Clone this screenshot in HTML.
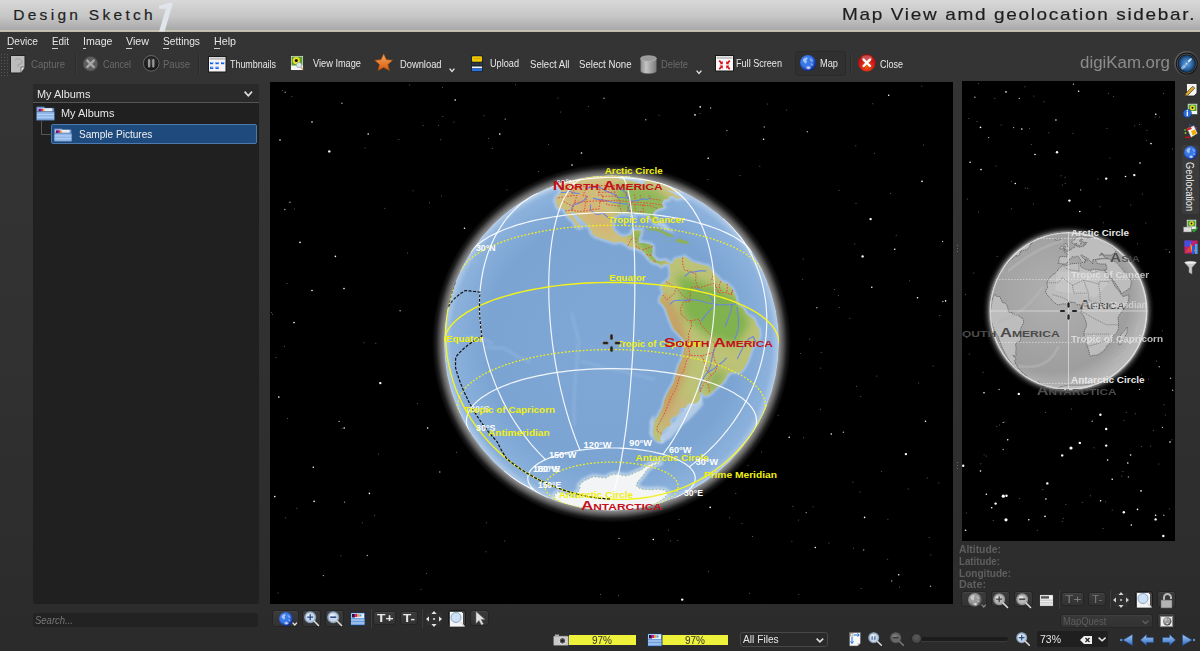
<!DOCTYPE html>
<html><head><meta charset="utf-8"><style>
html,body{margin:0;padding:0;}
body{width:1200px;height:651px;position:relative;overflow:hidden;background:#2e2e2e;font-family:"Liberation Sans", sans-serif;}
.t{position:absolute;white-space:nowrap;line-height:1;transform-origin:0 0;font-family:"Liberation Sans", sans-serif;}
</style></head><body>
<div style='position:absolute;left:0px;top:0px;width:1200px;height:30px;background:linear-gradient(#d8d8d8,#c6c6c6 55%,#a9a9a9)'></div>
<div style='position:absolute;left:0px;top:30px;width:1200px;height:2px;background:linear-gradient(#c9c7bb,#bdb9a6)'></div>
<svg width="25" height="32" viewBox="150 0 25 32" style="position:absolute;left:150px;top:0"><path d="M159 31.5L164.6 31.5L172.8 3.6L170.6 2.2L159.3 5.8L158.6 8.7L166 8.8Z" fill="#dfe5ea"/></svg>
<div style='position:absolute;left:0px;top:32px;width:1200px;height:619px;background:linear-gradient(#343434,#323232 40%,#2c2b2c)'></div>
<div style='position:absolute;left:7px;top:47.5px;width:6px;height:1px;background:#cfcfcf'></div>
<div style='position:absolute;left:52px;top:47.5px;width:6px;height:1px;background:#cfcfcf'></div>
<div style='position:absolute;left:83px;top:47.5px;width:3px;height:1px;background:#cfcfcf'></div>
<div style='position:absolute;left:126px;top:47.5px;width:6px;height:1px;background:#cfcfcf'></div>
<div style='position:absolute;left:162.5px;top:47.5px;width:6px;height:1px;background:#cfcfcf'></div>
<div style='position:absolute;left:213.5px;top:47.5px;width:6px;height:1px;background:#cfcfcf'></div>
<div style='position:absolute;left:33px;top:84px;width:225.6px;height:520px;background:#202020;border-radius:3px'></div>
<div style='position:absolute;left:33px;top:84px;width:225.6px;height:17.5px;background:#2a2a2a;border-radius:3px 3px 0 0'></div>
<div style='position:absolute;left:33px;top:101.5px;width:225.6px;height:1px;background:#555'></div>
<div style='position:absolute;left:51.4px;top:124.4px;width:206px;height:19.6px;background:#1f4a7d;border:1px solid #4a7ab0;box-sizing:border-box;border-radius:2px'></div>
<div style='position:absolute;left:33px;top:612.7px;width:225.3px;height:14px;background:#222;border-radius:3px'></div>
<div style='position:absolute;left:270px;top:82px;width:683px;height:522px;background:#000'></div>
<svg width="683" height="522" viewBox="270 82 683 522" style="position:absolute;left:270px;top:82px"><circle cx="329.3" cy="151.4" r="1.2" fill="#fff"/><circle cx="455.2" cy="100" r="0.8" fill="#fff"/><circle cx="499.8" cy="134.1" r="0.8" fill="#fff"/><circle cx="581.5" cy="153" r="0.8" fill="#fff"/><circle cx="572" cy="165" r="0.8" fill="#fff"/><circle cx="368.2" cy="134" r="0.8" fill="#fff"/><circle cx="312" cy="122" r="0.8" fill="#fff"/><circle cx="280" cy="140" r="0.8" fill="#fff"/><circle cx="335.4" cy="256.4" r="0.8" fill="#fff"/><circle cx="464.5" cy="228.3" r="0.8" fill="#fff"/><circle cx="300" cy="242.4" r="0.8" fill="#fff"/><circle cx="312" cy="290.5" r="0.8" fill="#fff"/><circle cx="344" cy="288.5" r="0.8" fill="#fff"/><circle cx="294" cy="322.6" r="0.8" fill="#fff"/><circle cx="700.2" cy="106.9" r="0.8" fill="#fff"/><circle cx="695" cy="114.9" r="0.8" fill="#fff"/><circle cx="708.2" cy="158.2" r="0.8" fill="#fff"/><circle cx="870.6" cy="219.1" r="1.2" fill="#fff"/><circle cx="862.6" cy="256.4" r="1.2" fill="#fff"/><circle cx="894.7" cy="249.2" r="0.8" fill="#fff"/><circle cx="922" cy="181.4" r="0.8" fill="#fff"/><circle cx="871.8" cy="287.3" r="0.8" fill="#fff"/><circle cx="917.5" cy="297.7" r="0.8" fill="#fff"/><circle cx="945.6" cy="300.9" r="0.8" fill="#fff"/><circle cx="763.6" cy="139.3" r="0.8" fill="#fff"/><circle cx="888.7" cy="95.2" r="0.8" fill="#fff"/><circle cx="380.3" cy="383.1" r="1.2" fill="#fff"/><circle cx="427.6" cy="428" r="0.8" fill="#fff"/><circle cx="274.8" cy="496.6" r="0.8" fill="#fff"/><circle cx="314.1" cy="501.4" r="0.8" fill="#fff"/><circle cx="369.4" cy="493.4" r="0.8" fill="#fff"/><circle cx="344.2" cy="428" r="0.8" fill="#fff"/><circle cx="278.8" cy="397.1" r="0.8" fill="#fff"/><circle cx="313.3" cy="467.3" r="0.8" fill="#fff"/><circle cx="905.9" cy="454.1" r="1.2" fill="#fff"/><circle cx="925.5" cy="421.2" r="0.8" fill="#fff"/><circle cx="831.3" cy="434" r="0.8" fill="#fff"/><circle cx="653.3" cy="539.5" r="0.8" fill="#fff"/><circle cx="682.2" cy="599.6" r="1.2" fill="#fff"/><circle cx="815.3" cy="547.5" r="0.8" fill="#fff"/><circle cx="898.7" cy="574.8" r="0.8" fill="#fff"/><circle cx="710.2" cy="507.4" r="0.8" fill="#fff"/><circle cx="864.6" cy="517.4" r="0.8" fill="#fff"/><circle cx="789.2" cy="437.2" r="0.8" fill="#fff"/><circle cx="362.4" cy="522.8" r="0.5" fill="#fff" fill-opacity="0.45"/><circle cx="807.3" cy="131.7" r="0.7" fill="#fff" fill-opacity="0.7"/><circle cx="839.3" cy="307.6" r="0.5" fill="#fff" fill-opacity="0.45"/><circle cx="272.4" cy="314.2" r="0.5" fill="#fff" fill-opacity="0.45"/><circle cx="426.6" cy="573.6" r="0.5" fill="#fff" fill-opacity="0.45"/><circle cx="291.8" cy="96.2" r="0.5" fill="#fff" fill-opacity="0.45"/><circle cx="909.6" cy="280.8" r="0.5" fill="#fff" fill-opacity="0.45"/><circle cx="558.0" cy="98.1" r="0.5" fill="#fff" fill-opacity="0.45"/><circle cx="429.5" cy="202.8" r="0.5" fill="#fff" fill-opacity="0.45"/><circle cx="285.6" cy="517.7" r="0.5" fill="#fff" fill-opacity="0.45"/><circle cx="707.8" cy="179.5" r="0.5" fill="#fff" fill-opacity="0.45"/><circle cx="855.8" cy="145.7" r="0.5" fill="#fff" fill-opacity="0.45"/><circle cx="761.6" cy="452.1" r="0.5" fill="#fff" fill-opacity="0.45"/><circle cx="670.6" cy="541.0" r="0.5" fill="#fff" fill-opacity="0.45"/><circle cx="294.5" cy="209.0" r="0.5" fill="#fff" fill-opacity="0.45"/><circle cx="800.3" cy="353.4" r="0.5" fill="#fff" fill-opacity="0.45"/><circle cx="604.0" cy="98.3" r="0.7" fill="#fff" fill-opacity="0.7"/><circle cx="749.3" cy="593.3" r="0.5" fill="#fff" fill-opacity="0.45"/><circle cx="538.6" cy="171.4" r="0.5" fill="#fff" fill-opacity="0.45"/><circle cx="938.8" cy="482.9" r="0.5" fill="#fff" fill-opacity="0.45"/><circle cx="856.0" cy="203.5" r="0.5" fill="#fff" fill-opacity="0.45"/><circle cx="918.7" cy="382.9" r="0.5" fill="#fff" fill-opacity="0.45"/><circle cx="921.8" cy="86.0" r="0.5" fill="#fff" fill-opacity="0.45"/><circle cx="828.9" cy="542.9" r="0.5" fill="#fff" fill-opacity="0.45"/><circle cx="821.2" cy="352.2" r="0.5" fill="#fff" fill-opacity="0.45"/><circle cx="560.7" cy="112.1" r="0.5" fill="#fff" fill-opacity="0.45"/><circle cx="290.0" cy="202.2" r="0.7" fill="#fff" fill-opacity="0.7"/><circle cx="668.4" cy="529.9" r="0.5" fill="#fff" fill-opacity="0.45"/><circle cx="813.0" cy="506.7" r="0.5" fill="#fff" fill-opacity="0.45"/><circle cx="843.4" cy="432.3" r="0.7" fill="#fff" fill-opacity="0.7"/><circle cx="282.3" cy="90.6" r="0.5" fill="#fff" fill-opacity="0.45"/><circle cx="440.7" cy="139.8" r="0.5" fill="#fff" fill-opacity="0.45"/><circle cx="505.2" cy="119.1" r="0.7" fill="#fff" fill-opacity="0.7"/><circle cx="456.6" cy="452.3" r="0.5" fill="#fff" fill-opacity="0.45"/><circle cx="287.1" cy="283.6" r="0.5" fill="#fff" fill-opacity="0.45"/><circle cx="398.9" cy="139.4" r="0.5" fill="#fff" fill-opacity="0.45"/><circle cx="285.2" cy="92.3" r="0.7" fill="#fff" fill-opacity="0.7"/><circle cx="759.8" cy="166.2" r="0.5" fill="#fff" fill-opacity="0.45"/><circle cx="421.0" cy="589.3" r="0.5" fill="#fff" fill-opacity="0.45"/><circle cx="700.0" cy="113.5" r="0.5" fill="#fff" fill-opacity="0.45"/><circle cx="929.2" cy="537.4" r="0.5" fill="#fff" fill-opacity="0.45"/><circle cx="854.8" cy="244.1" r="0.5" fill="#fff" fill-opacity="0.45"/><circle cx="442.6" cy="87.4" r="0.5" fill="#fff" fill-opacity="0.45"/><circle cx="296.8" cy="508.3" r="0.5" fill="#fff" fill-opacity="0.45"/><circle cx="861.1" cy="588.4" r="0.5" fill="#fff" fill-opacity="0.45"/><circle cx="506.9" cy="189.8" r="0.5" fill="#fff" fill-opacity="0.45"/><circle cx="342.0" cy="428.6" r="0.5" fill="#fff" fill-opacity="0.45"/><circle cx="863.7" cy="549.9" r="0.7" fill="#fff" fill-opacity="0.7"/><circle cx="407.6" cy="253.1" r="0.5" fill="#fff" fill-opacity="0.45"/><circle cx="803.2" cy="259.0" r="0.5" fill="#fff" fill-opacity="0.45"/><circle cx="729.6" cy="517.8" r="0.5" fill="#fff" fill-opacity="0.45"/><circle cx="504.8" cy="541.0" r="0.5" fill="#fff" fill-opacity="0.45"/><circle cx="600.5" cy="594.5" r="0.5" fill="#fff" fill-opacity="0.45"/><circle cx="764.3" cy="126.9" r="0.7" fill="#fff" fill-opacity="0.7"/><circle cx="890.5" cy="193.5" r="0.5" fill="#fff" fill-opacity="0.45"/><circle cx="679.1" cy="519.5" r="0.5" fill="#fff" fill-opacity="0.45"/><circle cx="860.8" cy="396.5" r="0.5" fill="#fff" fill-opacity="0.45"/><circle cx="874.3" cy="153.2" r="0.5" fill="#fff" fill-opacity="0.45"/><circle cx="341.9" cy="103.3" r="0.7" fill="#fff" fill-opacity="0.7"/><circle cx="860.0" cy="492.0" r="0.5" fill="#fff" fill-opacity="0.45"/><circle cx="802.7" cy="279.2" r="0.5" fill="#fff" fill-opacity="0.45"/><circle cx="423.1" cy="125.4" r="0.5" fill="#fff" fill-opacity="0.45"/><circle cx="876.7" cy="375.9" r="0.5" fill="#fff" fill-opacity="0.45"/><circle cx="806.2" cy="512.6" r="0.7" fill="#fff" fill-opacity="0.7"/><circle cx="726.9" cy="130.6" r="0.7" fill="#fff" fill-opacity="0.7"/><circle cx="872.8" cy="103.8" r="0.5" fill="#fff" fill-opacity="0.45"/><circle cx="942.9" cy="301.5" r="0.7" fill="#fff" fill-opacity="0.7"/><circle cx="384.8" cy="208.3" r="0.5" fill="#fff" fill-opacity="0.45"/><circle cx="340.9" cy="555.7" r="0.5" fill="#fff" fill-opacity="0.45"/><circle cx="930.8" cy="554.9" r="0.5" fill="#fff" fill-opacity="0.45"/><circle cx="339.1" cy="421.4" r="0.7" fill="#fff" fill-opacity="0.7"/><circle cx="278.1" cy="593.0" r="0.5" fill="#fff" fill-opacity="0.45"/><circle cx="484.0" cy="115.7" r="0.5" fill="#fff" fill-opacity="0.45"/><circle cx="930.5" cy="586.3" r="0.7" fill="#fff" fill-opacity="0.7"/><circle cx="417.3" cy="403.6" r="0.5" fill="#fff" fill-opacity="0.45"/><circle cx="438.5" cy="125.2" r="0.5" fill="#fff" fill-opacity="0.45"/><circle cx="939.7" cy="315.5" r="0.5" fill="#fff" fill-opacity="0.45"/><circle cx="708.6" cy="571.2" r="0.5" fill="#fff" fill-opacity="0.45"/><circle cx="486.4" cy="522.7" r="0.5" fill="#fff" fill-opacity="0.45"/><circle cx="284.9" cy="209.5" r="0.7" fill="#fff" fill-opacity="0.7"/><circle cx="645.8" cy="119.8" r="0.7" fill="#fff" fill-opacity="0.7"/><circle cx="809.7" cy="339.0" r="0.5" fill="#fff" fill-opacity="0.45"/><circle cx="375.8" cy="343.2" r="0.5" fill="#fff" fill-opacity="0.45"/><circle cx="323.4" cy="575.6" r="0.7" fill="#fff" fill-opacity="0.7"/><circle cx="798.8" cy="594.2" r="0.5" fill="#fff" fill-opacity="0.45"/><circle cx="488.5" cy="138.5" r="0.5" fill="#fff" fill-opacity="0.45"/><circle cx="896.2" cy="235.3" r="0.5" fill="#fff" fill-opacity="0.45"/><circle cx="367.3" cy="555.5" r="0.7" fill="#fff" fill-opacity="0.7"/><circle cx="485.9" cy="551.7" r="0.5" fill="#fff" fill-opacity="0.45"/><circle cx="887.9" cy="519.3" r="0.5" fill="#fff" fill-opacity="0.45"/><circle cx="739.9" cy="175.5" r="0.5" fill="#fff" fill-opacity="0.45"/><circle cx="378.4" cy="454.0" r="0.5" fill="#fff" fill-opacity="0.45"/><circle cx="442.8" cy="116.4" r="0.5" fill="#fff" fill-opacity="0.45"/><circle cx="820.6" cy="368.1" r="0.5" fill="#fff" fill-opacity="0.45"/><circle cx="849.9" cy="318.3" r="0.5" fill="#fff" fill-opacity="0.45"/><circle cx="287.6" cy="418.5" r="0.5" fill="#fff" fill-opacity="0.45"/><circle cx="659.0" cy="115.3" r="0.5" fill="#fff" fill-opacity="0.45"/><circle cx="365.0" cy="147.9" r="0.5" fill="#fff" fill-opacity="0.45"/><circle cx="834.7" cy="289.5" r="0.5" fill="#fff" fill-opacity="0.45"/><circle cx="276.1" cy="357.4" r="0.5" fill="#fff" fill-opacity="0.45"/><circle cx="887.7" cy="559.3" r="0.5" fill="#fff" fill-opacity="0.45"/><circle cx="710.6" cy="108.0" r="0.7" fill="#fff" fill-opacity="0.7"/><circle cx="619.0" cy="538.4" r="0.7" fill="#fff" fill-opacity="0.7"/><circle cx="791.9" cy="541.3" r="0.5" fill="#fff" fill-opacity="0.45"/><circle cx="741.9" cy="523.6" r="0.5" fill="#fff" fill-opacity="0.45"/><circle cx="747.9" cy="465.2" r="0.5" fill="#fff" fill-opacity="0.45"/><circle cx="853.3" cy="548.3" r="0.5" fill="#fff" fill-opacity="0.45"/><circle cx="441.4" cy="195.9" r="0.5" fill="#fff" fill-opacity="0.45"/><circle cx="786.3" cy="110.1" r="0.5" fill="#fff" fill-opacity="0.45"/><circle cx="767.3" cy="104.1" r="0.5" fill="#fff" fill-opacity="0.45"/><circle cx="820.4" cy="409.2" r="0.5" fill="#fff" fill-opacity="0.45"/><circle cx="891.7" cy="580.9" r="0.7" fill="#fff" fill-opacity="0.7"/><circle cx="798.5" cy="520.0" r="0.5" fill="#fff" fill-opacity="0.45"/><circle cx="899.5" cy="587.1" r="0.5" fill="#fff" fill-opacity="0.45"/><circle cx="816.8" cy="307.7" r="0.7" fill="#fff" fill-opacity="0.7"/><circle cx="492.3" cy="148.6" r="0.5" fill="#fff" fill-opacity="0.45"/><circle cx="923.4" cy="144.9" r="0.5" fill="#fff" fill-opacity="0.45"/><circle cx="548.6" cy="144.3" r="0.5" fill="#fff" fill-opacity="0.45"/><circle cx="439.8" cy="472.0" r="0.7" fill="#fff" fill-opacity="0.7"/><circle cx="400.1" cy="310.7" r="0.7" fill="#fff" fill-opacity="0.7"/><circle cx="839.0" cy="190.2" r="0.5" fill="#fff" fill-opacity="0.45"/><circle cx="735.8" cy="493.6" r="0.5" fill="#fff" fill-opacity="0.45"/><circle cx="933.1" cy="366.1" r="0.5" fill="#fff" fill-opacity="0.45"/><circle cx="852.9" cy="482.1" r="0.5" fill="#fff" fill-opacity="0.45"/><circle cx="344.5" cy="502.1" r="0.7" fill="#fff" fill-opacity="0.7"/><circle cx="927.2" cy="478.0" r="0.5" fill="#fff" fill-opacity="0.45"/><circle cx="363.9" cy="342.7" r="0.5" fill="#fff" fill-opacity="0.45"/><circle cx="271.6" cy="312.6" r="0.5" fill="#fff" fill-opacity="0.45"/><circle cx="803.5" cy="437.7" r="0.5" fill="#fff" fill-opacity="0.45"/><circle cx="409.7" cy="85.0" r="0.5" fill="#fff" fill-opacity="0.45"/><circle cx="677.8" cy="540.6" r="0.5" fill="#fff" fill-opacity="0.45"/><circle cx="618.5" cy="595.3" r="0.5" fill="#fff" fill-opacity="0.45"/><circle cx="838.5" cy="295.3" r="0.5" fill="#fff" fill-opacity="0.45"/><circle cx="942.6" cy="241.5" r="0.7" fill="#fff" fill-opacity="0.7"/><circle cx="515.4" cy="84.8" r="0.5" fill="#fff" fill-opacity="0.45"/><circle cx="856.6" cy="386.3" r="0.5" fill="#fff" fill-opacity="0.45"/><circle cx="881.6" cy="471.6" r="0.5" fill="#fff" fill-opacity="0.45"/><circle cx="778.1" cy="415.3" r="0.5" fill="#fff" fill-opacity="0.45"/><circle cx="908.2" cy="489.1" r="0.5" fill="#fff" fill-opacity="0.45"/><circle cx="792.9" cy="506.2" r="0.5" fill="#fff" fill-opacity="0.45"/><circle cx="752.5" cy="536.6" r="0.5" fill="#fff" fill-opacity="0.45"/><circle cx="374.4" cy="515.3" r="0.5" fill="#fff" fill-opacity="0.45"/><circle cx="588.6" cy="106.6" r="0.5" fill="#fff" fill-opacity="0.45"/><circle cx="284.4" cy="346.2" r="0.5" fill="#fff" fill-opacity="0.45"/><circle cx="413.0" cy="190.8" r="0.5" fill="#fff" fill-opacity="0.45"/><circle cx="454.0" cy="121.9" r="0.5" fill="#fff" fill-opacity="0.45"/></svg>
<svg width="683" height="522" viewBox="270 82 683 522" style="position:absolute;left:270px;top:82px">
<defs>
<radialGradient id="halo" cx="611.5" cy="343" r="179.5" gradientUnits="userSpaceOnUse"><stop offset="0.9331" stop-color="#929292"/><stop offset="0.9554" stop-color="#5c5c5c"/><stop offset="0.9777" stop-color="#1c1c1c"/><stop offset="1" stop-color="#000"/></radialGradient>
<radialGradient id="ocean" cx="611.5" cy="343" r="167.5" gradientUnits="userSpaceOnUse"><stop offset="0" stop-color="#7fa8d6"/><stop offset="0.75" stop-color="#7ba4d3"/><stop offset="0.96" stop-color="#8cb2dc"/><stop offset="1" stop-color="#a4c2e4"/></radialGradient>
<radialGradient id="rim" cx="611.5" cy="343" r="167.5" gradientUnits="userSpaceOnUse"><stop offset="0.95" stop-color="#fff" stop-opacity="0"/><stop offset="0.99" stop-color="#fff" stop-opacity="0.12"/><stop offset="1" stop-color="#fff" stop-opacity="0.3"/></radialGradient>
<clipPath id="gclip"><circle cx="611.5" cy="343" r="167.5"/></clipPath>
<clipPath id="naclip"><path d="M670.4 265.2L666.8 264L664.1 263.9L661.5 265.9L658 263.4L652.7 262.1L648.6 258.3L646.5 255.1L641.3 250.1L638.4 249.2L635.6 248.3L630.2 247.1L625.6 243.8L620.8 241.4L615.7 242.4L612.9 241.7L610.1 241L606.6 239.9L603.1 238.8L599.7 237.7L596.3 236.7L591.5 233.1L591.2 229.9L588.7 226.4L586.7 224.5L584.7 222.6L581.9 220.2L579.2 217.7L576.7 215.3L574.6 213.6L572.4 212.5L570.4 211.4L571.4 213.3L572.5 215.3L573.8 217L575.1 218.8L576.3 220.6L577.5 222.5L579.2 225L580.8 226.9L578.7 227.5L575.1 224.7L574.3 221.8L572.2 220L570.2 218.3L567.7 215.6L565.7 212.5L565.1 210L562.9 208.6L560.7 208.5L558.5 208.3L557.7 206.8L557 205.4L556.6 203.7L556 202.4L555.5 201.1L555.9 198.9L557 196.8L558.2 195.4L559.3 194.1L560.5 192.8L561 191.5L561.5 190.3L561.8 188.8L560.7 188.6L559.6 188.5L559.7 187.3L559.8 186.7L560 186L559.5 185.6L559.1 185.2L558.8 185L558.5 184.9L558.2 184.7L557.5 184.8L556.9 185L556.3 185.1L555.3 185.3L554.4 185.6L553.4 185.9L552.5 186.2L551.6 186.6L551 186.8L550.3 187.1L549.7 187.3L548.8 187.7L547.9 188L547 188.4L543.1 190.1L540.7 191.2L538.3 192.3L536.4 193.3L534.5 194.2L532.6 195.2L530.8 196.2L529 197.2L527.2 198.3L526.1 198.9L524.9 199.6L523.8 200.3L525.9 199L528 197.8L530.1 196.6L533 195L536 193.5L535.3 193.8L534.7 194.2L534.1 194.5L533.5 194.8L534 194.5L534.6 194.2L535.2 193.9L537.2 192.9L539.2 191.9L541.4 190.9L543.1 190.1L544.8 189.3L546.6 188.6L546.2 188.7L546 188.9L545.7 189L545.4 189.1L545.2 189.2L545.2 189.2L546.6 188.6L548 188L549.5 187.4L550.9 186.8L552.4 186.3L554 185.7L555.4 185.2L556.7 184.7L558.1 184.2L559.4 183.8L560.5 183.4L561.6 183.1L562.7 182.8L563.8 182.4L564.9 182.1L565.1 182L565.4 182L565.7 181.9L566 181.8L566.3 181.7L566.8 181.6L567.2 181.5L567.7 181.3L568.2 181.2L568.7 181L569.3 180.9L569.9 180.8L570.4 180.6L571 180.5L571.7 180.3L572.2 180.2L572.7 180.1L573.3 179.9L573.8 179.8L574.4 179.7L575.6 179.4L576.7 179.2L577.8 178.9L578.9 178.7L580 178.5L581.1 178.3L581.8 178.2L582.5 178L583.3 177.9L584.1 177.8L584.8 177.6L585.6 177.5L586.4 177.4L587.2 177.3L588 177.2L588.8 177L589.6 176.9L590.5 176.8L591.5 176.7L592.4 176.6L593.4 176.5L594.4 176.4L595.4 176.3L596.4 176.2L597.4 176.1L598.5 176L599.5 175.9L600.6 175.9L601.7 175.8L602.8 175.7L603.9 175.7L604.9 175.6L606 175.6L607.1 175.6L608.2 175.5L609.3 175.5L610.4 175.5L611.5 175.5L612.6 175.5L613.7 175.5L614.7 175.5L615.7 175.6L616.8 175.6L617.9 175.6L619.1 175.7L620.2 175.7L621.4 175.8L622.5 175.9L623.7 176L624.8 176L626 176.1L627.2 176.3L628.4 176.4L629.5 176.5L628.8 176.5L628 176.4L627.1 176.4L626.2 176.4L625.3 176.5L624.3 176.5L623 176.5L621.8 176.6L620.4 176.7L619 176.8L618.3 177.2L617.6 177.6L616.8 178L618.5 178.6L620.2 179.2L622.1 179.4L624 179.7L625.9 179.9L627.8 180.2L629.5 180.5L631.2 180.8L633 181.1L635.9 182.1L638.9 183.2L641.7 184.1L644.6 185L644.4 184.2L644.3 183.4L644.7 182.6L645.1 181.9L643.6 181L642.1 180.2L640.7 179.5L639.3 178.8L638.6 178.3L639.9 178.5L641.2 178.7L642.6 178.9L643.9 179.2L645.8 179.6L647.7 180L649.6 180.5L652.1 181.3L654.6 182.3L655.5 182.3L656.3 182.3L657.1 182.4L660.4 183.6L663.8 184.9L667.2 186.3L669.5 187.1L671.7 188L674 188.9L676.9 190.3L679.7 191.7L679.2 192L678.5 192.2L677.5 192.5L675.9 192.1L674.3 191.7L672.6 191.3L670.9 190.9L669.3 190.7L667.5 190.5L666.2 191.1L668.1 191.5L670 191.9L671.9 192.4L674.6 194.3L676 195.2L678.1 196.1L680.3 197L682.4 198L681.1 198.1L679.7 198.2L678.3 198.3L676.8 198.4L672.7 196.1L671.3 196.2L669.8 196.3L668.4 196.4L668.8 198.5L670.1 199L667.6 199.2L665.5 199.3L663.2 199.4L663.7 200.9L662.5 201.7L661.6 204.2L663.7 206.8L662 207.9L660 208.3L658 208.7L655.2 210.5L653 212.9L653.4 215.6L656 218.7L657.8 221.8L657.3 224.3L655.3 224L653.6 221.3L650.5 218.1L649.7 215.2L646.6 214L643 214.1L640.4 213.4L637.9 212.8L635.4 212.7L632.9 212.7L633.7 214.9L629.3 214.1L626.1 213.6L622.9 213.2L619.2 214L614.6 216.2L613.1 219.1L612.8 221.1L612.6 223.1L612.4 225.2L612.3 227.3L613.7 230.5L617 233.8L621.2 236.8L624.7 236.4L628.1 236.1L631.3 234.7L632.5 231L637.2 230.2L641.2 230.4L640.8 232.6L640.3 234.7L639.1 236.9L639 239.9L638.9 243L642 243.1L645 243.2L647.8 243.9L650.5 244.6L652.6 246.5L652.5 249.2L652.4 251.9L652.1 255.6L656.5 260.5L661.2 261.3L665.3 260.7L669.5 263.3L670.4 265.2Z"/></clipPath>
<clipPath id="saclip"><path d="M669.5 263.3L672.2 264.2L673.4 261.8L674.5 259.5L677.8 258.3L682.6 257.6L685 256.6L688.6 259.5L692.5 262.2L695.7 263L698.7 263.8L701.2 264.5L703.6 265.2L705.9 265.6L708.3 266.1L710.9 269.5L713.5 272.7L715.9 275.3L718.4 277.9L720.8 281.2L723.5 282.2L726.2 283.2L728.9 285.6L731.6 288L733.8 292.2L735.9 297.6L736.5 300.9L736.9 304.2L739.8 306.8L741.7 307.6L743.5 308.4L746 313.8L748.1 315.3L750.2 316.8L752.2 318.2L754.1 319.6L755.5 322.8L756.8 326.1L758.1 327.8L759.4 329.6L759.5 332.9L759.6 336.2L758.6 340.1L757 342L755.3 344L753.7 346.1L752.1 348.2L751 351.4L749.9 354.7L748.8 357.7L747.8 360.8L746.4 363.5L745 366.2L743.4 368.6L741.7 370.9L739.4 372.6L737.3 372.1L735.2 371.7L733.2 371.9L731.3 372.1L727.3 375.1L725.6 378.3L723.8 381.5L720.2 384.8L716.2 387.9L713.9 390.2L711.7 392.4L708.6 395L705.2 396L703.6 394.6L701.9 393.1L700.2 391.7L700.4 396.3L699.3 400.5L696 403.4L693.7 403.4L691.3 403.4L688.9 403.4L686.9 404.4L685.9 407.9L683.6 407.6L681.3 407.3L679.1 410.3L679.9 412.2L676 416.1L672.6 417.3L670 420.4L671.2 424.8L668.7 426.2L666.2 427.7L664 430L661.7 433L662 434.9L659.8 438.3L660.8 439.8L661.7 441.3L659.7 441.3L657.7 441.2L656.3 439.9L654.9 438.7L654 435.9L653 433.2L653.3 430L653.6 426.8L654.2 423.6L654.8 420.3L657.9 416.7L659.2 414.2L660.5 411.7L661.8 409.1L663.1 406.5L663.6 403.8L664.1 401.1L665.5 397.7L666.8 394.4L668.7 391.1L670.6 387.8L672.2 385.2L673.7 382.5L674.6 379.7L675.4 376.9L676.2 374.1L677 371.3L677.8 368.5L678.6 365.7L680.1 363L681.6 360.3L682.3 357.5L683 354.6L683.7 351.8L684.3 348.4L684.8 345.1L685.3 341.7L682.8 338.3L680.5 335.9L678.2 333.6L675.9 331.2L673.5 328.8L671.7 324.7L670.4 321.6L669 318.5L668 315.5L667 312.5L666 309.5L663.4 304.9L659.6 301.7L660.3 297.5L662.6 295L663.2 291.4L661 287.9L663.3 283.2L666.6 281.7L668.3 279.3L670.1 276.8L670.3 274.2L670.4 271.6L669.7 267.7L670.4 265.2L669.5 263.3Z"/></clipPath>
<filter id="blur3" x="-20%" y="-20%" width="140%" height="140%"><feGaussianBlur stdDeviation="4"/></filter>
<filter id="blur1"><feGaussianBlur stdDeviation="1.2"/></filter>
</defs>
<circle cx="611.5" cy="343" r="179.5" fill="url(#halo)"/>
<g clip-path="url(#gclip)">
<circle cx="611.5" cy="343" r="167.5" fill="url(#ocean)"/>
<g filter="url(#blur1)" opacity="0.55"><path d="M670.4 265.2L666.8 264L664.1 263.9L661.5 265.9L658 263.4L652.7 262.1L648.6 258.3L646.5 255.1L641.3 250.1L638.4 249.2L635.6 248.3L630.2 247.1L625.6 243.8L620.8 241.4L615.7 242.4L612.9 241.7L610.1 241L606.6 239.9L603.1 238.8L599.7 237.7L596.3 236.7L591.5 233.1L591.2 229.9L588.7 226.4L586.7 224.5L584.7 222.6L581.9 220.2L579.2 217.7L576.7 215.3L574.6 213.6L572.4 212.5L570.4 211.4L571.4 213.3L572.5 215.3L573.8 217L575.1 218.8L576.3 220.6L577.5 222.5L579.2 225L580.8 226.9L578.7 227.5L575.1 224.7L574.3 221.8L572.2 220L570.2 218.3L567.7 215.6L565.7 212.5L565.1 210L562.9 208.6L560.7 208.5L558.5 208.3L557.7 206.8L557 205.4L556.6 203.7L556 202.4L555.5 201.1L555.9 198.9L557 196.8L558.2 195.4L559.3 194.1L560.5 192.8L561 191.5L561.5 190.3L561.8 188.8L560.7 188.6L559.6 188.5L559.7 187.3L559.8 186.7L560 186L559.5 185.6L559.1 185.2L558.8 185L558.5 184.9L558.2 184.7L557.5 184.8L556.9 185L556.3 185.1L555.3 185.3L554.4 185.6L553.4 185.9L552.5 186.2L551.6 186.6L551 186.8L550.3 187.1L549.7 187.3L548.8 187.7L547.9 188L547 188.4L543.1 190.1L540.7 191.2L538.3 192.3L536.4 193.3L534.5 194.2L532.6 195.2L530.8 196.2L529 197.2L527.2 198.3L526.1 198.9L524.9 199.6L523.8 200.3L525.9 199L528 197.8L530.1 196.6L533 195L536 193.5L535.3 193.8L534.7 194.2L534.1 194.5L533.5 194.8L534 194.5L534.6 194.2L535.2 193.9L537.2 192.9L539.2 191.9L541.4 190.9L543.1 190.1L544.8 189.3L546.6 188.6L546.2 188.7L546 188.9L545.7 189L545.4 189.1L545.2 189.2L545.2 189.2L546.6 188.6L548 188L549.5 187.4L550.9 186.8L552.4 186.3L554 185.7L555.4 185.2L556.7 184.7L558.1 184.2L559.4 183.8L560.5 183.4L561.6 183.1L562.7 182.8L563.8 182.4L564.9 182.1L565.1 182L565.4 182L565.7 181.9L566 181.8L566.3 181.7L566.8 181.6L567.2 181.5L567.7 181.3L568.2 181.2L568.7 181L569.3 180.9L569.9 180.8L570.4 180.6L571 180.5L571.7 180.3L572.2 180.2L572.7 180.1L573.3 179.9L573.8 179.8L574.4 179.7L575.6 179.4L576.7 179.2L577.8 178.9L578.9 178.7L580 178.5L581.1 178.3L581.8 178.2L582.5 178L583.3 177.9L584.1 177.8L584.8 177.6L585.6 177.5L586.4 177.4L587.2 177.3L588 177.2L588.8 177L589.6 176.9L590.5 176.8L591.5 176.7L592.4 176.6L593.4 176.5L594.4 176.4L595.4 176.3L596.4 176.2L597.4 176.1L598.5 176L599.5 175.9L600.6 175.9L601.7 175.8L602.8 175.7L603.9 175.7L604.9 175.6L606 175.6L607.1 175.6L608.2 175.5L609.3 175.5L610.4 175.5L611.5 175.5L612.6 175.5L613.7 175.5L614.7 175.5L615.7 175.6L616.8 175.6L617.9 175.6L619.1 175.7L620.2 175.7L621.4 175.8L622.5 175.9L623.7 176L624.8 176L626 176.1L627.2 176.3L628.4 176.4L629.5 176.5L628.8 176.5L628 176.4L627.1 176.4L626.2 176.4L625.3 176.5L624.3 176.5L623 176.5L621.8 176.6L620.4 176.7L619 176.8L618.3 177.2L617.6 177.6L616.8 178L618.5 178.6L620.2 179.2L622.1 179.4L624 179.7L625.9 179.9L627.8 180.2L629.5 180.5L631.2 180.8L633 181.1L635.9 182.1L638.9 183.2L641.7 184.1L644.6 185L644.4 184.2L644.3 183.4L644.7 182.6L645.1 181.9L643.6 181L642.1 180.2L640.7 179.5L639.3 178.8L638.6 178.3L639.9 178.5L641.2 178.7L642.6 178.9L643.9 179.2L645.8 179.6L647.7 180L649.6 180.5L652.1 181.3L654.6 182.3L655.5 182.3L656.3 182.3L657.1 182.4L660.4 183.6L663.8 184.9L667.2 186.3L669.5 187.1L671.7 188L674 188.9L676.9 190.3L679.7 191.7L679.2 192L678.5 192.2L677.5 192.5L675.9 192.1L674.3 191.7L672.6 191.3L670.9 190.9L669.3 190.7L667.5 190.5L666.2 191.1L668.1 191.5L670 191.9L671.9 192.4L674.6 194.3L676 195.2L678.1 196.1L680.3 197L682.4 198L681.1 198.1L679.7 198.2L678.3 198.3L676.8 198.4L672.7 196.1L671.3 196.2L669.8 196.3L668.4 196.4L668.8 198.5L670.1 199L667.6 199.2L665.5 199.3L663.2 199.4L663.7 200.9L662.5 201.7L661.6 204.2L663.7 206.8L662 207.9L660 208.3L658 208.7L655.2 210.5L653 212.9L653.4 215.6L656 218.7L657.8 221.8L657.3 224.3L655.3 224L653.6 221.3L650.5 218.1L649.7 215.2L646.6 214L643 214.1L640.4 213.4L637.9 212.8L635.4 212.7L632.9 212.7L633.7 214.9L629.3 214.1L626.1 213.6L622.9 213.2L619.2 214L614.6 216.2L613.1 219.1L612.8 221.1L612.6 223.1L612.4 225.2L612.3 227.3L613.7 230.5L617 233.8L621.2 236.8L624.7 236.4L628.1 236.1L631.3 234.7L632.5 231L637.2 230.2L641.2 230.4L640.8 232.6L640.3 234.7L639.1 236.9L639 239.9L638.9 243L642 243.1L645 243.2L647.8 243.9L650.5 244.6L652.6 246.5L652.5 249.2L652.4 251.9L652.1 255.6L656.5 260.5L661.2 261.3L665.3 260.7L669.5 263.3L670.4 265.2Z" fill="none" stroke="#c8dcef" stroke-width="5"/><path d="M669.5 263.3L672.2 264.2L673.4 261.8L674.5 259.5L677.8 258.3L682.6 257.6L685 256.6L688.6 259.5L692.5 262.2L695.7 263L698.7 263.8L701.2 264.5L703.6 265.2L705.9 265.6L708.3 266.1L710.9 269.5L713.5 272.7L715.9 275.3L718.4 277.9L720.8 281.2L723.5 282.2L726.2 283.2L728.9 285.6L731.6 288L733.8 292.2L735.9 297.6L736.5 300.9L736.9 304.2L739.8 306.8L741.7 307.6L743.5 308.4L746 313.8L748.1 315.3L750.2 316.8L752.2 318.2L754.1 319.6L755.5 322.8L756.8 326.1L758.1 327.8L759.4 329.6L759.5 332.9L759.6 336.2L758.6 340.1L757 342L755.3 344L753.7 346.1L752.1 348.2L751 351.4L749.9 354.7L748.8 357.7L747.8 360.8L746.4 363.5L745 366.2L743.4 368.6L741.7 370.9L739.4 372.6L737.3 372.1L735.2 371.7L733.2 371.9L731.3 372.1L727.3 375.1L725.6 378.3L723.8 381.5L720.2 384.8L716.2 387.9L713.9 390.2L711.7 392.4L708.6 395L705.2 396L703.6 394.6L701.9 393.1L700.2 391.7L700.4 396.3L699.3 400.5L696 403.4L693.7 403.4L691.3 403.4L688.9 403.4L686.9 404.4L685.9 407.9L683.6 407.6L681.3 407.3L679.1 410.3L679.9 412.2L676 416.1L672.6 417.3L670 420.4L671.2 424.8L668.7 426.2L666.2 427.7L664 430L661.7 433L662 434.9L659.8 438.3L660.8 439.8L661.7 441.3L659.7 441.3L657.7 441.2L656.3 439.9L654.9 438.7L654 435.9L653 433.2L653.3 430L653.6 426.8L654.2 423.6L654.8 420.3L657.9 416.7L659.2 414.2L660.5 411.7L661.8 409.1L663.1 406.5L663.6 403.8L664.1 401.1L665.5 397.7L666.8 394.4L668.7 391.1L670.6 387.8L672.2 385.2L673.7 382.5L674.6 379.7L675.4 376.9L676.2 374.1L677 371.3L677.8 368.5L678.6 365.7L680.1 363L681.6 360.3L682.3 357.5L683 354.6L683.7 351.8L684.3 348.4L684.8 345.1L685.3 341.7L682.8 338.3L680.5 335.9L678.2 333.6L675.9 331.2L673.5 328.8L671.7 324.7L670.4 321.6L669 318.5L668 315.5L667 312.5L666 309.5L663.4 304.9L659.6 301.7L660.3 297.5L662.6 295L663.2 291.4L661 287.9L663.3 283.2L666.6 281.7L668.3 279.3L670.1 276.8L670.3 274.2L670.4 271.6L669.7 267.7L670.4 265.2L669.5 263.3Z" fill="none" stroke="#c8dcef" stroke-width="4"/></g>
<g filter="url(#blur1)" fill="#c4d8ee" opacity="0.75"><path d="M701.5 395.1L702.2 398.4L702.7 401.6L703.2 404.8L701.1 407.1L699 409.4L696.9 411.7L694.8 414L692.7 416.3L690.5 418.6L688 420.7L685.5 422.9L683 425L680.5 427.1L678.5 429.4L676.6 431.6L674.6 433.8L672.7 436L670.8 438.2L668.3 439.6L665.9 441L663.5 442.4L661.1 443.7L660.2 442.7L659.1 441.6L658.1 440.5L659.8 438.3L661.6 436.1L663.4 433.8L665.2 431.6L667 429.3L668.9 427L670.9 424.7L672.9 422.4L674.9 420L676.9 417.7L678.9 415.4L680.9 413L682.9 410.6L684.6 408.2L686.3 405.7L688 403.2L690.7 401.6L693.4 399.9L696.1 398.3L698.8 396.7L701.5 395.1Z"/><path d="M657.4 219.8L660.1 221.1L662.8 222.4L665.5 223.7L667.8 226L670.1 228.4L672.4 230.8L674.7 233.2L677.3 234.4L679.9 235.7L682.6 236.9L685.2 238.2L682.6 237L680 235.8L677.4 234.7L674.8 233.6L672.1 232.6L669.5 231.6L666.9 230.6L664.2 229.6L661.3 227.2L658.4 224.8L657.9 222.3L657.4 219.8Z"/><path d="M653.9 413.4L653.7 416.1L653.5 418.8L653.2 421.4L652.9 424.1L652.6 426.6L652.2 429.2L651.8 431.7L652.3 434.8L652.8 437.9L653.1 440.9L652.2 439.1L651.3 437.4L650.3 435.7L649.3 433.9L649.5 431.4L649.6 428.8L649.7 426.2L649.8 423.6L649.8 421L651.2 418.5L652.6 416L653.9 413.4Z"/></g>
<g filter="url(#blur1)" fill="none" stroke="#a0bfe4" stroke-width="4" opacity="0.3"><path d="M484 347.4L485.9 347.4L487.9 347.5L489.9 347.6L492 347.6L494 347.7L496.2 347.9L498.3 348L500.5 348.1L502.7 348.3L504.9 348.4L507.5 350.1L510.1 351.7L512.7 353.3L515.4 355L518 356.6L520.6 357.8L523.2 358.9L525.8 360.1L528.4 361.2L531.1 362.4"/><path d="M465 336.6L466.6 336.8L468.1 337L469.8 337.2L471.4 337.4L473.2 337.6L474.9 337.9L476.7 338.1L478.6 338.4L480.5 338.7L482.4 339L484.5 339.9L486.6 340.8L488.7 341.7L490.9 342.6L493.2 343.5"/><path d="M472.5 262.9L473.7 262.5L474.8 262.1L476.1 261.7L477.4 261.3L478.7 261"/><path d="M571.6 312.2L572.3 315.1L573 317.9L573.7 320.7L574.4 323.6L575.1 326.4L575.8 329.3L576.6 332.1L577.3 335L578 337.9L578.8 340.7L578.5 343.7L578.2 346.6L577.9 349.6L577.6 352.6L577.4 355.5L577.1 358.5L576.9 361.4L576.7 364.3L576.6 367.3L576.4 370.2L576 373.1L575.7 376L575.4 379L575.1 381.9L574.8 384.8L574.6 387.6L574.4 390.5L574.2 393.4L574.1 396.2L574 399L573.9 401.8L573.9 404.6L573.8 407.3L573.9 410.1L573.9 412.8L574 415.5L574.1 418.2L574.3 420.8L574.5 423.4L574.7 426"/><path d="M629 282.8L631.9 284.2L634.8 285.8"/><path d="M654.9 379.7L652.6 379L650.4 378.4L648 377.7L645.7 377.1L643.4 376.4L641 375.8L638.6 375.2L636.2 374.6L633.8 374L631.4 373.5L628.9 372.9L626.5 372.4L624 371.9L621.5 371.3L619 370.9L616.5 370.4L614 369.9L611.5 369.5L609 369.1L606.4 368.7L603.9 367.8L601.3 367L598.7 366.2L596.2 365.4L593.6 364.7L591 363.9L588.3 363.2L585.7 362.5L583.1 361.8L580.5 361.1"/></g>
<path d="M575.6 493.6L575.8 493.4L576.1 493.3L576.3 493.1L576.6 492.9L576.9 492.7L577.2 492.5L577.4 492.4L577.7 492.2L578.1 492L578.4 491.9L578.4 491.6L578.5 491.4L578.6 491.1L578.7 490.8L578.8 490.6L578.9 490.3L579 490.1L579.2 489.8L579.3 489.6L579.5 489.3L579.5 489L579.6 488.7L579.7 488.4L579.8 488.1L579.9 487.7L579.8 487.3L579.7 486.9L579.6 486.4L579.6 486L579.6 485.5L579.8 485.2L580 484.8L580.3 484.5L580.5 484.2L580.8 483.8L581.1 483.5L581.4 483.2L581.8 482.9L582.1 482.5L582.5 482.2L582.9 481.9L583.3 481.5L583.7 481.2L584.1 480.9L584.6 480.6L585.1 480.3L585.7 480.1L586.3 479.9L586.9 479.7L587.5 479.4L588 479.1L588.6 478.8L589.1 478.5L589.7 478.2L590.3 477.9L590.9 477.7L591.6 477.4L592.3 477.2L593 477L593.7 476.8L594.6 476.8L595.4 476.9L596.3 477L597.1 477.1L598 477.1L598.9 477.2L599.7 477.3L600.5 477.4L601.4 477.5L602.2 477.7L603 477.7L603.8 477.8L604.6 477.8L605.4 477.9L606.1 477.9L606.8 477.5L607.5 477L608.3 476.5L609 476L609.8 475.5L610.7 475.3L611.5 475L612.4 474.8L613.2 474.5L614.1 474.3L615 474.3L615.8 474.3L616.7 474.4L617.5 474.4L618.4 474.4L619.2 474.6L620 474.8L620.8 475L621.6 475.2L622.4 475.4L623.2 475.5L624 475.6L624.8 475.7L625.7 475.8L626.5 475.8L627.5 475.5L628.5 475.2L629.6 474.9L630.6 474.6L631.7 474.3L633.1 473.5L634.5 472.8L636 472L637.4 471.5L638.7 471L640.1 470.5L641.5 470L644.5 467.4L646.5 466.2L648.6 465L650.3 464.3L652.1 463.6L653.9 462.9L655.4 462.5L656.9 462.2L658.4 461.9L659.9 461.7L660 462.9L658.4 463.4L656.7 463.9L655.1 464.4L652.9 465.5L650.8 466.7L648.7 468.4L646.7 470.1L645.2 472.4L643.6 474.7L641.9 476.9L640.1 479L638.7 480.6L637.3 482.2L637.2 483L637 483.7L636.8 484.5L636.5 485.2L636.2 485.9L636.6 486.1L636.9 486.3L637.3 486.6L637.6 486.8L637.9 487L638.2 487.2L638.5 487.5L638.8 487.7L639.1 487.9L639.3 488.2L639.8 488.3L640.3 488.4L640.7 488.5L641.2 488.7L641.6 488.8L642.1 488.9L642.5 489.1L643 489.2L643.4 489.4L643.8 489.5L644.6 489.5L645.4 489.5L646.2 489.5L647 489.5L647.8 489.6L648.5 489.6L649.3 489.6L650.1 489.7L650.8 489.7L651.6 489.8L652.9 489.6L654.2 489.5L655.5 489.4L656.8 489.3L658 489.2L658.7 489.3L659.5 489.4L660.1 489.5L660.8 489.6L661.5 489.7L662.3 489.8L663 489.9L663.7 490L664.5 490.1L665.2 490.2L665.4 490.5L665.5 490.8L665.7 491.1L665.8 491.4L666 491.7L666.5 491.9L666.9 492.1L667.4 492.2L667.8 492.4L668.2 492.6L668.1 493L667.9 493.3L667.7 493.7L667.5 494.1L667.3 494.4L667.1 494.8L666.8 495.1L666.6 495.5L666.3 495.8L666 496.1L665.7 496.5L665.3 496.8L665 497.2L664.6 497.5L664.2 497.8L663.8 498.2L663.4 498.5L663 498.8L662.5 499.2L662.1 499.5L661.7 499.8L661.4 500.1L661 500.4L660.5 500.6L660.1 500.9L659.7 501.2L659.2 501.5L658.7 501.8L658.2 502.1L657.7 502.3L657.3 502.6L656.9 502.8L656.4 503.1L655.9 503.3L655.4 503.6L654.8 503.9L654.1 504.1L653.4 504.4L652.7 504.6L652 504.9L651.7 505.1L651.3 505.2L651 505.4L650.5 505.6L650.1 505.8L649.3 506L648.6 506.2L647.8 506.4L647 506.6L646.2 506.8L645.3 507L644.3 507.2L643.4 507.4L642.4 507.6L641.5 507.8L640.3 508L639.2 508.2L638 508.4L636.9 508.6L635.7 508.7L634.6 508.9L633.5 509L632.4 509.2L631.3 509.3L630.2 509.5L628.9 509.6L627.6 509.7L626.4 509.8L625.2 509.9L624 510L623.1 510L622.3 510.1L621.4 510.1L620.5 510.2L619.6 510.3L618.6 510.3L617.7 510.4L616.8 510.4L615.8 510.4L614.8 510.5L613.7 510.5L612.6 510.5L611.5 510.5L610.4 510.5L609.2 510.5L608 510.5L606.9 510.4L605.7 510.4L604.6 510.4L603.4 510.3L602.2 510.2L601.1 510.2L599.9 510.1L598.8 510L597.6 509.9L596.5 509.8L595.3 509.7L594.2 509.6L593 509.5L591.8 509.3L590.7 509.2L589.5 509.1L588.4 508.9L587.2 508.7L586 508.6L584.9 508.4L583.8 508.2L582.8 508L581.8 507.8L580.8 507.7L579.8 507.5L578.9 507.3L578.1 507.1L577.3 506.9L576.5 506.8L575.7 506.6L574.7 506.3L573.7 506.1L572.7 505.8L571.7 505.6L570.7 505.3L569.8 505L568.8 504.8L567.9 504.5L567 504.2L566.1 503.9L565.2 503.6L564.2 503.3L563.3 503L562.4 502.6L561.5 502.3L560.6 502L559.8 501.6L559.1 501.3L558.3 500.9L557.5 500.6L557.1 500.3L556.7 500L556.3 499.8L555.9 499.5L555.5 499.2L555.3 498.9L555 498.6L554.8 498.4L554.6 498.1L554.4 497.8L554.4 497.6L554.4 497.3L554.4 497.1L554.5 496.8L554.6 496.6L554.5 496.3L554.5 496.1L554.5 495.8L554.6 495.5L554.6 495.3L554.7 495L554.9 494.8L555.1 494.5L555.3 494.3L555.5 494.1L555.7 493.8L555.9 493.6L556.2 493.4L556.5 493.1L556.8 492.9L557.1 492.7L557.4 492.4L557.7 492.2L558 492L558.4 491.8L561.9 492.8L565.4 493.7L566.5 494.3L567.7 494.8L568.9 495.3L570.1 495.8L571.3 496.3L574.1 496.8L576.9 497.3L576.9 497.1L576.8 496.8L576.8 496.6L576.7 496.4L576.7 496.2L576.5 495.9L576.4 495.7L576.3 495.4L576.1 495.2L576 494.9L575.9 494.7L575.8 494.4L575.7 494.2L575.7 493.9L575.6 493.6Z" fill="none" stroke="#c8dcef" stroke-width="6" opacity="0.7" filter="url(#blur1)"/>
<path d="M575.6 493.6L575.8 493.4L576.1 493.3L576.3 493.1L576.6 492.9L576.9 492.7L577.2 492.5L577.4 492.4L577.7 492.2L578.1 492L578.4 491.9L578.4 491.6L578.5 491.4L578.6 491.1L578.7 490.8L578.8 490.6L578.9 490.3L579 490.1L579.2 489.8L579.3 489.6L579.5 489.3L579.5 489L579.6 488.7L579.7 488.4L579.8 488.1L579.9 487.7L579.8 487.3L579.7 486.9L579.6 486.4L579.6 486L579.6 485.5L579.8 485.2L580 484.8L580.3 484.5L580.5 484.2L580.8 483.8L581.1 483.5L581.4 483.2L581.8 482.9L582.1 482.5L582.5 482.2L582.9 481.9L583.3 481.5L583.7 481.2L584.1 480.9L584.6 480.6L585.1 480.3L585.7 480.1L586.3 479.9L586.9 479.7L587.5 479.4L588 479.1L588.6 478.8L589.1 478.5L589.7 478.2L590.3 477.9L590.9 477.7L591.6 477.4L592.3 477.2L593 477L593.7 476.8L594.6 476.8L595.4 476.9L596.3 477L597.1 477.1L598 477.1L598.9 477.2L599.7 477.3L600.5 477.4L601.4 477.5L602.2 477.7L603 477.7L603.8 477.8L604.6 477.8L605.4 477.9L606.1 477.9L606.8 477.5L607.5 477L608.3 476.5L609 476L609.8 475.5L610.7 475.3L611.5 475L612.4 474.8L613.2 474.5L614.1 474.3L615 474.3L615.8 474.3L616.7 474.4L617.5 474.4L618.4 474.4L619.2 474.6L620 474.8L620.8 475L621.6 475.2L622.4 475.4L623.2 475.5L624 475.6L624.8 475.7L625.7 475.8L626.5 475.8L627.5 475.5L628.5 475.2L629.6 474.9L630.6 474.6L631.7 474.3L633.1 473.5L634.5 472.8L636 472L637.4 471.5L638.7 471L640.1 470.5L641.5 470L644.5 467.4L646.5 466.2L648.6 465L650.3 464.3L652.1 463.6L653.9 462.9L655.4 462.5L656.9 462.2L658.4 461.9L659.9 461.7L660 462.9L658.4 463.4L656.7 463.9L655.1 464.4L652.9 465.5L650.8 466.7L648.7 468.4L646.7 470.1L645.2 472.4L643.6 474.7L641.9 476.9L640.1 479L638.7 480.6L637.3 482.2L637.2 483L637 483.7L636.8 484.5L636.5 485.2L636.2 485.9L636.6 486.1L636.9 486.3L637.3 486.6L637.6 486.8L637.9 487L638.2 487.2L638.5 487.5L638.8 487.7L639.1 487.9L639.3 488.2L639.8 488.3L640.3 488.4L640.7 488.5L641.2 488.7L641.6 488.8L642.1 488.9L642.5 489.1L643 489.2L643.4 489.4L643.8 489.5L644.6 489.5L645.4 489.5L646.2 489.5L647 489.5L647.8 489.6L648.5 489.6L649.3 489.6L650.1 489.7L650.8 489.7L651.6 489.8L652.9 489.6L654.2 489.5L655.5 489.4L656.8 489.3L658 489.2L658.7 489.3L659.5 489.4L660.1 489.5L660.8 489.6L661.5 489.7L662.3 489.8L663 489.9L663.7 490L664.5 490.1L665.2 490.2L665.4 490.5L665.5 490.8L665.7 491.1L665.8 491.4L666 491.7L666.5 491.9L666.9 492.1L667.4 492.2L667.8 492.4L668.2 492.6L668.1 493L667.9 493.3L667.7 493.7L667.5 494.1L667.3 494.4L667.1 494.8L666.8 495.1L666.6 495.5L666.3 495.8L666 496.1L665.7 496.5L665.3 496.8L665 497.2L664.6 497.5L664.2 497.8L663.8 498.2L663.4 498.5L663 498.8L662.5 499.2L662.1 499.5L661.7 499.8L661.4 500.1L661 500.4L660.5 500.6L660.1 500.9L659.7 501.2L659.2 501.5L658.7 501.8L658.2 502.1L657.7 502.3L657.3 502.6L656.9 502.8L656.4 503.1L655.9 503.3L655.4 503.6L654.8 503.9L654.1 504.1L653.4 504.4L652.7 504.6L652 504.9L651.7 505.1L651.3 505.2L651 505.4L650.5 505.6L650.1 505.8L649.3 506L648.6 506.2L647.8 506.4L647 506.6L646.2 506.8L645.3 507L644.3 507.2L643.4 507.4L642.4 507.6L641.5 507.8L640.3 508L639.2 508.2L638 508.4L636.9 508.6L635.7 508.7L634.6 508.9L633.5 509L632.4 509.2L631.3 509.3L630.2 509.5L628.9 509.6L627.6 509.7L626.4 509.8L625.2 509.9L624 510L623.1 510L622.3 510.1L621.4 510.1L620.5 510.2L619.6 510.3L618.6 510.3L617.7 510.4L616.8 510.4L615.8 510.4L614.8 510.5L613.7 510.5L612.6 510.5L611.5 510.5L610.4 510.5L609.2 510.5L608 510.5L606.9 510.4L605.7 510.4L604.6 510.4L603.4 510.3L602.2 510.2L601.1 510.2L599.9 510.1L598.8 510L597.6 509.9L596.5 509.8L595.3 509.7L594.2 509.6L593 509.5L591.8 509.3L590.7 509.2L589.5 509.1L588.4 508.9L587.2 508.7L586 508.6L584.9 508.4L583.8 508.2L582.8 508L581.8 507.8L580.8 507.7L579.8 507.5L578.9 507.3L578.1 507.1L577.3 506.9L576.5 506.8L575.7 506.6L574.7 506.3L573.7 506.1L572.7 505.8L571.7 505.6L570.7 505.3L569.8 505L568.8 504.8L567.9 504.5L567 504.2L566.1 503.9L565.2 503.6L564.2 503.3L563.3 503L562.4 502.6L561.5 502.3L560.6 502L559.8 501.6L559.1 501.3L558.3 500.9L557.5 500.6L557.1 500.3L556.7 500L556.3 499.8L555.9 499.5L555.5 499.2L555.3 498.9L555 498.6L554.8 498.4L554.6 498.1L554.4 497.8L554.4 497.6L554.4 497.3L554.4 497.1L554.5 496.8L554.6 496.6L554.5 496.3L554.5 496.1L554.5 495.8L554.6 495.5L554.6 495.3L554.7 495L554.9 494.8L555.1 494.5L555.3 494.3L555.5 494.1L555.7 493.8L555.9 493.6L556.2 493.4L556.5 493.1L556.8 492.9L557.1 492.7L557.4 492.4L557.7 492.2L558 492L558.4 491.8L561.9 492.8L565.4 493.7L566.5 494.3L567.7 494.8L568.9 495.3L570.1 495.8L571.3 496.3L574.1 496.8L576.9 497.3L576.9 497.1L576.8 496.8L576.8 496.6L576.7 496.4L576.7 496.2L576.5 495.9L576.4 495.7L576.3 495.4L576.1 495.2L576 494.9L575.9 494.7L575.8 494.4L575.7 494.2L575.7 493.9L575.6 493.6Z" fill="#f2f4f6"/>
<path d="M575.6 493.6L575.8 493.4L576.1 493.3L576.3 493.1L576.6 492.9L576.9 492.7L577.2 492.5L577.4 492.4L577.7 492.2L578.1 492L578.4 491.9L578.4 491.6L578.5 491.4L578.6 491.1L578.7 490.8L578.8 490.6L578.9 490.3L579 490.1L579.2 489.8L579.3 489.6L579.5 489.3L579.5 489L579.6 488.7L579.7 488.4L579.8 488.1L579.9 487.7L579.8 487.3L579.7 486.9L579.6 486.4L579.6 486L579.6 485.5L579.8 485.2L580 484.8L580.3 484.5L580.5 484.2L580.8 483.8L581.1 483.5L581.4 483.2L581.8 482.9L582.1 482.5L582.5 482.2L582.9 481.9L583.3 481.5L583.7 481.2L584.1 480.9L584.6 480.6L585.1 480.3L585.7 480.1L586.3 479.9L586.9 479.7L587.5 479.4L588 479.1L588.6 478.8L589.1 478.5L589.7 478.2L590.3 477.9L590.9 477.7L591.6 477.4L592.3 477.2L593 477L593.7 476.8L594.6 476.8L595.4 476.9L596.3 477L597.1 477.1L598 477.1L598.9 477.2L599.7 477.3L600.5 477.4L601.4 477.5L602.2 477.7L603 477.7L603.8 477.8L604.6 477.8L605.4 477.9L606.1 477.9L606.8 477.5L607.5 477L608.3 476.5L609 476L609.8 475.5L610.7 475.3L611.5 475L612.4 474.8L613.2 474.5L614.1 474.3L615 474.3L615.8 474.3L616.7 474.4L617.5 474.4L618.4 474.4L619.2 474.6L620 474.8L620.8 475L621.6 475.2L622.4 475.4L623.2 475.5L624 475.6L624.8 475.7L625.7 475.8L626.5 475.8L627.5 475.5L628.5 475.2L629.6 474.9L630.6 474.6L631.7 474.3L633.1 473.5L634.5 472.8L636 472L637.4 471.5L638.7 471L640.1 470.5L641.5 470L644.5 467.4L646.5 466.2L648.6 465L650.3 464.3L652.1 463.6L653.9 462.9L655.4 462.5L656.9 462.2L658.4 461.9L659.9 461.7L660 462.9L658.4 463.4L656.7 463.9L655.1 464.4L652.9 465.5L650.8 466.7L648.7 468.4L646.7 470.1L645.2 472.4L643.6 474.7L641.9 476.9L640.1 479L638.7 480.6L637.3 482.2L637.2 483L637 483.7L636.8 484.5L636.5 485.2L636.2 485.9L636.6 486.1L636.9 486.3L637.3 486.6L637.6 486.8L637.9 487L638.2 487.2L638.5 487.5L638.8 487.7L639.1 487.9L639.3 488.2L639.8 488.3L640.3 488.4L640.7 488.5L641.2 488.7L641.6 488.8L642.1 488.9L642.5 489.1L643 489.2L643.4 489.4L643.8 489.5L644.6 489.5L645.4 489.5L646.2 489.5L647 489.5L647.8 489.6L648.5 489.6L649.3 489.6L650.1 489.7L650.8 489.7L651.6 489.8L652.9 489.6L654.2 489.5L655.5 489.4L656.8 489.3L658 489.2L658.7 489.3L659.5 489.4L660.1 489.5L660.8 489.6L661.5 489.7L662.3 489.8L663 489.9L663.7 490L664.5 490.1L665.2 490.2L665.4 490.5L665.5 490.8L665.7 491.1L665.8 491.4L666 491.7L666.5 491.9L666.9 492.1L667.4 492.2L667.8 492.4L668.2 492.6L668.1 493L667.9 493.3L667.7 493.7L667.5 494.1L667.3 494.4L667.1 494.8L666.8 495.1L666.6 495.5L666.3 495.8L666 496.1L665.7 496.5L665.3 496.8L665 497.2L664.6 497.5L664.2 497.8L663.8 498.2L663.4 498.5L663 498.8L662.5 499.2L662.1 499.5L661.7 499.8L661.4 500.1L661 500.4L660.5 500.6L660.1 500.9L659.7 501.2L659.2 501.5L658.7 501.8L658.2 502.1L657.7 502.3L657.3 502.6L656.9 502.8L656.4 503.1L655.9 503.3L655.4 503.6L654.8 503.9L654.1 504.1L653.4 504.4L652.7 504.6L652 504.9L651.7 505.1L651.3 505.2L651 505.4L650.5 505.6L650.1 505.8L649.3 506L648.6 506.2L647.8 506.4L647 506.6L646.2 506.8L645.3 507L644.3 507.2L643.4 507.4L642.4 507.6L641.5 507.8L640.3 508L639.2 508.2L638 508.4L636.9 508.6L635.7 508.7L634.6 508.9L633.5 509L632.4 509.2L631.3 509.3L630.2 509.5L628.9 509.6L627.6 509.7L626.4 509.8L625.2 509.9L624 510L623.1 510L622.3 510.1L621.4 510.1L620.5 510.2L619.6 510.3L618.6 510.3L617.7 510.4L616.8 510.4L615.8 510.4L614.8 510.5L613.7 510.5L612.6 510.5L611.5 510.5L610.4 510.5L609.2 510.5L608 510.5L606.9 510.4L605.7 510.4L604.6 510.4L603.4 510.3L602.2 510.2L601.1 510.2L599.9 510.1L598.8 510L597.6 509.9L596.5 509.8L595.3 509.7L594.2 509.6L593 509.5L591.8 509.3L590.7 509.2L589.5 509.1L588.4 508.9L587.2 508.7L586 508.6L584.9 508.4L583.8 508.2L582.8 508L581.8 507.8L580.8 507.7L579.8 507.5L578.9 507.3L578.1 507.1L577.3 506.9L576.5 506.8L575.7 506.6L574.7 506.3L573.7 506.1L572.7 505.8L571.7 505.6L570.7 505.3L569.8 505L568.8 504.8L567.9 504.5L567 504.2L566.1 503.9L565.2 503.6L564.2 503.3L563.3 503L562.4 502.6L561.5 502.3L560.6 502L559.8 501.6L559.1 501.3L558.3 500.9L557.5 500.6L557.1 500.3L556.7 500L556.3 499.8L555.9 499.5L555.5 499.2L555.3 498.9L555 498.6L554.8 498.4L554.6 498.1L554.4 497.8L554.4 497.6L554.4 497.3L554.4 497.1L554.5 496.8L554.6 496.6L554.5 496.3L554.5 496.1L554.5 495.8L554.6 495.5L554.6 495.3L554.7 495L554.9 494.8L555.1 494.5L555.3 494.3L555.5 494.1L555.7 493.8L555.9 493.6L556.2 493.4L556.5 493.1L556.8 492.9L557.1 492.7L557.4 492.4L557.7 492.2L558 492L558.4 491.8L561.9 492.8L565.4 493.7L566.5 494.3L567.7 494.8L568.9 495.3L570.1 495.8L571.3 496.3L574.1 496.8L576.9 497.3L576.9 497.1L576.8 496.8L576.8 496.6L576.7 496.4L576.7 496.2L576.5 495.9L576.4 495.7L576.3 495.4L576.1 495.2L576 494.9L575.9 494.7L575.8 494.4L575.7 494.2L575.7 493.9L575.6 493.6Z" fill="none" stroke="#7aa060" stroke-width="1" stroke-dasharray="1.5 2" opacity="0.7"/>
<path d="M670.4 265.2L666.8 264L664.1 263.9L661.5 265.9L658 263.4L652.7 262.1L648.6 258.3L646.5 255.1L641.3 250.1L638.4 249.2L635.6 248.3L630.2 247.1L625.6 243.8L620.8 241.4L615.7 242.4L612.9 241.7L610.1 241L606.6 239.9L603.1 238.8L599.7 237.7L596.3 236.7L591.5 233.1L591.2 229.9L588.7 226.4L586.7 224.5L584.7 222.6L581.9 220.2L579.2 217.7L576.7 215.3L574.6 213.6L572.4 212.5L570.4 211.4L571.4 213.3L572.5 215.3L573.8 217L575.1 218.8L576.3 220.6L577.5 222.5L579.2 225L580.8 226.9L578.7 227.5L575.1 224.7L574.3 221.8L572.2 220L570.2 218.3L567.7 215.6L565.7 212.5L565.1 210L562.9 208.6L560.7 208.5L558.5 208.3L557.7 206.8L557 205.4L556.6 203.7L556 202.4L555.5 201.1L555.9 198.9L557 196.8L558.2 195.4L559.3 194.1L560.5 192.8L561 191.5L561.5 190.3L561.8 188.8L560.7 188.6L559.6 188.5L559.7 187.3L559.8 186.7L560 186L559.5 185.6L559.1 185.2L558.8 185L558.5 184.9L558.2 184.7L557.5 184.8L556.9 185L556.3 185.1L555.3 185.3L554.4 185.6L553.4 185.9L552.5 186.2L551.6 186.6L551 186.8L550.3 187.1L549.7 187.3L548.8 187.7L547.9 188L547 188.4L543.1 190.1L540.7 191.2L538.3 192.3L536.4 193.3L534.5 194.2L532.6 195.2L530.8 196.2L529 197.2L527.2 198.3L526.1 198.9L524.9 199.6L523.8 200.3L525.9 199L528 197.8L530.1 196.6L533 195L536 193.5L535.3 193.8L534.7 194.2L534.1 194.5L533.5 194.8L534 194.5L534.6 194.2L535.2 193.9L537.2 192.9L539.2 191.9L541.4 190.9L543.1 190.1L544.8 189.3L546.6 188.6L546.2 188.7L546 188.9L545.7 189L545.4 189.1L545.2 189.2L545.2 189.2L546.6 188.6L548 188L549.5 187.4L550.9 186.8L552.4 186.3L554 185.7L555.4 185.2L556.7 184.7L558.1 184.2L559.4 183.8L560.5 183.4L561.6 183.1L562.7 182.8L563.8 182.4L564.9 182.1L565.1 182L565.4 182L565.7 181.9L566 181.8L566.3 181.7L566.8 181.6L567.2 181.5L567.7 181.3L568.2 181.2L568.7 181L569.3 180.9L569.9 180.8L570.4 180.6L571 180.5L571.7 180.3L572.2 180.2L572.7 180.1L573.3 179.9L573.8 179.8L574.4 179.7L575.6 179.4L576.7 179.2L577.8 178.9L578.9 178.7L580 178.5L581.1 178.3L581.8 178.2L582.5 178L583.3 177.9L584.1 177.8L584.8 177.6L585.6 177.5L586.4 177.4L587.2 177.3L588 177.2L588.8 177L589.6 176.9L590.5 176.8L591.5 176.7L592.4 176.6L593.4 176.5L594.4 176.4L595.4 176.3L596.4 176.2L597.4 176.1L598.5 176L599.5 175.9L600.6 175.9L601.7 175.8L602.8 175.7L603.9 175.7L604.9 175.6L606 175.6L607.1 175.6L608.2 175.5L609.3 175.5L610.4 175.5L611.5 175.5L612.6 175.5L613.7 175.5L614.7 175.5L615.7 175.6L616.8 175.6L617.9 175.6L619.1 175.7L620.2 175.7L621.4 175.8L622.5 175.9L623.7 176L624.8 176L626 176.1L627.2 176.3L628.4 176.4L629.5 176.5L628.8 176.5L628 176.4L627.1 176.4L626.2 176.4L625.3 176.5L624.3 176.5L623 176.5L621.8 176.6L620.4 176.7L619 176.8L618.3 177.2L617.6 177.6L616.8 178L618.5 178.6L620.2 179.2L622.1 179.4L624 179.7L625.9 179.9L627.8 180.2L629.5 180.5L631.2 180.8L633 181.1L635.9 182.1L638.9 183.2L641.7 184.1L644.6 185L644.4 184.2L644.3 183.4L644.7 182.6L645.1 181.9L643.6 181L642.1 180.2L640.7 179.5L639.3 178.8L638.6 178.3L639.9 178.5L641.2 178.7L642.6 178.9L643.9 179.2L645.8 179.6L647.7 180L649.6 180.5L652.1 181.3L654.6 182.3L655.5 182.3L656.3 182.3L657.1 182.4L660.4 183.6L663.8 184.9L667.2 186.3L669.5 187.1L671.7 188L674 188.9L676.9 190.3L679.7 191.7L679.2 192L678.5 192.2L677.5 192.5L675.9 192.1L674.3 191.7L672.6 191.3L670.9 190.9L669.3 190.7L667.5 190.5L666.2 191.1L668.1 191.5L670 191.9L671.9 192.4L674.6 194.3L676 195.2L678.1 196.1L680.3 197L682.4 198L681.1 198.1L679.7 198.2L678.3 198.3L676.8 198.4L672.7 196.1L671.3 196.2L669.8 196.3L668.4 196.4L668.8 198.5L670.1 199L667.6 199.2L665.5 199.3L663.2 199.4L663.7 200.9L662.5 201.7L661.6 204.2L663.7 206.8L662 207.9L660 208.3L658 208.7L655.2 210.5L653 212.9L653.4 215.6L656 218.7L657.8 221.8L657.3 224.3L655.3 224L653.6 221.3L650.5 218.1L649.7 215.2L646.6 214L643 214.1L640.4 213.4L637.9 212.8L635.4 212.7L632.9 212.7L633.7 214.9L629.3 214.1L626.1 213.6L622.9 213.2L619.2 214L614.6 216.2L613.1 219.1L612.8 221.1L612.6 223.1L612.4 225.2L612.3 227.3L613.7 230.5L617 233.8L621.2 236.8L624.7 236.4L628.1 236.1L631.3 234.7L632.5 231L637.2 230.2L641.2 230.4L640.8 232.6L640.3 234.7L639.1 236.9L639 239.9L638.9 243L642 243.1L645 243.2L647.8 243.9L650.5 244.6L652.6 246.5L652.5 249.2L652.4 251.9L652.1 255.6L656.5 260.5L661.2 261.3L665.3 260.7L669.5 263.3L670.4 265.2Z" fill="#cdbf7c"/>
<g clip-path="url(#naclip)"><g filter="url(#blur3)">
<path d="M619.1 212.5L621.7 213.2L624.2 213.9L626.8 214.6L629.4 215.3L632 216.1L634.6 216.9L637.3 217.7L639.9 218.5L642.5 219.3L645.2 220.2L647.8 221.1L650.5 222L653.1 222.9L655.8 223.8L658.4 224.8L659.7 223L660.9 221.2L662.1 219.4L663.2 217.7L664.3 216.1L665.3 214.4L666.2 212.8L667.1 211.3L668 209.8L668.8 208.3L669.5 206.9L670.1 205.5L670.7 204.2L671.3 202.9L671.7 201.6L669.9 200L668 198.4L666.2 196.9L664.3 195.4L662.5 193.9L660.7 192.5L658.9 191.2L657.1 189.9L655.3 188.7L653.6 187.5L651.8 187.3L650.1 187L648.3 186.8L646.6 186.6L644.8 186.3L643 186.1L641.2 185.9L639.4 185.8L637.5 185.6L635.7 185.4L633.9 185.3L632 185.2L630.2 185L628.3 184.9L626.5 184.8L624.6 184.7L622.8 184.6L620.9 184.6L619 184.5L617.1 184.5L616.9 185.5L616.7 186.5L616.5 187.5L616.2 188.6L616 189.8L615.7 191L615.4 192.2L615.1 193.5L614.8 194.8L614.5 196.2L614.2 197.7L613.8 199.1L614.4 200.7L615 202.2L615.7 203.8L616.3 205.5L617 207.2L617.7 208.9L618.4 210.7L619.1 212.5Z" fill="#8fb85a"/>
<path d="M628 233L630.1 235.3L632.3 237.6L634.5 240L636.7 242.4L638.9 244.9L641.1 247.4L643.3 250L645.6 252.6L647.8 255.2L650 257.9L652.2 260.6L654.4 263.3L657.2 263.1L659.9 262.9L662.7 262.7L665.4 262.5L668.1 262.4L665.6 259.5L663.1 256.7L660.6 254L658 251.3L655.5 248.6L653 246L650.5 243.5L648.4 241L646.4 238.5L644.4 236.1L642.4 233.8L640.4 231.5L638.5 229.2L635.9 230.1L633.3 231L630.6 232L628 233Z" fill="#78b04a"/>
<path d="M565.9 189.9L566.1 190.9L566.4 191.9L566.7 192.9L567.1 194L567.6 195.1L568.1 196.3L568.7 197.5L569.3 198.8L570 200.1L570.7 201.5L571.9 202.8L573.2 204.2L574.6 205.6L576 207.1L577.5 208.7L579.1 210.2L580.7 211.9L582.3 213.5L584 215.3L585.8 217L587.6 218.8L589.5 220.7L591.4 222.6L593.4 224.5L595.4 226.5L597.4 228.6L599.5 230.7L601.6 232.8L603.8 235L605.9 237.2L608 234.9L610.1 232.7L612.2 230.5L614.2 228.3L612.6 226.2L611.1 224.1L609.5 222.1L608 220.1L606.5 218.2L605 216.3L603.6 214.4L602.2 212.6L600.9 210.8L599.5 209.1L598.2 207.4L597 205.7L595.6 204.1L594.2 202.6L592.9 201.1L591.6 199.7L590.4 198.3L589.2 196.9L588.1 195.6L587 194.4L586 193.2L585.1 192L584.2 190.9L583.4 189.8L581.5 189.8L579.7 189.8L577.9 189.7L576.1 189.7L574.3 189.7L572.6 189.7L570.9 189.8L569.2 189.8L567.5 189.9L565.9 189.9Z" fill="#d6b474"/>
</g></g>
<path d="M669.5 263.3L672.2 264.2L673.4 261.8L674.5 259.5L677.8 258.3L682.6 257.6L685 256.6L688.6 259.5L692.5 262.2L695.7 263L698.7 263.8L701.2 264.5L703.6 265.2L705.9 265.6L708.3 266.1L710.9 269.5L713.5 272.7L715.9 275.3L718.4 277.9L720.8 281.2L723.5 282.2L726.2 283.2L728.9 285.6L731.6 288L733.8 292.2L735.9 297.6L736.5 300.9L736.9 304.2L739.8 306.8L741.7 307.6L743.5 308.4L746 313.8L748.1 315.3L750.2 316.8L752.2 318.2L754.1 319.6L755.5 322.8L756.8 326.1L758.1 327.8L759.4 329.6L759.5 332.9L759.6 336.2L758.6 340.1L757 342L755.3 344L753.7 346.1L752.1 348.2L751 351.4L749.9 354.7L748.8 357.7L747.8 360.8L746.4 363.5L745 366.2L743.4 368.6L741.7 370.9L739.4 372.6L737.3 372.1L735.2 371.7L733.2 371.9L731.3 372.1L727.3 375.1L725.6 378.3L723.8 381.5L720.2 384.8L716.2 387.9L713.9 390.2L711.7 392.4L708.6 395L705.2 396L703.6 394.6L701.9 393.1L700.2 391.7L700.4 396.3L699.3 400.5L696 403.4L693.7 403.4L691.3 403.4L688.9 403.4L686.9 404.4L685.9 407.9L683.6 407.6L681.3 407.3L679.1 410.3L679.9 412.2L676 416.1L672.6 417.3L670 420.4L671.2 424.8L668.7 426.2L666.2 427.7L664 430L661.7 433L662 434.9L659.8 438.3L660.8 439.8L661.7 441.3L659.7 441.3L657.7 441.2L656.3 439.9L654.9 438.7L654 435.9L653 433.2L653.3 430L653.6 426.8L654.2 423.6L654.8 420.3L657.9 416.7L659.2 414.2L660.5 411.7L661.8 409.1L663.1 406.5L663.6 403.8L664.1 401.1L665.5 397.7L666.8 394.4L668.7 391.1L670.6 387.8L672.2 385.2L673.7 382.5L674.6 379.7L675.4 376.9L676.2 374.1L677 371.3L677.8 368.5L678.6 365.7L680.1 363L681.6 360.3L682.3 357.5L683 354.6L683.7 351.8L684.3 348.4L684.8 345.1L685.3 341.7L682.8 338.3L680.5 335.9L678.2 333.6L675.9 331.2L673.5 328.8L671.7 324.7L670.4 321.6L669 318.5L668 315.5L667 312.5L666 309.5L663.4 304.9L659.6 301.7L660.3 297.5L662.6 295L663.2 291.4L661 287.9L663.3 283.2L666.6 281.7L668.3 279.3L670.1 276.8L670.3 274.2L670.4 271.6L669.7 267.7L670.4 265.2L669.5 263.3Z" fill="#bcc276"/>
<g clip-path="url(#saclip)"><g filter="url(#blur3)">
<path d="M676.7 273.8L679.4 274.6L682 275.3L684.7 276.1L687.3 276.9L689.9 277.7L692.5 278.5L695 279.4L697.6 280.2L700.1 281.1L702.5 282L705 282.9L707.4 283.8L709.8 284.7L712.1 285.7L714.5 286.6L716.8 287.6L719 288.6L721.3 289.6L723.5 290.6L725.6 291.7L727.7 292.7L729.8 293.8L731.9 294.9L733.9 295.9L735.9 297L737.9 300.2L739.8 303.4L741.7 306.6L743.4 309.8L745.2 313L746.8 316.3L748.4 319.6L749.8 322.9L748.6 325.1L747.4 327.4L746 329.6L744.7 331.9L743.2 334.2L741.8 336.5L740.3 338.8L738.7 341.1L737.1 343.5L735.4 345.8L733.6 345L731.7 344.3L729.8 343.5L727.9 342.8L725.9 342L723.9 341.3L721.8 340.6L719.8 339.9L717.6 339.3L715.5 338.6L713.3 337.9L711.1 337.3L708.9 336.7L706.6 336.1L704.5 334.1L702.4 332.1L700.2 330.1L698 328.1L695.7 326.1L693.4 324.2L691.1 322.2L688.7 320.3L686.3 318.4L683.8 316.5L683.5 313.6L683.2 310.6L682.8 307.7L682.4 304.8L682 301.9L681.6 299L681.1 296.2L680.7 293.3L680.2 290.5L679.6 287.7L679.1 284.9L678.5 282.1L677.9 279.3L677.3 276.6L676.7 273.8Z" fill="#80b24e"/>
<path d="M663.2 290.9L665.3 293.9L667.3 296.9L669.3 300L671.2 303.1L673.1 306.2L675 309.3L676.8 312.5L678.6 315.6L679.7 318.7L680.7 321.8L681.8 324.9L682.7 328L683.7 331.1L684.6 334.2L685.5 337.3L686.3 340.4L687.1 343.5L687.8 346.6L687.6 349.6L687.3 352.5L687 355.4L686.6 358.3L686.3 361.2L685.9 364.1L685.4 367L685 369.9L684.5 372.8L684 375.7L683 378.4L682 381.1L680.9 383.9L679.8 386.6L678.7 389.3L677.6 392L676.5 394.7L675.4 397.4L674.2 400L673.1 402.7L671.9 405.3L670.7 407.9L669.5 410.5L668.3 413.1L667.1 415.6L664.3 417.8L661.6 420.1L658.9 422.3L659.3 419.7L659.8 417L660.1 414.4L660.5 411.7L660.8 409L661.1 406.2L661.4 403.5L661.6 400.7L662.8 398L663.9 395.3L665.1 392.7L666.2 390L667.3 387.2L668.4 384.5L669.5 381.8L670.6 379L671.7 376.3L672.8 373.5L673.9 370.8L674.9 368L676 365.2L677 362.4L678 359.7L677.6 356.6L677.1 353.6L676.6 350.5L676.1 347.5L675.5 344.4L674.9 341.4L674.3 338.3L673.6 335.3L672.9 332.2L672.1 329.2L671.1 326.1L670 323L668.9 320L667.7 316.9L666.6 313.9L665.4 310.9L664.1 307.9L662.9 304.9L661.6 301.9L660.3 298.9L661.3 296.2L662.3 293.5L663.2 290.9Z" fill="#c89a62"/>
<path d="M691.2 395.1L688.7 396L686.3 396.9L683.9 397.8L681.4 398.7L679 399.6L676.6 400.5L674.2 401.5L671.7 402.4L670.5 405L669.3 407.6L668.1 410.2L666.8 412.8L665.6 415.3L664.3 417.8L663.1 420.3L661.8 422.8L660.5 425.3L659.3 427.7L658 430.1L656.7 432.5L658.3 432.8L659.9 433.1L661.5 433.4L663.1 433.8L664.6 434.1L666.1 434.4L668 432.2L669.8 429.9L671.7 427.6L673.5 425.3L675.4 423L677.2 420.6L679.1 418.3L681 415.9L682.8 413.5L684.7 411.1L685.8 408.5L686.9 405.8L688 403.2L689.1 400.5L690.1 397.8L691.2 395.1Z" fill="#c9b57a"/>
<path d="M715 368.8L717 369.5L718.8 370.2L720.7 370.9L722.5 371.6L724.3 372.3L726.1 373L727.8 373.7L726 376.1L724.1 378.5L722.3 380.9L720.4 383.3L718.4 385.6L716.5 388L714.5 390.4L712.6 392.8L711.1 391.6L709.5 390.4L708 389.3L706.3 388.1L704.7 387L706.2 384.4L707.8 381.8L709.3 379.3L710.7 376.7L712.2 374.1L713.6 371.5L715 368.8Z" fill="#8fb05a"/>
</g></g>
<path d="M646.7 230L651.4 228.1L654.6 228.3L657.8 228.6L660.5 229.8L663.3 231.1L666 232.3L668.6 233.4L671.3 234.6L674.9 236.8L672.2 236.7L669.4 236.6L666.7 236.5L663.7 233.7L661 232.7L658.3 231.7L655.6 230.7L652.6 230.6L649.7 230.5L646.7 230Z" fill="#8fb05a"/>
<path d="M674.9 241L678.6 238.3L681.1 239.2L683.7 240.1L686.2 241L689.9 243.3L687 243.7L683.9 244.1L681 243.1L678.1 242.2L675.2 241.3L674.9 241Z" fill="#8fb05a"/>
<path d="M665.1 239.8L667.9 240.4L670.6 241L668.9 241.5L665.1 239.8Z" fill="#8fb05a"/>
<path d="M633.6 214.5L631.3 212.8L629 211L628.6 209.2L628.1 207.5L629.1 205.9L630.1 204.3L630.7 202.7L631.3 201.2L629.9 199.7L628.5 198.3L627.6 197.1L626.6 195.8L626.6 194.5L626.6 193.2L624.7 191.8L623 190.5L621.2 189.3L619.5 188.1L617.4 187" fill="none" stroke="#6a86e0" stroke-width="1.1" stroke-linejoin="round"/>
<path d="M629.2 198.4L627.1 198.1L624.9 197.8L622.8 197.5L620.6 197.5L618.3 197.4L616.5 196.1L614.8 194.8L612.6 193.8L610.4 192.8L608.7 192L606.9 191.2L605.2 190.4L603.3 189.3L601.5 188.2L599.7 187.2L598.1 187.2L596.6 187.2L595 187.2L593.5 187.2L592 187.2L590.2 187.4L588.5 187.6L586.8 187.9L585.1 188.1" fill="none" stroke="#6a86e0" stroke-width="1.1" stroke-linejoin="round"/>
<path d="M632 201.2L633.7 200.9L635.5 200.7L637.2 200.4L638.9 200.2L641.9 198.9L643.7 199.1L645.6 199.3L647.4 199.5L649.2 198.6L650.9 197.8" fill="none" stroke="#6a86e0" stroke-width="1.1" stroke-linejoin="round"/>
<path d="M628.2 204.2L625.8 203.9L623.4 203.7L621 203.4L618.9 203.1L616.8 202.8L614.8 202.5L612.7 202.2L610.7 201.7L608.8 201.2L606.8 200.7L604.8 200.3L602.7 200L600.6 199.7L598.6 199.4L596.6 199.1L594.8 198.6L592.9 198.1" fill="none" stroke="#6a86e0" stroke-width="1.1" stroke-linejoin="round"/>
<path d="M613.6 220.3L610.6 218.7L607.6 217.2L605.1 215L602.6 212.9L598.7 214.5L595 213.7L592.7 211.7L590.5 209.8L590.5 207.9L590.5 206.1L590.5 204.4" fill="none" stroke="#6a86e0" stroke-width="1.1" stroke-linejoin="round"/>
<path d="M571.2 209.8L571.7 208.2L572.2 206.6L572.8 205L574.8 204.5L576.8 203.9L578.8 203.3L581.4 201.7L584.1 200.2L585.1 198.9L586.2 197.6L587.2 196.4" fill="none" stroke="#6a86e0" stroke-width="1.1" stroke-linejoin="round"/>
<path d="M560.7 192.6L562.3 192.5L564 192.5L565.7 192.4L567.8 191.8L570 191.1L571.2 191.9L572.6 192.7L574 192.9L575.4 193.1L576.8 193.3L578.3 193.5L579.8 193.7" fill="none" stroke="#6a86e0" stroke-width="1.1" stroke-linejoin="round"/>
<path d="M736 303.8L734.3 304.1L732.6 304.4L730.9 304.6L729.2 304.7L727.4 304.7L725.7 304.7L723.5 304.7L721.3 304.8L719 304.8L716.8 304.4L714.5 304.1L712.1 303.7L709.8 303.3L707.4 303L705 302.2L702.6 301.5L700.1 300.7L697.6 300.3L695.1 300L692.6 299.7L690.4 299.9L688.2 300.1L686 300.4L683.4 300.3L680.7 300.3L678.5 300.4L676.3 300.5L674 300.7L669.8 304.3" fill="none" stroke="#6a86e0" stroke-width="1.1" stroke-linejoin="round"/>
<path d="M716.7 304.7L714.8 306.3L712.7 307.9L710.7 309.5L709 311.4L707.2 313.4L705.4 315.3L704.1 317.4L702.6 319.4L701.2 321.5" fill="none" stroke="#6a86e0" stroke-width="1.1" stroke-linejoin="round"/>
<path d="M714.5 304.1L713 301.1L711.5 298.2L710 295.4L708.1 294.3L706.1 293.3L704.2 292.3L702.2 291.3L700.3 290.3L697.8 289L695.2 287.8" fill="none" stroke="#6a86e0" stroke-width="1.1" stroke-linejoin="round"/>
<path d="M731.9 305L731.6 307.2L731.1 309.4L730.7 311.5L729.8 314.1L728.9 316.6L728 319.2L727.1 321.7L726.1 324.3L725 326.8" fill="none" stroke="#6a86e0" stroke-width="1.1" stroke-linejoin="round"/>
<path d="M736.9 307L737.3 309.6L737.7 312.2L738.1 314.8L738.4 317.4L738.4 319.7L738.4 322L738.4 324.3L738.3 326.7L738.2 329L737.6 331.1L736.9 333.1L736.2 335.2L735.4 337.3L734.7 339.4" fill="none" stroke="#6a86e0" stroke-width="1.1" stroke-linejoin="round"/>
<path d="M700.2 391.7L700.1 388.6L699.9 385.6L701.2 382.9L702.5 380.2L703.7 377.5L705.6 375L707.4 372.6L710.1 371.1L712.7 369.6L716.8 366.4L719.1 364.6L721.4 362.8L723.6 361.1L726.6 357.6" fill="none" stroke="#6a86e0" stroke-width="1.1" stroke-linejoin="round"/>
<path d="M707.4 372.6L708.6 369.9L709.8 367.2L710.9 364.4L711.4 361.6L711.9 358.7L712.4 355.8L713.3 353L714.1 350.2L715 347.5" fill="none" stroke="#6a86e0" stroke-width="1.1" stroke-linejoin="round"/>
<path d="M756.2 343L755.3 340.9L754.3 338.8L753.3 336.6L751.9 337.3L750.4 337.9L748.8 338.6L747.3 340.8L745.7 343L744.1 345.3L743.1 347.3L742 349.4L740.9 351.4L739.7 353.9L738.4 356.5L737.1 359" fill="none" stroke="#6a86e0" stroke-width="1.1" stroke-linejoin="round"/>
<path d="M706.5 270.8L704.2 270.9L701.8 270.9L699.4 270.9L697.1 271.4L694.6 271.9L692.1 272L689.6 272.2L687.2 274.3L684.7 276.5" fill="none" stroke="#6a86e0" stroke-width="1.1" stroke-linejoin="round"/>
<path d="M565.3 210.8L568 210.5L570.7 210.2L572.8 210.5L574.9 210.8L577.1 211.1L579.3 211.4L581.6 211.3L583.9 211.1L586.2 210.9L588.3 210.4L590.5 209.8" fill="none" stroke="#e24a3a" stroke-width="1" stroke-dasharray="1.6 1.4"/>
<path d="M565.1 189.1L566.5 188.9L567.9 188.7L569.3 188.4L570.8 188.2L572.2 188L573.7 187.8L575.2 187.6L576.6 187.5L578.1 187.3L579.6 187.1L581.1 187L582.6 186.8L584.1 186.7L585.6 186.5L587.1 186.4L588.7 186.3L590.2 186.2L591.7 186L593.3 186L594.9 185.9L596.4 185.8L598 185.7L599.5 185.6L601.1 185.6L602.7 185.5L604.3 185.5L605.8 185.5L607.4 185.4L609 185.4L610.6 185.4L612.1 185.4L613.7 185.4L615.3 185.4L616.9 185.4" fill="none" stroke="#e24a3a" stroke-width="1" stroke-dasharray="1.6 1.4"/>
<path d="M572.6 210L573 208.4L573.4 206.9L573.8 205.4L574.2 203.9L574.6 202.5L575 201.2L575.5 200L575.9 198.7L576.3 197.5L576.7 196.4L577.2 195.2L575.1 195.5L573 195.7L571 195.9L568.9 196.2L566.9 196.5L564.9 196.8L563.2 197L561.5 197.3L559.8 197.6L558.2 197.8L556.5 198.1" fill="none" stroke="#e24a3a" stroke-width="1" stroke-dasharray="1.6 1.4"/>
<path d="M564.9 196.8L564.1 198.2L563.4 199.6L562.7 201.1L564.2 201.8L565.7 202.6L567.3 203.4L568.9 204.2L570.6 205L572.3 205.9" fill="none" stroke="#e24a3a" stroke-width="1" stroke-dasharray="1.6 1.4"/>
<path d="M575.7 187.6L575.1 188.5L574.5 189.4L573.9 190.4L573.3 191.5L572.7 192.5L572.1 193.6L571.5 194.8L571 195.9" fill="none" stroke="#e24a3a" stroke-width="1" stroke-dasharray="1.6 1.4"/>
<path d="M586.8 186.4L586.4 187.2L586 188.1L585.6 189L585.2 189.9L584.9 190.8L584.5 191.8L584.1 192.8L583.8 193.9L583.4 194.9L583.1 196L585.2 195.8L587.4 195.7L587.1 196.8L586.8 197.9L586.5 199.1L586.2 200.3L586 201.5L585.7 202.8L585.4 204.1L585.2 205.5L584.9 206.8L584.7 208.2L584.4 209.6L584.2 211.1" fill="none" stroke="#e24a3a" stroke-width="1" stroke-dasharray="1.6 1.4"/>
<path d="M574.6 202.5L576.5 202.3L578.4 202.1L580.3 202L582.2 201.8L584.1 201.7L586 201.5L587.9 201.4L589.9 201.3L591.9 201.2L593.9 201.1L595.9 201L597.8 200.9L599.8 200.8L601.8 200.8L603.8 200.7L605.7 200.7L607.7 200.7L609.6 200.6L611.6 200.6L613.6 200.6L615.5 200.7L617.5 200.7L619.4 200.7L621.4 200.9L623.4 201.1L625.4 201.3L627.4 201.5L629.4 201.7L631.4 202L633.4 202.1L635.4 202.2L637.4 202.3L639.4 202.4L641.4 202.5L643.4 202.7L645.3 202.9L647.3 203L649.2 203.2L651.1 203.4L653 203.7L654.9 203.9L656.8 204.2L658.7 204.5L660.5 204.7L662.4 205" fill="none" stroke="#e24a3a" stroke-width="1" stroke-dasharray="1.6 1.4"/>
<path d="M600 185.6L599.8 186.4L599.6 187.3L599.5 188.1L599.3 189L599.1 190L598.9 190.9L598.8 191.9L598.6 193L598.4 194L598.3 195.1L600.5 195L602.7 194.9L602.6 196.1L602.5 197.2L602.4 198.3L602.3 199.5L602.2 200.8L599.8 200.8L599.7 202.1L599.6 203.5L599.5 204.8L599.3 206.2L599.2 207.6L599.1 209.1L596.9 209.1L594.7 209.2L592.5 209.3L590.3 209.5" fill="none" stroke="#e24a3a" stroke-width="1" stroke-dasharray="1.6 1.4"/>
<path d="M599.1 190L600.9 189.8L602.6 189.6L604.3 189.5L606 189.3L607.7 189.2L609.5 189.1L611.2 188.9L612.9 188.8L614.6 188.7" fill="none" stroke="#e24a3a" stroke-width="1" stroke-dasharray="1.6 1.4"/>
<path d="M598.7 192.4L600.5 192.4L602.2 192.3L604 192.3L605.8 192.2L607.6 192.2L609.4 192.2L611.1 192.2L612.9 192.2L614.7 192.2" fill="none" stroke="#e24a3a" stroke-width="1" stroke-dasharray="1.6 1.4"/>
<path d="M602.5 196.3L604.4 196.3L606.3 196.3L608.2 196.2L610 196.2L611.9 196.2L613.8 196.2L615.7 196.2L617.5 196.3" fill="none" stroke="#e24a3a" stroke-width="1" stroke-dasharray="1.6 1.4"/>
<path d="M614.4 185.4L614.4 186.3L614.5 187.3L614.5 188.3L614.6 189.4L614.6 190.5L614.7 191.6L615.2 192.8L615.8 194.1L616.4 195.4L617.1 196.7L617.9 198L618.6 199.3L619.4 200.7L619.6 202.1L619.7 203.4L619.9 204.8L620 206.2L620.4 207.9L620.8 209.6L621.2 211.4L621.6 213.1" fill="none" stroke="#e24a3a" stroke-width="1" stroke-dasharray="1.6 1.4"/>
<path d="M599.8 201.6L602.1 201.5L604.5 201.5L606.8 201.4L606.7 203L606.7 204.7L608.9 204.9L611.1 205.1L613.3 205.4L615.5 205.6L617.8 205.9L620 206.2" fill="none" stroke="#e24a3a" stroke-width="1" stroke-dasharray="1.6 1.4"/>
<path d="M625.9 191.9L625.9 193.1L625.9 194.4L625.9 195.7L627 196.9L628 198.1L629.2 199.3L630.3 200.6L631.4 202L629.9 204.3L629 205.9L628.1 207.5L627.8 209.2L627.5 211L629.9 211.1L632.2 211.2" fill="none" stroke="#e24a3a" stroke-width="1" stroke-dasharray="1.6 1.4"/>
<path d="M635.1 204.5L635.1 205.9L635.2 207.2L635.2 208.6L635.2 209.9L635.2 211.4" fill="none" stroke="#e24a3a" stroke-width="1" stroke-dasharray="1.6 1.4"/>
<path d="M642.4 205.1L642.7 206.4L643 207.8L643.2 209.1L643.5 210.5L643.8 212L641.8 211.8L639.7 211.7L637.7 211.5" fill="none" stroke="#e24a3a" stroke-width="1" stroke-dasharray="1.6 1.4"/>
<path d="M634.3 194.5L634.6 195.8L634.9 197.1L635.2 198.5L635.6 199.9" fill="none" stroke="#e24a3a" stroke-width="1" stroke-dasharray="1.6 1.4"/>
<path d="M640.1 195.1L640.4 196.3L640.8 197.5L641.2 198.7" fill="none" stroke="#e24a3a" stroke-width="1" stroke-dasharray="1.6 1.4"/>
<path d="M648.9 195.6L649.6 197.2L650.3 198.8L652.3 199L654.3 199.3L656.3 199.5L658.2 199.8L660.2 200.1" fill="none" stroke="#e24a3a" stroke-width="1" stroke-dasharray="1.6 1.4"/>
<path d="M644 205.2L645.9 205.4L647.8 205.6L649.7 205.8L651.6 206L653.7 206.9L655.8 207.8L658 208.7" fill="none" stroke="#e24a3a" stroke-width="1" stroke-dasharray="1.6 1.4"/>
<path d="M630.6 204.3L632.5 204.4L634.4 204.5L636.4 204.6L638.3 204.8L640.2 204.9L642.1 205.1L644 205.2" fill="none" stroke="#e24a3a" stroke-width="1" stroke-dasharray="1.6 1.4"/>
<path d="M627.9 245.6L629.7 242.1L631 240.1L632.3 238.1L635.9 238.3L636 240.4L636.1 242.6" fill="none" stroke="#e24a3a" stroke-width="1" stroke-dasharray="1.6 1.4"/>
<path d="M635.8 246.2L638.2 247.6L640.6 249.1" fill="none" stroke="#e24a3a" stroke-width="1" stroke-dasharray="1.6 1.4"/>
<path d="M642.6 249.9L645.4 248.9L648.1 248L650.3 247.2L652.6 246.5" fill="none" stroke="#e24a3a" stroke-width="1" stroke-dasharray="1.6 1.4"/>
<path d="M646.5 254.6L649.3 255.1L652.1 255.6" fill="none" stroke="#e24a3a" stroke-width="1" stroke-dasharray="1.6 1.4"/>
<path d="M654.4 262.1L655.4 259.4" fill="none" stroke="#e24a3a" stroke-width="1" stroke-dasharray="1.6 1.4"/>
<path d="M682.6 257.6L682.6 260.5L682.6 263.3L683.2 265.5L683.8 267.7L684.4 269.9L687 270.7L689.6 271.4L691.7 272.3L693.9 273.3L696 274.2L695.9 276.6L695.8 278.9L695.6 281.2L696.7 284.1L697.7 287L698.3 287.9" fill="none" stroke="#e24a3a" stroke-width="1" stroke-dasharray="1.6 1.4"/>
<path d="M713.5 272.7L713 275.1L712.4 277.5L711.8 279.9L714.2 281.3L714.6 283.5L715 285.7L715.4 287.9L715.7 290.2L719.1 292.5" fill="none" stroke="#e24a3a" stroke-width="1" stroke-dasharray="1.6 1.4"/>
<path d="M720.8 281.2L719.9 283.5L718.9 285.8L720.1 288.8L721.3 291.9" fill="none" stroke="#e24a3a" stroke-width="1" stroke-dasharray="1.6 1.4"/>
<path d="M727.3 284.1L727.3 287L727.2 289.8L726.7 292.8" fill="none" stroke="#e24a3a" stroke-width="1" stroke-dasharray="1.6 1.4"/>
<path d="M732.5 289.9L731.7 292.1L730.9 294.3" fill="none" stroke="#e24a3a" stroke-width="1" stroke-dasharray="1.6 1.4"/>
<path d="M698.3 287.9L700.6 287.3L702.8 286.6L705.1 286L707 285.4L708.8 284.8L710.7 284.3L712.5 283.7L714.3 283.2L716 286.3L717.6 289.4L719.1 292.5L721.3 292.6L723.5 292.7L725.7 292.7L727.8 293.4L729.8 294L731.9 294.7L732.2 292.3L732.5 289.9" fill="none" stroke="#e24a3a" stroke-width="1" stroke-dasharray="1.6 1.4"/>
<path d="M666 281.7L668.8 283.4L671.5 285.1L674 286.3L676.4 287.4L679.3 291.2L682.2 295L684.8 297L687.4 299L689.9 301.1L690.1 298.9L690.2 296.7L690.3 294.5L690.4 292.3L690.9 289.7L691.4 287.1L693.5 287L695.6 287L697.7 287" fill="none" stroke="#e24a3a" stroke-width="1" stroke-dasharray="1.6 1.4"/>
<path d="M662.6 295L664.9 297.3L667.2 299.7L669.5 297.7L671.9 295.7L674.2 293.7L675.3 290.6L676.4 287.4" fill="none" stroke="#e24a3a" stroke-width="1" stroke-dasharray="1.6 1.4"/>
<path d="M689.9 301.1L687.7 301.4L685.5 301.8L683.3 302.1L682.4 304.3L681.4 306.5L680.4 308.7L680.9 311.7L681.3 314.6L683.4 316.4L685.4 318.2L687.4 320.1L691.2 320.8L691.3 323.7L691.4 326.7L690.4 328.9L689.5 331.2L688.5 333.4L688.7 336.4L688.9 339.4L685.3 341.7" fill="none" stroke="#e24a3a" stroke-width="1" stroke-dasharray="1.6 1.4"/>
<path d="M691.2 320.8L693.8 320.2L696.4 319.6L699 319L699.9 321.7L700.9 324.4L703.1 326.8L705.2 329.3L707.2 331.8L710.4 334.2L710.6 337.2L710.6 340.2L712.7 341.5L714.7 342.9L715 347.5L713.6 350.1L712.3 352.7L710.2 353.3L708.1 353.9L706 354.5L703.8 355.1L701.7 355.8L699.8 355.7L697.8 355.6L695.8 355.5L693.9 355.5L691.9 355.4L689.9 355.4L689.5 352.5L689.1 349.6L688.7 346.7L688.3 343.8L688.9 339.4" fill="none" stroke="#e24a3a" stroke-width="1" stroke-dasharray="1.6 1.4"/>
<path d="M689.9 355.4L688.1 358.3L686.3 361.2L685.6 364.1L685 366.9L684.3 369.8L682.7 372.4L681 375L679.3 377.7L678.7 379.9L678 382.1L677.3 384.3L676.6 386.6L675.9 388.8L674.4 391.4L672.9 394L671.4 396.6L670.6 398.8L669.7 400.9L668.8 403L667.9 405.1L667 407.2L666 409.8L664.9 412.4L663.8 415L662.4 417.5L661.1 420L659.8 422.5L658.4 424.9L657 427.3L657.2 431.3L658.7 432L660.1 432.7L661.5 433.4" fill="none" stroke="#e24a3a" stroke-width="1" stroke-dasharray="1.6 1.4"/>
<path d="M701.7 355.8L703.9 360.9L705 364.2L706 367.5L706.8 370.9L708.4 372.3L709.9 373.8L711.3 375.3L715.1 372L715.6 370.6L717.2 366.5L716.2 363.8L715 361.2L714.3 358.4L713.5 355.6L712.7 352.8" fill="none" stroke="#e24a3a" stroke-width="1" stroke-dasharray="1.6 1.4"/>
<path d="M711.3 375.3L709.4 377.5L707.5 379.6L705.5 381.7L707 383.4L708.5 385.2L708.9 387.8L709.2 390.5L709.4 393.2" fill="none" stroke="#e24a3a" stroke-width="1" stroke-dasharray="1.6 1.4"/>
<path d="M700.2 391.7L701.2 389.4L702.3 387L703.3 384.6L704.3 382.3L705.5 381.7" fill="none" stroke="#e24a3a" stroke-width="1" stroke-dasharray="1.6 1.4"/>
<path d="M545.5 459.6L541.6 455.7L537.7 451.6L533.9 447.4L530.2 443.1L526.7 438.7L523.2 434.1L519.8 429.4L516.6 424.7L513.4 419.8L510.4 414.8L507.5 409.8L504.7 404.6L502.1 399.4L499.6 394.1L497.2 388.8L495 383.4L492.9 377.9L490.9 372.4L489.1 366.9L487.5 361.4L486 355.8L484.6 350.2L483.4 344.6L482.4 339L481.5 333.4L480.8 327.8L480.2 322.2L479.8 316.7L479.6 311.2L479.5 305.7L479.6 300.3L479.8 294.9L480.2 289.6L480.8 284.3L481.5 279.2L482.4 274.1L483.4 269L484.6 264.1L486 259.3L487.5 254.5L489.1 249.9L490.9 245.4L492.9 241L495 236.8L497.2 232.6L499.6 228.6L502.1 224.8L504.7 221L507.5 217.5L510.4 214.1L513.4 210.8L516.6 207.7L519.8 204.8L523.2 202L526.7 199.4L530.2 197L533.9 194.7L537.7 192.7" fill="none" stroke="#fff" stroke-width="1.2" stroke-opacity="0.9"/>
<path d="M580.1 450.2L578.2 445.7L576.4 441.1L574.6 436.3L572.9 431.5L571.2 426.5L569.5 421.5L567.9 416.3L566.4 411.1L564.9 405.8L563.4 400.4L562.1 394.9L560.7 389.4L559.5 383.8L558.3 378.1L557.2 372.4L556.1 366.7L555.1 361L554.2 355.2L553.3 349.4L552.5 343.6L551.8 337.8L551.2 332.1L550.6 326.3L550.1 320.5L549.7 314.8L549.4 309.1L549.1 303.5L548.9 297.9L548.8 292.3L548.8 286.8L548.8 281.4L548.9 276.1L549.1 270.8L549.4 265.7L549.7 260.6L550.1 255.6L550.6 250.7L551.2 246L551.8 241.3L552.5 236.8L553.3 232.4L554.2 228.2L555.1 224.1L556.1 220.1L557.2 216.3L558.3 212.6L559.5 209.1L560.7 205.8L562.1 202.6L563.4 199.6L564.9 196.8L566.4 194.1L567.9 191.7L569.5 189.4L571.2 187.3L572.9 185.4L574.6 183.6L576.4 182.1L578.2 180.8L580.1 179.7" fill="none" stroke="#fff" stroke-width="1.2" stroke-opacity="0.9"/>
<path d="M663.1 454.4L666.1 450.1L669.2 445.8L672.1 441.3L675 436.7L677.8 431.9L680.5 427.1L683.1 422.2L685.7 417.1L688.1 412L690.5 406.8L692.8 401.5L694.9 396.2L697 390.8L699 385.3L700.8 379.7L702.6 374.2L704.2 368.6L705.7 362.9L707.1 357.2L708.4 351.6L709.6 345.9L710.6 340.2L711.6 334.5L712.4 328.8L713.1 323.1L713.6 317.5L714.1 311.9L714.4 306.3L714.6 300.7L714.6 295.3L714.6 289.8L714.4 284.5L714.1 279.2L713.6 274L713.1 268.9L712.4 263.8L711.6 258.9L710.6 254.1L709.6 249.3L708.4 244.7L707.1 240.2L705.7 235.9L704.2 231.6L702.6 227.5L700.8 223.6L699 219.8L697 216.1L694.9 212.6L692.8 209.2L690.5 206.1L688.1 203L685.7 200.2L683.1 197.5L680.5 195L677.8 192.7L675 190.6L672.1 188.6L669.2 186.8L666.1 185.3L663.1 183.9" fill="none" stroke="#fff" stroke-width="1.2" stroke-opacity="0.9"/>
<path d="M689.2 466.9L693.8 463.4L698.3 459.8L702.8 456L707.1 452.1L711.3 448L715.4 443.9L719.4 439.6L723.2 435.2L726.9 430.6L730.5 426L733.9 421.3L737.1 416.4L740.3 411.5L743.2 406.5L746 401.4L748.6 396.3L751.1 391.1L753.4 385.8L755.5 380.5L757.4 375.1L759.2 369.7L760.8 364.2L762.2 358.8L763.4 353.3L764.4 347.8L765.3 342.3L766 336.8L766.4 331.3L766.7 325.8L766.8 320.3L766.7 314.9L766.4 309.5L766 304.1L765.3 298.8L764.4 293.5L763.4 288.3L762.2 283.2L760.8 278.1L759.2 273.2L757.4 268.3L755.5 263.5L753.4 258.8L751.1 254.1L748.6 249.7L746 245.3L743.2 241L740.3 236.9L737.1 232.9L733.9 229L730.5 225.2L726.9 221.6L723.2 218.2" fill="none" stroke="#fff" stroke-width="1.2" stroke-opacity="0.9"/>
<path d="M677.5 496.9L681.4 495.2" fill="none" stroke="#fff" stroke-width="1.2" stroke-opacity="0.9"/>
<path d="M533.8 489.6L529.2 487.5L524.7 485.2L520.2 482.7L515.9 480L511.7 477.2L507.6 474.2L503.6 471.1" fill="none" stroke="#fff" stroke-width="1.2" stroke-opacity="0.9"/>
<path d="M611.5 499.2L612.3 497L613.1 494.6L613.9 492L614.7 489.3L615.5 486.4L616.3 483.3L617.1 480L617.9 476.6L618.7 473L619.5 469.2L620.2 465.3L621 461.3L621.7 457.1L622.4 452.7L623.2 448.3L623.9 443.6L624.5 438.9L625.2 434.1L625.9 429.1L626.5 424.1L627.1 418.9L627.7 413.7L628.3 408.3L628.8 402.9L629.4 397.4L629.9 391.9L630.4 386.3L630.8 380.6L631.3 374.9L631.7 369.1L632.1 363.4L632.5 357.5L632.8 351.7L633.1 345.9L633.4 340L633.7 334.2L633.9 328.4L634.1 322.6L634.3 316.8L634.5 311L634.6 305.3L634.7 299.7L634.8 294.1L634.8 288.5L634.8 283L634.8 277.6L634.8 272.3L634.7 267L634.6 261.9L634.5 256.8L634.3 251.9L634.1 247L633.9 242.3L633.7 237.7L633.4 233.2L633.1 228.9L632.8 224.7L632.5 220.6L632.1 216.7L631.7 213L631.3 209.4L630.8 205.9L630.4 202.7L629.9 199.6L629.4 196.7L628.8 193.9L628.3 191.4L627.7 189L627.1 186.8L626.5 184.8L625.9 183L625.2 181.4L624.5 180L623.9 178.8L623.2 177.8L622.4 177L621.7 176.3L621 175.9L620.2 175.7" fill="none" stroke="#fff" stroke-width="1.2" stroke-opacity="0.9"/>
<path d="M611.5 499.2L610.7 501.2L609.9 503L609.1 504.6L608.3 506L607.5 507.2L606.7 508.2L605.9 509L605.1 509.6L604.3 510.1L603.5 510.3" fill="none" stroke="#fff" stroke-width="1.2" stroke-opacity="0.9"/>
<path d="M528.6 474L529 473L529.6 471.9L530.2 470.9L531 469.9L531.8 468.9L532.8 467.9L533.8 466.9L535 465.9L536.2 465L537.6 464L539 463.1L540.5 462.2L542.1 461.3L543.7 460.4L545.5 459.6L547.3 458.8L549.3 458L551.3 457.2L553.3 456.5L555.5 455.7L557.7 455L559.9 454.4L562.3 453.7L564.7 453.1L567.1 452.6L569.6 452L572.2 451.5L574.8 451L577.4 450.6L580.1 450.2L582.9 449.8L585.6 449.4L588.4 449.1L591.2 448.9L594.1 448.6L597 448.4L599.8 448.3L602.7 448.1L605.7 448L608.6 448L611.5 448L614.4 448L617.3 448L620.3 448.1L623.2 448.3L626 448.4L628.9 448.6L631.8 448.9L634.6 449.1L637.4 449.4L640.1 449.8L642.9 450.2L645.6 450.6L648.2 451L650.8 451.5L653.4 452L655.9 452.6L658.3 453.1L660.7 453.7L663.1 454.4L665.3 455L667.5 455.7L669.7 456.5L671.7 457.2L673.7 458L675.7 458.8L677.5 459.6L679.3 460.4L680.9 461.3L682.5 462.2L684 463.1L685.4 464L686.8 465L688 465.9L689.2 466.9L690.2 467.9L691.2 468.9L692 469.9L692.8 470.9L693.4 471.9L694 473L694.4 474L694.8 475.1L695 476.1L695.2 477.2L695.2 478.2L695.2 479.3L695 480.4L694.8 481.4L694.4 482.5L694 483.5L693.4 484.5L692.8 485.6L692 486.6L691.2 487.6L690.2 488.6L689.2 489.6L688 490.6L686.8 491.5L685.4 492.5L684 493.4L682.5 494.3L680.9 495.2L679.3 496L677.5 496.9L675.7 497.7L673.7 498.5M549.3 498.5L547.3 497.7L545.5 496.9L543.7 496L542.1 495.2L540.5 494.3L539 493.4L537.6 492.5L536.2 491.5L535 490.6L533.8 489.6L532.8 488.6L531.8 487.6L531 486.6L530.2 485.6L529.6 484.5L529 483.5L528.6 482.5L528.2 481.4L528 480.4L527.8 479.3L527.8 478.2L527.8 477.2L528 476.1L528.2 475.1L528.6 474" fill="none" stroke="#fff" stroke-width="1.2" stroke-opacity="0.9"/>
<path d="M467.9 413.8L468.6 412L469.6 410.2L470.7 408.4L472.1 406.6L473.5 404.9L475.2 403.1L477 401.4L479 399.7L481.1 398.1L483.4 396.5L485.9 394.9L488.5 393.3L491.2 391.7L494.1 390.2L497.2 388.8L500.4 387.4L503.7 386L507.2 384.6L510.7 383.3L514.4 382.1L518.3 380.9L522.2 379.7L526.2 378.6L530.4 377.6L534.6 376.6L539 375.7L543.4 374.8L547.9 373.9L552.5 373.2L557.2 372.4L561.9 371.8L566.7 371.2L571.5 370.7L576.4 370.2L581.3 369.8L586.3 369.4L591.3 369.1L596.3 368.9L601.4 368.8L606.4 368.7L611.5 368.6L616.6 368.7L621.6 368.8L626.7 368.9L631.7 369.1L636.7 369.4L641.7 369.8L646.6 370.2L651.5 370.7L656.3 371.2L661.1 371.8L665.8 372.4L670.5 373.2L675.1 373.9L679.6 374.8L684 375.7L688.4 376.6L692.6 377.6L696.8 378.6L700.8 379.7L704.7 380.9L708.6 382.1L712.3 383.3L715.8 384.6L719.3 386L722.6 387.4L725.8 388.8L728.9 390.2L731.8 391.7L734.5 393.3L737.1 394.9L739.6 396.5L741.9 398.1L744 399.7L746 401.4L747.8 403.1L749.5 404.9L750.9 406.6L752.3 408.4L753.4 410.2L754.4 412L755.1 413.8L755.8 415.6L756.2 417.4L756.5 419.3L756.6 421.1L756.5 422.9L756.2 424.7L755.8 426.6L755.1 428.4L754.4 430.2L753.4 432M469.6 432L468.6 430.2L467.9 428.4L467.2 426.6L466.8 424.7L466.5 422.9L466.4 421.1L466.5 419.3L466.8 417.4L467.2 415.6L467.9 413.8" fill="none" stroke="#fff" stroke-width="1.2" stroke-opacity="0.9"/>
<path d="M470.7 252.2L472.1 250.5L473.5 248.7L475.2 247L477 245.3L479 243.6L481.1 241.9L483.4 240.3L485.9 238.7L488.5 237.1L491.2 235.6L494.1 234.1L497.2 232.6L500.4 231.2L503.7 229.8L507.2 228.5L510.7 227.2L514.4 225.9L518.3 224.7L522.2 223.6L526.2 222.5L530.4 221.4L534.6 220.4L539 219.5L543.4 218.6L547.9 217.8L552.5 217L557.2 216.3L561.9 215.6L566.7 215L571.5 214.5L576.4 214L581.3 213.6L586.3 213.3L591.3 213L596.3 212.7L601.4 212.6L606.4 212.5L611.5 212.5L616.6 212.5L621.6 212.6L626.7 212.7L631.7 213L636.7 213.3L641.7 213.6L646.6 214L651.5 214.5L656.3 215L661.1 215.6L665.8 216.3L670.5 217L675.1 217.8L679.6 218.6L684 219.5L688.4 220.4L692.6 221.4L696.8 222.5L700.8 223.6L704.7 224.7L708.6 225.9L712.3 227.2L715.8 228.5L719.3 229.8L722.6 231.2L725.8 232.6L728.9 234.1L731.8 235.6L734.5 237.1L737.1 238.7L739.6 240.3L741.9 241.9L744 243.6L746 245.3L747.8 247L749.5 248.7L750.9 250.5L752.3 252.2" fill="none" stroke="#fff" stroke-width="1.2" stroke-opacity="0.9"/>
<path d="M551.3 186.7L553.3 186L555.5 185.3L557.7 184.6L559.9 183.9L562.3 183.3L564.7 182.6L567.1 182.1L569.6 181.5L572.2 181L574.8 180.5L577.4 180.1L580.1 179.7L582.9 179.3L585.6 179L588.4 178.6L591.2 178.4L594.1 178.1L597 177.9L599.8 177.8L602.7 177.6L605.7 177.5L608.6 177.5L611.5 177.5L614.4 177.5L617.3 177.5L620.3 177.6L623.2 177.8L626 177.9L628.9 178.1L631.8 178.4L634.6 178.6L637.4 179L640.1 179.3L642.9 179.7L645.6 180.1L648.2 180.5L650.8 181L653.4 181.5L655.9 182.1L658.3 182.6L660.7 183.3L663.1 183.9L665.3 184.6L667.5 185.3L669.7 186L671.7 186.7" fill="none" stroke="#fff" stroke-width="1.2" stroke-opacity="0.9"/>
<path d="M445.6 334.6L446.5 332.5L447.7 330.4L449 328.3L450.5 326.3L452.2 324.3L454.1 322.3L456.2 320.3L458.5 318.4L461 316.4L463.6 314.6L466.4 312.7L469.5 310.9L472.6 309.1L476 307.4L479.5 305.7L483.2 304.1L487 302.5L491 300.9L495.1 299.4L499.4 298L503.8 296.6L508.4 295.3L513 294L517.8 292.8L522.7 291.6L527.8 290.5L532.9 289.5L538.1 288.6L543.4 287.7L548.8 286.8L554.2 286.1L559.7 285.4L565.3 284.8L571 284.2L576.7 283.8L582.4 283.3L588.2 283L594 282.8L599.8 282.6L605.7 282.5L611.5 282.4L617.3 282.5L623.2 282.6L629 282.8L634.8 283L640.6 283.3L646.3 283.8L652 284.2L657.7 284.8L663.3 285.4L668.8 286.1L674.2 286.8L679.6 287.7L684.9 288.6L690.1 289.5L695.2 290.5L700.3 291.6L705.2 292.8L710 294L714.6 295.3L719.2 296.6L723.6 298L727.9 299.4L732 300.9L736 302.5L739.8 304.1L743.5 305.7L747 307.4L750.4 309.1L753.5 310.9L756.6 312.7L759.4 314.6L762 316.4L764.5 318.4L766.8 320.3L768.9 322.3L770.8 324.3L772.5 326.3L774 328.3L775.3 330.4L776.5 332.5L777.4 334.6L778.1 336.7L778.6 338.8L778.9 340.9L779 343M444.1 340.9L444.4 338.8L444.9 336.7L445.6 334.6" fill="none" stroke="#f2f21a" stroke-width="1.4"/>
<path d="M460.2 271.2L461.2 269.3L462.4 267.4L463.8 265.6L465.3 263.7L467.1 261.9L469 260.1L471.1 258.3L473.4 256.5L475.8 254.8L478.4 253.1L481.2 251.4L484.1 249.8L487.2 248.2L490.4 246.7L493.8 245.2L497.3 243.7L501 242.3L504.7 240.9L508.7 239.6L512.7 238.3L516.9 237.1L521.2 235.9L525.6 234.8L530.1 233.8L534.7 232.8L539.4 231.8L544.1 230.9L549 230.1L553.9 229.4L558.9 228.7L564 228L569.1 227.5L574.3 227L579.5 226.5L584.8 226.2L590.1 225.8L595.4 225.6L600.8 225.4L606.1 225.3L611.5 225.3L616.9 225.3L622.2 225.4L627.6 225.6L632.9 225.8L638.2 226.2L643.5 226.5L648.7 227L653.9 227.5L659 228L664.1 228.7L669.1 229.4L674 230.1L678.9 230.9L683.6 231.8L688.3 232.8L692.9 233.8L697.4 234.8L701.8 235.9L706.1 237.1L710.3 238.3L714.3 239.6L718.3 240.9L722 242.3L725.7 243.7L729.2 245.2L732.6 246.7L735.8 248.2L738.9 249.8L741.8 251.4L744.6 253.1L747.2 254.8L749.6 256.5L751.9 258.3L754 260.1L755.9 261.9L757.7 263.7L759.2 265.6L760.6 267.4L761.8 269.3L762.8 271.2" fill="none" stroke="#f2f21a" stroke-width="1.3" stroke-dasharray="1.8 1.8"/>
<path d="M459.3 397.4L460.2 395.5L461.2 393.6L462.4 391.7L463.8 389.8L465.3 387.9L467.1 386.1L469 384.3L471.1 382.5L473.4 380.8L475.8 379L478.4 377.3L481.2 375.7L484.1 374L487.2 372.5L490.4 370.9L493.8 369.4L497.3 367.9L501 366.5L504.7 365.1L508.7 363.8L512.7 362.5L516.9 361.3L521.2 360.2L525.6 359L530.1 358L534.7 357L539.4 356.1L544.1 355.2L549 354.4L553.9 353.6L558.9 352.9L564 352.3L569.1 351.7L574.3 351.2L579.5 350.8L584.8 350.4L590.1 350.1L595.4 349.9L600.8 349.7L606.1 349.6L611.5 349.5L616.9 349.6L622.2 349.7L627.6 349.9L632.9 350.1L638.2 350.4L643.5 350.8L648.7 351.2L653.9 351.7L659 352.3L664.1 352.9L669.1 353.6L674 354.4L678.9 355.2L683.6 356.1L688.3 357L692.9 358L697.4 359L701.8 360.2L706.1 361.3L710.3 362.5L714.3 363.8L718.3 365.1L722 366.5L725.7 367.9L729.2 369.4L732.6 370.9L735.8 372.5L738.9 374L741.8 375.7L744.6 377.3L747.2 379L749.6 380.8L751.9 382.5L754 384.3L755.9 386.1L757.7 387.9L759.2 389.8L760.6 391.7L761.8 393.6L762.8 395.5L763.7 397.4L764.3 399.3L764.8 401.2L765.1 403.2L765.2 405.1L765.1 407.1L764.8 409L764.3 410.9L763.7 412.9M459.3 412.9L458.7 410.9L458.2 409L457.9 407.1L457.8 405.1L457.9 403.2L458.2 401.2L458.7 399.3L459.3 397.4" fill="none" stroke="#f2f21a" stroke-width="1.3" stroke-dasharray="1.8 1.8"/>
<path d="M582.3 178.1L584.4 177.7L586.5 177.4L588.7 177.1L590.9 176.8L593.1 176.6L595.4 176.3L597.6 176.2L599.9 176L602.2 175.9L604.5 175.8L606.9 175.7L609.2 175.6L611.5 175.6L613.8 175.6L616.1 175.7L618.5 175.8L620.8 175.9L623.1 176L625.4 176.2L627.6 176.3L629.9 176.6L632.1 176.8L634.3 177.1L636.5 177.4L638.6 177.7L640.7 178.1" fill="none" stroke="#f2f21a" stroke-width="1.3" stroke-dasharray="1.8 1.8"/>
<path d="M545.5 482.9L545.9 482.1L546.3 481.3L546.8 480.4L547.5 479.6L548.1 478.8L548.9 478L549.7 477.3L550.6 476.5L551.6 475.7L552.7 475L553.8 474.2L555 473.5L556.3 472.8L557.6 472.1L559 471.4L560.5 470.8L562 470.2L563.6 469.5L565.2 468.9L566.9 468.4L568.7 467.8L570.5 467.3L572.3 466.8L574.2 466.3L576.2 465.8L578.2 465.4L580.2 465L582.3 464.6L584.4 464.3L586.5 463.9L588.7 463.6L590.9 463.4L593.1 463.1L595.4 462.9L597.6 462.7L599.9 462.5L602.2 462.4L604.5 462.3L606.9 462.2L609.2 462.2L611.5 462.2L613.8 462.2L616.1 462.2L618.5 462.3L620.8 462.4L623.1 462.5L625.4 462.7L627.6 462.9L629.9 463.1L632.1 463.4L634.3 463.6L636.5 463.9L638.6 464.3L640.7 464.6L642.8 465L644.8 465.4L646.8 465.8L648.8 466.3L650.7 466.8L652.5 467.3L654.3 467.8L656.1 468.4L657.8 468.9L659.4 469.5L661 470.2L662.5 470.8L664 471.4L665.4 472.1L666.7 472.8L668 473.5L669.2 474.2L670.3 475L671.4 475.7L672.4 476.5L673.3 477.3L674.1 478L674.9 478.8L675.5 479.6L676.2 480.4L676.7 481.3L677.1 482.1L677.5 482.9L677.8 483.8L678 484.6L678.1 485.4L678.1 486.3L678.1 487.1L678 488L677.8 488.8L677.5 489.6L677.1 490.5L676.7 491.3L676.2 492.1L675.5 492.9L674.9 493.7L674.1 494.5L673.3 495.3L672.4 496.1L671.4 496.8L670.3 497.6L669.2 498.3L668 499L666.7 499.8L665.4 500.4L664 501.1L662.5 501.8L661 502.4L659.4 503L657.8 503.6L656.1 504.2L654.3 504.7L652.5 505.3L650.7 505.8L648.8 506.3L646.8 506.7L644.8 507.1L642.8 507.6M580.2 507.6L578.2 507.1L576.2 506.7L574.2 506.3L572.3 505.8L570.5 505.3L568.7 504.7L566.9 504.2L565.2 503.6L563.6 503L562 502.4L560.5 501.8L559 501.1L557.6 500.4L556.3 499.8L555 499L553.8 498.3L552.7 497.6L551.6 496.8L550.6 496.1L549.7 495.3L548.9 494.5L548.1 493.7L547.5 492.9L546.8 492.1L546.3 491.3L545.9 490.5L545.5 489.6L545.2 488.8L545 488L544.9 487.1L544.9 486.3L544.9 485.4L545 484.6L545.2 483.8L545.5 482.9" fill="none" stroke="#f2f21a" stroke-width="1.3" stroke-dasharray="1.8 1.8"/>
<path d="M611.5 499.2L617.3 499.4L623.1 499.4L628.8 499.2L634.6 498.8L640.3 498.3L646 497.5L651.6 496.6L657.2 495.4L662.8 494.1L668.2 492.6L673.6 491L679 489.1L684.2 487.1L689.4 484.8L694.4 482.5L699.4 479.9L704.3 477.2L709 474.3L713.6 471.2L718.1 468L722.5 464.7L726.7 461.2L730.8 457.5L734.8 453.8L738.6 449.8L742.2 445.8L745.7 441.6L749 437.3L752.2 432.9L755.1 428.4L758 423.8L760.6 419L763 414.2L765.3 409.3L767.4 404.3" fill="none" stroke="#f2f21a" stroke-width="1.4"/>
<path d="M611.5 499.2L605.7 498.8L599.9 498.2L594.2 497.4L588.4 496.5L582.7 495.3L577 494L571.4 492.5L565.8 490.8L560.2 488.9L554.8 486.9L549.4 484.6L544 482.2L538.8 479.7L533.6 476.9L528.6 474L523.6 471L518.7 467.8L514 464.4L509.4 460.9L504.9 457.2L500.5 453.4L496.3 449.5L492.2 445.4L488.2 441.2L484.4 436.9L480.8 432.5L477.3 428L474 423.3L470.8 418.6L467.9 413.8L465 408.9L462.4 403.9L460 398.8L457.7 393.7L455.6 388.5L453.7 383.2L452.1 377.9L450.6 372.6L449.3 367.2L448.2 361.8L447.2 356.4L446.5 350.9L446 345.5L445.7 340L445.6 334.6L445.7 329.1L446 323.7L446.5 318.3L447.2 312.9L448.2 307.6L449.3 302.3L450.6 297L452.1 291.9L453.7 286.7" fill="none" stroke="#f2f21a" stroke-width="1.4"/>
<path d="M455.3 282.5L454.5 284.5L453.8 286.6L453.1 288.6L452.4 290.7L451.8 292.8L451.2 294.9L450.6 297L450 299.1L449.5 301.2L449 303.3L448.6 305.4L448.2 307.6L448.5 306.9L448.8 306.1L449.2 305.4L449.6 304.7L450.1 304L450.5 303.3L451 302.6L451.6 301.9L452.1 301.2L452.7 300.5L453.4 299.8L454 299.1L454.7 298.4L455.5 297.7L456.2 297.1L457 296.4L457.8 295.7L458.7 295L459.5 294.4L460.4 293.7L461.4 293.1L462.4 292.4L463.3 291.8L464.4 291.1L465.4 290.5L466.4 290.6L467.5 290.7L468.6 290.8L469.7 290.9L470.9 291.1L472.1 291.2L473.3 291.4L474.6 291.5L475.9 291.7L477.2 291.9L478.6 292L480 292.2L479.9 294.4L479.7 296.5L479.6 298.7L479.6 300.8L479.5 303L479.5 305.2L479.5 307.3L479.5 309.5L479.6 311.7L479.7 313.9L479.8 316.1L479.9 318.4L480.1 320.6L480.3 322.8L480.5 325L480.7 327.2L481 329.5L481.3 331.7L481.6 334L481.9 336.2L480.6 337L479.2 337.7L477.9 338.5L476.6 339.3L475.3 340.1L474 340.9L472.8 341.7L471.6 342.5L470.4 343.4L469.3 344.2L468.2 345L467.1 345.8L466.1 346.7L465 347.5L464 348.4L463.1 349.2L462.1 350.1L461.2 351L460.3 351.8L459.5 352.7L458.7 353.6L457.9 354.5L457.1 355.4L456.4 356.3L455.7 357.2L455.6 360.7L455.5 364.3L455.6 367.8L456.2 370L456.8 372.2L457.5 374.3L458.2 376.5L458.9 378.7L459.7 380.8L460.5 383L461.3 385.1L462.2 387.3L463 389.4L464 391.5L464.9 393.6L465.9 395.7L466.9 397.8L467.9 399.9L468.9 402L470 404L471.1 406L472.3 408.1L473.5 410.1L474.7 412.1L475.9 414.1L477.1 416.1L478.4 418L479.7 420L481.1 421.9L482.4 423.8L483.8 425.7L485.2 427.6L486.6 429.4L488.1 431.3L489.6 433.1L491.1 434.9L492.6 436.7L494.2 438.5L495.8 440.2L497.4 442L498.3 444L499.2 446L500.2 447.9L501.2 449.8L502.3 451.7L503.5 453.6L504.6 455.5L505.8 457.3L507.1 459.1L509 460.5L510.8 462L512.7 463.4L514.6 464.8L516.5 466.2L518.4 467.5L520.4 468.9L522.4 470.2L524.4 471.5L526.4 472.7L528.4 473.9L530.5 475.1L532.5 476.3L534.6 477.5L536.7 478.6L538.8 479.7L540.9 480.7L543 481.8L545.2 482.8L547.4 483.8L549.5 484.7L551.7 485.6L553.9 486.5L556.1 487.4L558.4 488.2L560.6 489L562.8 489.8L565.1 490.6L567.3 491.3L569.6 492L571.9 492.6L574.2 493.3L576.5 493.9L578.8 494.4L581.1 495L583.4 495.5L585.7 496L588.1 496.4L590.4 496.8L592.7 497.2L595.1 497.6L597.4 497.9L599.7 498.2L602.1 498.4L604.4 498.7L606.8 498.9L609.1 499L611.5 499.2" fill="none" stroke="#111" stroke-width="1.2" stroke-dasharray="3 1.5"/>
<circle cx="611.5" cy="343" r="167.5" fill="url(#rim)"/>
</g>
<text x="556" y="185" font-family="Liberation Sans" font-size="8" font-weight="bold" fill="#ffffff" textLength="19" lengthAdjust="spacingAndGlyphs" opacity="0.8">60°N</text>
<text x="604.7" y="174" font-family="Liberation Sans" font-size="9.3" font-weight="bold" fill="#f0f010" textLength="58" lengthAdjust="spacingAndGlyphs" >Arctic Circle</text>
<text x="552.7" y="190" font-family="Liberation Sans" font-weight="bold" fill="#c4101a" textLength="110" lengthAdjust="spacingAndGlyphs" ><tspan font-size="13.5">N</tspan><tspan font-size="9.5">ORTH</tspan><tspan font-size="13.5"> A</tspan><tspan font-size="9.5">MERICA</tspan></text>
<text x="608" y="222.7" font-family="Liberation Sans" font-size="9.3" font-weight="bold" fill="#f0f010" textLength="76.7" lengthAdjust="spacingAndGlyphs" >Tropic of Cancer</text>
<text x="476" y="251" font-family="Liberation Sans" font-size="8.6" font-weight="bold" fill="#ffffff" textLength="19.5" lengthAdjust="spacingAndGlyphs" >30°N</text>
<text x="609.3" y="281" font-family="Liberation Sans" font-size="9.3" font-weight="bold" fill="#f0f010" textLength="36.3" lengthAdjust="spacingAndGlyphs" >Equator</text>
<text x="446" y="341.8" font-family="Liberation Sans" font-size="9.3" font-weight="bold" fill="#f0f010" textLength="37" lengthAdjust="spacingAndGlyphs" >Equator</text>
<text x="617" y="347" font-family="Liberation Sans" font-size="9.3" font-weight="bold" fill="#f0f010" textLength="86" lengthAdjust="spacingAndGlyphs" >Tropic of Capricorn</text>
<text x="664" y="346.5" font-family="Liberation Sans" font-weight="bold" fill="#c4101a" textLength="109" lengthAdjust="spacingAndGlyphs" ><tspan font-size="13.5">S</tspan><tspan font-size="9.5">OUTH</tspan><tspan font-size="13.5"> A</tspan><tspan font-size="9.5">MERICA</tspan></text>
<text x="470" y="412" font-family="Liberation Sans" font-size="8.6" font-weight="bold" fill="#ffffff" textLength="20" lengthAdjust="spacingAndGlyphs" opacity="0.8">30°S</text>
<text x="464" y="413" font-family="Liberation Sans" font-size="9.3" font-weight="bold" fill="#f0f010" textLength="91" lengthAdjust="spacingAndGlyphs" >Tropic of Capricorn</text>
<text x="476" y="431" font-family="Liberation Sans" font-size="8.6" font-weight="bold" fill="#ffffff" textLength="19.5" lengthAdjust="spacingAndGlyphs" >30°S</text>
<text x="488" y="436" font-family="Liberation Sans" font-size="9.3" font-weight="bold" fill="#f0f010" textLength="61.6" lengthAdjust="spacingAndGlyphs" >Antimeridian</text>
<text x="583.6" y="448" font-family="Liberation Sans" font-size="8.6" font-weight="bold" fill="#ffffff" textLength="28" lengthAdjust="spacingAndGlyphs" >120°W</text>
<text x="629.3" y="445.8" font-family="Liberation Sans" font-size="8.6" font-weight="bold" fill="#ffffff" textLength="22.7" lengthAdjust="spacingAndGlyphs" >90°W</text>
<text x="549" y="458" font-family="Liberation Sans" font-size="8.6" font-weight="bold" fill="#ffffff" textLength="27.4" lengthAdjust="spacingAndGlyphs" >150°W</text>
<text x="668.9" y="452.5" font-family="Liberation Sans" font-size="8.6" font-weight="bold" fill="#ffffff" textLength="22.6" lengthAdjust="spacingAndGlyphs" >60°W</text>
<text x="635.6" y="460.8" font-family="Liberation Sans" font-size="9.3" font-weight="bold" fill="#f0f010" textLength="72.9" lengthAdjust="spacingAndGlyphs" >Antarctic Circle</text>
<text x="695.8" y="464.6" font-family="Liberation Sans" font-size="8.6" font-weight="bold" fill="#ffffff" textLength="22.2" lengthAdjust="spacingAndGlyphs" >30°W</text>
<text x="533" y="472.4" font-family="Liberation Sans" font-size="8.6" font-weight="bold" fill="#ffffff" textLength="27" lengthAdjust="spacingAndGlyphs" >180°W</text>
<text x="536" y="472.4" font-family="Liberation Sans" font-size="8.6" font-weight="bold" fill="#ffffff" textLength="24" lengthAdjust="spacingAndGlyphs" opacity="0.7">180°E</text>
<text x="703.7" y="477.8" font-family="Liberation Sans" font-size="9.3" font-weight="bold" fill="#f0f010" textLength="73.3" lengthAdjust="spacingAndGlyphs" >Prime Meridian</text>
<text x="538" y="488.4" font-family="Liberation Sans" font-size="8.6" font-weight="bold" fill="#ffffff" textLength="23" lengthAdjust="spacingAndGlyphs" >150°E</text>
<text x="684" y="495.7" font-family="Liberation Sans" font-size="8.6" font-weight="bold" fill="#ffffff" textLength="19" lengthAdjust="spacingAndGlyphs" >30°E</text>
<text x="559" y="498.4" font-family="Liberation Sans" font-size="9.3" font-weight="bold" fill="#f0f010" textLength="74" lengthAdjust="spacingAndGlyphs" >Antarctic Circle</text>
<text x="581" y="510" font-family="Liberation Sans" font-weight="bold" fill="#c4101a" textLength="81" lengthAdjust="spacingAndGlyphs" ><tspan font-size="13.5">A</tspan><tspan font-size="9.5">NTARCTICA</tspan></text>
<g fill="#222" stroke="#999" stroke-width="0.6"><rect x="602.5" y="341.5" width="6" height="3" rx="1.5"/><rect x="614.5" y="341.5" width="6" height="3" rx="1.5"/><rect x="610.0" y="334" width="3" height="6" rx="1.5"/><rect x="610.0" y="346" width="3" height="6" rx="1.5"/></g>
</svg>
<div style='position:absolute;left:962px;top:81px;width:213px;height:460px;background:#000'></div>
<svg width="213" height="460" viewBox="962 81 213 460" style="position:absolute;left:962px;top:81px"><circle cx="1018.8" cy="393.9" r="1.2" fill="#fff"/><circle cx="984" cy="392.8" r="0.8" fill="#fff"/><circle cx="1100.4" cy="414.8" r="1.2" fill="#fff"/><circle cx="1106.2" cy="429" r="1.2" fill="#fff"/><circle cx="1071" cy="448" r="1.6" fill="#fff"/><circle cx="1079.8" cy="442.9" r="1.2" fill="#fff"/><circle cx="1062.2" cy="455.4" r="1.2" fill="#fff"/><circle cx="1106.2" cy="445.6" r="1.2" fill="#fff"/><circle cx="1107.6" cy="460" r="0.8" fill="#fff"/><circle cx="1127.8" cy="463" r="0.8" fill="#fff"/><circle cx="1130.6" cy="455" r="0.8" fill="#fff"/><circle cx="1007.7" cy="439.8" r="0.8" fill="#fff"/><circle cx="963.2" cy="465.8" r="1.2" fill="#fff"/><circle cx="1047.3" cy="483.4" r="1.2" fill="#fff"/><circle cx="1003.3" cy="496.2" r="1.6" fill="#fff"/><circle cx="1006.5" cy="495.7" r="1.2" fill="#fff"/><circle cx="995.6" cy="503.6" r="1.2" fill="#fff"/><circle cx="986.3" cy="494.3" r="0.8" fill="#fff"/><circle cx="1045.9" cy="499" r="0.8" fill="#fff"/><circle cx="1006" cy="519.8" r="1.6" fill="#fff"/><circle cx="1028.8" cy="519.8" r="0.8" fill="#fff"/><circle cx="1045" cy="516.4" r="0.8" fill="#fff"/><circle cx="1100.6" cy="500.8" r="0.8" fill="#fff"/><circle cx="1112.2" cy="479.3" r="0.8" fill="#fff"/><circle cx="1141" cy="490.9" r="0.8" fill="#fff"/><circle cx="1123.8" cy="512.2" r="1.2" fill="#fff"/><circle cx="1137.5" cy="509.4" r="0.8" fill="#fff"/><circle cx="1155.6" cy="519.4" r="1.2" fill="#fff"/><circle cx="1155.6" cy="515.2" r="0.8" fill="#fff"/><circle cx="1131.3" cy="525" r="0.8" fill="#fff"/><circle cx="1163.3" cy="536" r="1.2" fill="#fff"/><circle cx="1170" cy="442" r="0.8" fill="#fff"/><circle cx="965.5" cy="530.3" r="0.8" fill="#fff"/><circle cx="991.7" cy="507.8" r="0.8" fill="#fff"/><circle cx="980.5" cy="471" r="0.8" fill="#fff"/><circle cx="1006" cy="91.9" r="0.8" fill="#fff"/><circle cx="1078.6" cy="91.2" r="0.8" fill="#fff"/><circle cx="1055.9" cy="120" r="0.8" fill="#fff"/><circle cx="980.5" cy="127.4" r="0.8" fill="#fff"/><circle cx="1021.8" cy="129" r="0.8" fill="#fff"/><circle cx="1155.8" cy="114.2" r="0.8" fill="#fff"/><circle cx="1057" cy="152.2" r="1.2" fill="#fff"/><circle cx="1035" cy="154.5" r="0.8" fill="#fff"/><circle cx="970.1" cy="162.2" r="0.8" fill="#fff"/><circle cx="981" cy="169.6" r="0.8" fill="#fff"/><circle cx="1015.3" cy="183.5" r="0.8" fill="#fff"/><circle cx="1106.2" cy="178.6" r="1.2" fill="#fff"/><circle cx="1134.3" cy="175.1" r="1.2" fill="#fff"/><circle cx="1125.5" cy="176.5" r="0.8" fill="#fff"/><circle cx="1140" cy="163" r="0.8" fill="#fff"/><circle cx="1151" cy="143.6" r="0.8" fill="#fff"/><circle cx="1069.4" cy="200.6" r="1.2" fill="#fff"/><circle cx="1079.8" cy="211.5" r="0.8" fill="#fff"/><circle cx="1163.8" cy="515.2" r="0.7" fill="#fff" fill-opacity="0.7"/><circle cx="980.8" cy="463.8" r="0.5" fill="#fff" fill-opacity="0.45"/><circle cx="1103.6" cy="222.8" r="0.5" fill="#fff" fill-opacity="0.45"/><circle cx="1045.6" cy="412.4" r="0.5" fill="#fff" fill-opacity="0.45"/><circle cx="1162.4" cy="330.7" r="0.5" fill="#fff" fill-opacity="0.45"/><circle cx="1019.3" cy="98.4" r="0.7" fill="#fff" fill-opacity="0.7"/><circle cx="1042.8" cy="489.5" r="0.5" fill="#fff" fill-opacity="0.45"/><circle cx="1080.7" cy="189.9" r="0.7" fill="#fff" fill-opacity="0.7"/><circle cx="1031.3" cy="144.5" r="0.5" fill="#fff" fill-opacity="0.45"/><circle cx="1172.7" cy="390.2" r="0.7" fill="#fff" fill-opacity="0.7"/><circle cx="1150.7" cy="446.1" r="0.5" fill="#fff" fill-opacity="0.45"/><circle cx="1153.4" cy="430.6" r="0.5" fill="#fff" fill-opacity="0.45"/><circle cx="1037.3" cy="530.3" r="0.5" fill="#fff" fill-opacity="0.45"/><circle cx="996.8" cy="426.6" r="0.5" fill="#fff" fill-opacity="0.45"/><circle cx="1065.9" cy="504.6" r="0.5" fill="#fff" fill-opacity="0.45"/><circle cx="1137.6" cy="243.7" r="0.5" fill="#fff" fill-opacity="0.45"/><circle cx="1082.2" cy="502.6" r="0.5" fill="#fff" fill-opacity="0.45"/><circle cx="1065.2" cy="183.4" r="0.5" fill="#fff" fill-opacity="0.45"/><circle cx="1109.9" cy="157.9" r="0.5" fill="#fff" fill-opacity="0.45"/><circle cx="1019.3" cy="498.5" r="0.5" fill="#fff" fill-opacity="0.45"/><circle cx="1164.0" cy="404.7" r="0.5" fill="#fff" fill-opacity="0.45"/><circle cx="1159.2" cy="366.8" r="0.7" fill="#fff" fill-opacity="0.7"/><circle cx="1135.3" cy="413.8" r="0.5" fill="#fff" fill-opacity="0.45"/><circle cx="1003.2" cy="422.4" r="0.7" fill="#fff" fill-opacity="0.7"/><circle cx="1100.1" cy="206.8" r="0.5" fill="#fff" fill-opacity="0.45"/><circle cx="1146.9" cy="130.6" r="0.5" fill="#fff" fill-opacity="0.45"/><circle cx="1142.3" cy="193.9" r="0.5" fill="#fff" fill-opacity="0.45"/><circle cx="1113.6" cy="96.6" r="0.5" fill="#fff" fill-opacity="0.45"/><circle cx="999.1" cy="389.5" r="0.7" fill="#fff" fill-opacity="0.7"/><circle cx="1163.5" cy="93.6" r="0.5" fill="#fff" fill-opacity="0.45"/><circle cx="967.4" cy="198.9" r="0.5" fill="#fff" fill-opacity="0.45"/><circle cx="996.0" cy="166.0" r="0.5" fill="#fff" fill-opacity="0.45"/><circle cx="1044.0" cy="101.7" r="0.5" fill="#fff" fill-opacity="0.45"/><circle cx="994.8" cy="98.6" r="0.5" fill="#fff" fill-opacity="0.45"/><circle cx="1092.2" cy="421.3" r="0.7" fill="#fff" fill-opacity="0.7"/><circle cx="1033.8" cy="96.1" r="0.5" fill="#fff" fill-opacity="0.45"/><circle cx="1123.9" cy="420.2" r="0.5" fill="#fff" fill-opacity="0.45"/><circle cx="1121.7" cy="476.1" r="0.5" fill="#fff" fill-opacity="0.45"/><circle cx="1062.3" cy="185.1" r="0.5" fill="#fff" fill-opacity="0.45"/><circle cx="1029.4" cy="128.6" r="0.5" fill="#fff" fill-opacity="0.45"/><circle cx="1146.7" cy="140.3" r="0.5" fill="#fff" fill-opacity="0.45"/><circle cx="993.2" cy="520.6" r="0.5" fill="#fff" fill-opacity="0.45"/><circle cx="966.8" cy="337.0" r="0.7" fill="#fff" fill-opacity="0.7"/><circle cx="974.9" cy="97.3" r="0.7" fill="#fff" fill-opacity="0.7"/><circle cx="983.1" cy="372.2" r="0.5" fill="#fff" fill-opacity="0.45"/><circle cx="1169.5" cy="508.9" r="0.5" fill="#fff" fill-opacity="0.45"/><circle cx="1094.1" cy="447.7" r="0.5" fill="#fff" fill-opacity="0.45"/><circle cx="1073.5" cy="84.2" r="0.7" fill="#fff" fill-opacity="0.7"/><circle cx="1048.8" cy="132.8" r="0.5" fill="#fff" fill-opacity="0.45"/><circle cx="1013.6" cy="127.6" r="0.7" fill="#fff" fill-opacity="0.7"/><circle cx="1011.6" cy="181.3" r="0.5" fill="#fff" fill-opacity="0.45"/><circle cx="1097.8" cy="179.1" r="0.5" fill="#fff" fill-opacity="0.45"/><circle cx="1165.3" cy="415.1" r="0.5" fill="#fff" fill-opacity="0.45"/><circle cx="973.8" cy="273.0" r="0.5" fill="#fff" fill-opacity="0.45"/><circle cx="1001.1" cy="124.9" r="0.5" fill="#fff" fill-opacity="0.45"/><circle cx="1156.5" cy="361.0" r="0.5" fill="#fff" fill-opacity="0.45"/><circle cx="1169.5" cy="252.1" r="0.7" fill="#fff" fill-opacity="0.7"/><circle cx="1106.9" cy="128.2" r="0.5" fill="#fff" fill-opacity="0.45"/><circle cx="1139.5" cy="389.4" r="0.7" fill="#fff" fill-opacity="0.7"/><circle cx="1065.0" cy="177.2" r="0.5" fill="#fff" fill-opacity="0.45"/><circle cx="978.5" cy="212.0" r="0.5" fill="#fff" fill-opacity="0.45"/><circle cx="1159.4" cy="117.0" r="0.5" fill="#fff" fill-opacity="0.45"/><circle cx="988.6" cy="137.6" r="0.7" fill="#fff" fill-opacity="0.7"/><circle cx="1141.5" cy="374.9" r="0.5" fill="#fff" fill-opacity="0.45"/><circle cx="1108.5" cy="93.3" r="0.5" fill="#fff" fill-opacity="0.45"/><circle cx="1126.2" cy="412.6" r="0.5" fill="#fff" fill-opacity="0.45"/><circle cx="1130.7" cy="204.9" r="0.5" fill="#fff" fill-opacity="0.45"/><circle cx="1063.3" cy="518.3" r="0.5" fill="#fff" fill-opacity="0.45"/><circle cx="1158.7" cy="464.1" r="0.5" fill="#fff" fill-opacity="0.45"/><circle cx="1105.6" cy="501.8" r="0.5" fill="#fff" fill-opacity="0.45"/><circle cx="1134.7" cy="125.8" r="0.5" fill="#fff" fill-opacity="0.45"/><circle cx="1172.5" cy="149.0" r="0.5" fill="#fff" fill-opacity="0.45"/><circle cx="977.0" cy="121.4" r="0.5" fill="#fff" fill-opacity="0.45"/><circle cx="1170.6" cy="378.2" r="0.7" fill="#fff" fill-opacity="0.7"/><circle cx="1025.2" cy="187.9" r="0.5" fill="#fff" fill-opacity="0.45"/><circle cx="1073.0" cy="133.2" r="0.5" fill="#fff" fill-opacity="0.45"/><circle cx="1162.5" cy="427.4" r="0.7" fill="#fff" fill-opacity="0.7"/><circle cx="1071.5" cy="408.9" r="0.5" fill="#fff" fill-opacity="0.45"/><circle cx="1172.0" cy="439.7" r="0.5" fill="#fff" fill-opacity="0.45"/><circle cx="969.2" cy="354.0" r="0.5" fill="#fff" fill-opacity="0.45"/><circle cx="1112.2" cy="510.1" r="0.5" fill="#fff" fill-opacity="0.45"/><circle cx="1062.2" cy="521.6" r="0.5" fill="#fff" fill-opacity="0.45"/><circle cx="1122.9" cy="471.4" r="0.5" fill="#fff" fill-opacity="0.45"/><circle cx="1103.1" cy="528.6" r="0.5" fill="#fff" fill-opacity="0.45"/><circle cx="965.4" cy="294.3" r="0.5" fill="#fff" fill-opacity="0.45"/><circle cx="1148.5" cy="379.1" r="0.5" fill="#fff" fill-opacity="0.45"/><circle cx="966.6" cy="513.1" r="0.5" fill="#fff" fill-opacity="0.45"/><circle cx="1090.4" cy="495.7" r="0.5" fill="#fff" fill-opacity="0.45"/><circle cx="984.1" cy="454.7" r="0.5" fill="#fff" fill-opacity="0.45"/><circle cx="1004.9" cy="422.1" r="0.5" fill="#fff" fill-opacity="0.45"/><circle cx="1003.2" cy="449.5" r="0.7" fill="#fff" fill-opacity="0.7"/><circle cx="1061.1" cy="175.7" r="0.5" fill="#fff" fill-opacity="0.45"/><circle cx="978.3" cy="83.4" r="0.5" fill="#fff" fill-opacity="0.45"/><circle cx="1138.8" cy="382.9" r="0.5" fill="#fff" fill-opacity="0.45"/><circle cx="1033.3" cy="204.0" r="0.5" fill="#fff" fill-opacity="0.45"/><circle cx="968.8" cy="118.5" r="0.5" fill="#fff" fill-opacity="0.45"/><circle cx="999.5" cy="424.9" r="0.5" fill="#fff" fill-opacity="0.45"/><circle cx="1128.4" cy="476.9" r="0.7" fill="#fff" fill-opacity="0.7"/><circle cx="997.1" cy="256.4" r="0.5" fill="#fff" fill-opacity="0.45"/><circle cx="1024.9" cy="86.8" r="0.5" fill="#fff" fill-opacity="0.45"/><circle cx="1166.1" cy="249.5" r="0.5" fill="#fff" fill-opacity="0.45"/><circle cx="1145.8" cy="223.0" r="0.5" fill="#fff" fill-opacity="0.45"/><circle cx="1155.1" cy="117.1" r="0.5" fill="#fff" fill-opacity="0.45"/><circle cx="1130.1" cy="380.6" r="0.5" fill="#fff" fill-opacity="0.45"/><circle cx="1139.5" cy="124.5" r="0.5" fill="#fff" fill-opacity="0.45"/><circle cx="1141.7" cy="446.6" r="0.5" fill="#fff" fill-opacity="0.45"/><circle cx="1027.7" cy="188.4" r="0.5" fill="#fff" fill-opacity="0.45"/><circle cx="1011.7" cy="208.8" r="0.5" fill="#fff" fill-opacity="0.45"/><circle cx="986.5" cy="456.1" r="0.5" fill="#fff" fill-opacity="0.45"/></svg>
<svg width="213" height="460" viewBox="962 81 213 460" style="position:absolute;left:962px;top:81px">
<defs>
<radialGradient id="shalo" cx="1068.5" cy="311" r="86" gradientUnits="userSpaceOnUse"><stop offset="0.9186" stop-color="#8a8a8a"/><stop offset="0.9419" stop-color="#3a3a3a"/><stop offset="0.9709" stop-color="#101010"/><stop offset="1" stop-color="#000"/></radialGradient>
<radialGradient id="socean" cx="1053.5" cy="296" r="94.8" gradientUnits="userSpaceOnUse"><stop offset="0" stop-color="#b0b0b0"/><stop offset="0.8" stop-color="#9e9e9e"/><stop offset="1" stop-color="#b8b8b8"/></radialGradient>
<clipPath id="sclip"><circle cx="1068.5" cy="311" r="79"/></clipPath>
</defs>
<circle cx="1068.5" cy="311" r="86" fill="url(#shalo)"/>
<g clip-path="url(#sclip)">
<circle cx="1068.5" cy="311" r="79" fill="url(#socean)"/>
<path d="M1045.5 291L1046.3 293.2L1047.2 295.2L1049.1 296.6L1050.7 298.6L1051.8 300L1052.9 301.4L1054.5 302.7L1056.2 304.1L1058.2 304.9L1059.8 304.6L1061.4 304.2L1063 303.8L1064.4 303.9L1065.8 304L1067.1 304.1L1068.8 303.3L1070.6 302.5L1071.9 302.4L1073.3 302.4L1074.7 302.3L1076.7 304.8L1078.4 304.8L1080.1 304.8L1081.5 306.2L1081.7 307.9L1081.9 309.6L1081.4 311L1080.9 312.4L1082.2 314.1L1083.5 315.8L1084.2 317.2L1084.8 318.6L1085.5 320.3L1086.1 322L1086.3 323.4L1086.4 324.7L1086.6 326.1L1085.9 327.6L1085.1 329.2L1084.4 330.8L1084.1 332.4L1083.8 334.1L1084.2 335.4L1084.7 336.7L1085.4 338.2L1086.1 339.7L1086.8 341.2L1086.8 342.7L1086.9 344.2L1086.9 345.6L1087.6 347.2L1088.2 348.7L1088.6 349.9L1089 351.1L1089.3 352.3L1089.3 353.7L1089.3 355.2L1090.7 356.1L1092.1 355.6L1093.6 355.2L1094.6 355.2L1095.7 355.2L1096.7 355.2L1097.9 354.6L1099.1 354L1100.7 352.9L1102.4 351.7L1104.1 350.2L1105.8 348.7L1106.4 347.2L1107 345.6L1108.7 344.4L1110.4 343.1L1110.7 341.9L1111 340.6L1111.3 339.3L1111 337.4L1113.1 336.1L1114.3 335L1115.6 333.9L1116.8 332.8L1117.4 331.4L1117.9 330.1L1118.5 328.8L1118.5 327.4L1118.5 326.1L1118.5 324.7L1118.5 323.4L1118.4 322L1118.4 320.6L1118.2 318.9L1118.1 317.2L1119.2 315.5L1120.3 313.8L1121.9 311.7L1122.9 310.3L1123.9 308.9L1124.8 307.9L1125.7 306.9L1126.6 305.1L1127.4 303.4L1127.9 301.8L1128.3 300.2L1128.7 298.6L1128.8 296.7L1128.8 294.8L1127.9 295.1L1127 295.4L1126.1 295.7L1125.1 296L1124 296.3L1122.9 296.6L1121.5 294.8L1120.5 293.2L1119.5 291.9L1118.6 290.6L1116.7 288.6L1115.6 286.9L1114.5 285.3L1113.9 284L1113.2 282.7L1112.6 281.4L1111.5 280.1L1110.4 278.9L1109.6 277.6L1108.7 276.4L1107.9 275.1L1107 273.9L1106.1 272.7L1105.3 271.5L1104.6 270.1L1103.5 270.2L1102.5 270.3L1101.4 270.4L1100.2 270.2L1099.1 269.9L1098 269.6L1096.9 269.4L1095.8 269.3L1094.7 269.3L1093.6 269.2L1092.5 269.2L1091.4 269.1L1090.7 270.9L1089.5 270.5L1088.2 270L1087 269.6L1085.8 269.1L1084.4 268.6L1083 268L1081.6 267.4L1080.3 265.7L1080.4 264.6L1080.5 263.5L1078.9 263.1L1077.6 263.2L1076.4 263.3L1075.1 263.5L1074 263.5L1072.9 263.6L1071.8 263.7L1070.7 264L1069.6 264.4L1068.5 264.8L1067.4 265.2L1066.2 265.6L1064.9 265.3L1063.6 265L1062.4 264.8L1061.1 266.8L1059.9 267.7L1058.7 268.6L1057.8 270L1056.9 271.5L1055.7 272.7L1054.6 273.9L1052.7 274.5L1051.7 275.8L1050.6 277L1048.6 278.9L1048 280.1L1047.5 281.4L1046.9 282.7L1047.1 284L1047.3 285.3L1047.7 287.2L1046.6 289.1L1045.5 291Z" fill="#bdbdbd" stroke="#4a4a4a" stroke-width="0.7" stroke-dasharray="1.2 0.8"/>
<path d="M1058.1 263.5L1059 261.8L1058.6 260.2L1059.1 259.2L1059.5 258.1L1059.2 257.1L1061 256.4L1062 256.5L1063 256.6L1064 256.7L1065.3 256.7L1066.7 256.7L1067 255.4L1067.4 254.2L1066.4 253L1065.4 252.7L1064.4 252.3L1065.3 252.1L1066.2 251.9L1067.1 251.7L1068 251.3L1068.9 250.9L1069.8 250.5L1071.1 249.4L1072.3 248.3L1073.3 247.9L1074.2 247.5L1075.3 246.7L1075 245.7L1074.6 244.7L1075.4 244.5L1076.2 244.2L1076.4 245L1076.6 245.8L1076.9 246.7L1077.6 246.7L1078.4 246.7L1079.8 247.3L1080.5 247L1081.2 246.8L1081.9 246.6L1082.6 246.4L1083.2 246.3L1083.9 246.1L1084.5 245.9L1084.3 245.1L1084.1 244.4L1084.9 244.4L1085.8 244.4L1085.3 243.6L1084.8 242.9L1085.4 242.9L1086 242.8L1086.6 242.8L1087.2 242.7L1086.4 242.7L1085.7 242.6L1084.9 242.5L1084.2 242.4L1083.3 242.2L1082.5 241.9L1082.1 241.2L1081.6 240.6L1082 240.2L1082.3 239.8L1082.6 239.4L1081.9 239.3L1081.2 239.2L1080.5 239.1L1080.3 239.5L1080.1 240L1079.8 240.5L1079.5 240.9L1080.2 241.7L1081 242.6L1080.8 243.5L1080.6 244.4L1080.1 244.9L1079.6 245.5L1078.7 245.3L1077.9 245.1L1077.1 244.2L1076.3 243.3L1075.6 243.5L1075 243.8L1074.3 244L1073.4 243.7L1072.4 243.4L1072.1 242.5L1071.8 241.6L1072.3 241.1L1072.9 240.6L1073.4 240.3L1073.9 240.1L1074.4 239.8L1074.9 239.5L1075.2 238.9L1075.4 238.3L1075.8 237.9L1076 237.6L1076.3 237.2L1076.7 237.1L1077 237L1077.4 236.9L1077.7 236.8L1078.1 236.7L1078.4 236.6L1078.8 236.5L1079.1 236.4L1079.4 236.3L1079.9 236.4L1080.4 236.5L1080.9 236.6L1081.5 236.7L1082 236.8L1082.5 236.8L1083 236.9L1083.6 237L1084.2 237.1L1084.8 237.3L1085.4 237.4L1086 237.6L1086.7 237.7L1087.3 237.9L1087.9 238L1089.2 238.6L1089 238.2L1088.8 237.8L1088.6 237.5L1089 237.5L1089.3 237.5L1089.7 237.5L1090 237.5L1090.4 237.5L1090.7 237.5L1091 237.5L1091.3 237.5L1091.6 237.5L1091.9 237.5L1092.2 237.5L1092.4 237.4L1092.6 237.4L1092.7 237.3L1092.9 237.3L1093 237.2L1093.1 237.2L1093.3 237.1L1093.4 237.1L1093.5 237.1L1093.6 237L1092.9 236.7L1092.3 236.3L1091.6 236L1090.9 235.7L1090.2 235.5L1091.4 235.9L1092.7 236.3L1093.9 236.8L1095.1 237.2L1096.3 237.8L1097.5 238.3L1098.7 238.8L1099.9 239.4L1101 240L1102.2 240.6L1103.4 241.2L1104.5 241.9L1105.6 242.6L1106.7 243.3L1107.8 244L1108.9 244.7L1110 245.5L1111.1 246.3L1112.1 247.1L1113.2 247.9L1114.2 248.7L1115.2 249.6L1116.2 250.5L1116.2 250.7L1116.1 250.9L1116 251.2L1115.8 251.4L1115.7 251.6L1115.5 251.8L1115.4 252.1L1115.2 252.3L1115 252.5L1114.7 252.8L1114.5 253L1114.2 253.2L1113.9 253.5L1113.6 253.7L1113.2 253.9L1112.9 254.2L1112.5 254.4L1112.1 254.7L1111.7 254.9L1111.3 255.1L1110.7 255.1L1110 255.1L1109.4 255.1L1108.7 255.1L1108 255.1L1107.3 255.1L1106.6 255.1L1105.9 255.1L1105.1 255.1L1104.4 255.1L1103 254.2L1101.7 253.2L1101.1 253.5L1100.6 253.9L1100 254.2L1099.6 255.6L1100.3 255.4L1101 255.2L1101.6 254.9L1102 254.1L1102.4 253.2L1102.7 254.2L1102.9 255.1L1103.1 256.1L1104.2 256.7L1105.4 257.4L1106.6 258L1107.7 258.7L1106.8 258.7L1106 258.7L1105.1 258.7L1104.2 258.7L1103.3 258.7L1102.4 258.7L1101.6 258.7L1100.7 258.7L1099.9 258.7L1099.1 258.8L1098.2 259L1097.4 259.2L1096.4 259.4L1095.3 259.7L1094.1 259.7L1092.9 259.7L1092.5 261.3L1092.7 262.6L1092.8 264L1092 262.9L1091.2 261.8L1089.3 260.4L1088.3 258.7L1086.8 257.9L1085.4 257.1L1084 256.3L1082.7 255.5L1081.4 254.7L1080.5 255.6L1081.5 256.6L1082.6 257.6L1083.8 258.9L1085 260.2L1086.5 261.3L1087.6 260L1086.5 259.6L1085.4 259.2L1085.2 260.2L1084.9 261.3L1084.6 262.4L1085.1 262.4L1084.1 262.4L1083 262.4L1082 262.4L1081.2 261.1L1080.5 260L1079.8 258.8L1079.1 257.6L1077.3 255.8L1076.2 256.5L1075 257.1L1074 257L1073 256.9L1072 256.8L1071.6 258.1L1070.3 258.9L1069 259.7L1068.5 260.7L1068 261.8L1066.3 263.8L1065.2 263.9L1064.1 264L1063 264.1L1061.6 263.7L1060.4 263.6L1059.2 263.5L1058.1 263.5Z" fill="#bdbdbd" stroke="#4a4a4a" stroke-width="0.7" stroke-dasharray="1.2 0.8"/>
<path d="M1063.6 250.5L1064.5 250.4L1065.4 250.2L1066.3 250.1L1067.2 250L1068.1 249.9L1068.9 249.7L1069.8 249.6L1069.9 248.1L1068.5 247.5L1067.3 246.3L1067.2 245.3L1067 244.4L1065.8 243.6L1064.9 243.6L1064 244.7L1064.2 245.9L1065.1 246.3L1066.1 246.7L1064.8 247.7L1064.1 248.9L1065 249.1L1065.9 249.3L1064.8 249.9L1063.6 250.5Z" fill="#bdbdbd" stroke="#4a4a4a" stroke-width="0.7" stroke-dasharray="1.2 0.8"/>
<path d="M1063.4 248.6L1063.5 247.1L1062.6 246.1L1061.6 246.5L1060.5 246.9L1060.1 248L1059.8 249.1L1060.7 249.1L1061.7 249.1L1062.6 248.8L1063.4 248.6Z" fill="#bdbdbd" stroke="#4a4a4a" stroke-width="0.7" stroke-dasharray="1.2 0.8"/>
<path d="M1055.2 239.1L1055.9 238.9L1056.7 238.6L1057.2 238.6L1057.7 238.6L1058.2 238.6L1058.8 238.6L1059.3 238.6L1059.8 238.6L1060.2 239L1060.7 239.4L1060 239.6L1059.4 239.8L1058.7 240L1058 240.2L1057.3 240.4L1056.7 240.3L1056.2 240.2L1055.7 240.2L1055.2 240.1L1055.2 239.1Z" fill="#bdbdbd" stroke="#4a4a4a" stroke-width="0.7" stroke-dasharray="1.2 0.8"/>
<path d="M1104.6 270.1L1105.6 269.9L1106.7 269.7L1106.7 268.6L1106.8 267.4L1106.5 266.3L1106.2 265.1L1105.8 264L1104.9 264L1104 264L1103.1 264L1102.2 264L1101.2 264L1100.3 264L1099.2 263.8L1098.2 263.6L1097.1 263.5L1096.5 262.2L1095.9 260.9L1095.3 259.7L1096.2 259.6L1097.2 259.5L1098.1 259.3L1099 259.2L1099.9 259.1L1100.7 259L1101.6 258.9L1102.4 258.8L1103.3 258.7L1104.2 258.7L1105.1 258.7L1106 258.7L1106.8 258.7L1107.7 258.7L1108.8 259.1L1109.9 259.6L1110.9 260L1112 260.5L1113.1 260.9L1114.1 261.4L1115.2 261.9L1116.2 262.4L1117.2 263.5L1118.2 264.6L1119.2 265.7L1120.2 266.8L1121.2 268L1122.2 269.1L1123.1 270.3L1124.1 271.5L1125 272.7L1125.9 273.9L1126.8 275.1L1127.7 276.4L1128.5 277.6L1130 279.2L1131.4 280.8L1131.3 282.2L1131.1 283.6L1130.9 285L1130.7 286.5L1130.4 287.9L1129.7 288.3L1129 288.8L1128.3 289.2L1127.6 289.8L1126.8 290.3L1126 290.9L1125.2 291.4L1124.3 292L1123.4 292.5L1122.5 293.1L1121.5 293.6L1120.8 292.1L1120.1 290.6L1119.2 289.2L1118.4 287.9L1117.5 286.6L1116.7 285.3L1115.8 284L1114.9 282.7L1114 281.4L1113.1 280.1L1112.1 278.9L1111.2 277.6L1110.2 276.4L1109.1 275.1L1108 273.9L1106.6 272.7L1105.3 271.5L1104.6 270.1Z" fill="#bdbdbd" stroke="#4a4a4a" stroke-width="0.7" stroke-dasharray="1.2 0.8"/>
<path d="M1127 327.4L1127.1 329L1127.2 330.6L1127.2 332.1L1126.5 333.4L1125.8 334.8L1125.2 336.1L1124.6 337.4L1124 338.7L1123.4 340L1122.8 341.2L1122.2 342.5L1121.5 343.8L1120.2 344.4L1118.9 345L1119 343.6L1119 342.1L1118.9 340.6L1119.4 339.2L1119.9 337.7L1120.4 336.2L1120.8 334.8L1122.1 333.4L1123.3 332.1L1124.5 330.6L1125.8 329L1127 327.4Z" fill="#bdbdbd" stroke="#4a4a4a" stroke-width="0.7" stroke-dasharray="1.2 0.8"/>
<path d="M992.3 299.1L992.5 299.3L992.9 298L993.3 296.6L993.9 295.7L994.8 294.8L995.4 294L995.8 295.2L996.3 296.3L996.9 296.4L997.6 296.5L998.1 296.5L998.7 296.6L999.3 296.5L999.9 296.5L1000.4 298L1000.8 299.3L1001.4 300.3L1002 301.4L1002.6 302.7L1003.6 302.8L1004.5 302.9L1005.5 303.6L1006.5 304.4L1007.2 306.2L1008 308.5L1008.2 310.1L1008.4 311.7L1009.8 312.4L1010.7 312.4L1011.7 312.4L1013.2 314.4L1014.4 314.7L1015.7 314.9L1017 315L1018.3 315.1L1019.4 316.3L1020.6 317.5L1021.7 317.9L1022.8 318.3L1023.2 319.8L1023.7 321.3L1023.5 323.4L1022.7 324.7L1021.8 326.1L1021.2 327.4L1020.6 328.8L1020.6 330.4L1020.6 332.1L1020.7 333.6L1020.9 335.1L1020.8 336.6L1020.8 338L1020.6 339.3L1020.4 340.6L1019.8 341.7L1018.7 342L1017.6 342.2L1016.9 342.7L1016.1 343.1L1015.5 345L1015.8 346.6L1016.2 348.1L1016 349.9L1015.7 351.7L1015.8 352.9L1015.9 354L1016 355.4L1015.4 356.2L1014.5 355.9L1013.6 355.5L1012.8 355.2L1014.4 356.9L1015.6 358.5L1015.9 360L1015.4 360.2L1015 360.5L1014.5 360.7L1014.5 361.3L1015.6 362.6L1015.2 362.7L1014.7 362.8L1015.5 364.1L1016.3 364.7L1017.3 366.4L1017.3 367.1L1018.3 368.3L1020.3 369.7L1020.6 370.4L1021 371.1L1021.7 372L1022.9 373.1L1023.8 373.7L1025.3 374.9L1026.1 375.3L1026.9 375.7L1026.7 375.8L1026.5 375.9L1025.7 375.6L1025 375.3L1023.6 374.5L1022.3 373.7L1020.9 372.6L1019.5 371.5L1018.1 370.4L1016.8 369.2L1015.6 367.8L1014.7 366.9L1013.9 365.9L1013 364.9L1012.2 363.9L1011.3 362.8L1010.4 361.8L1009.4 360.4L1008.4 359.1L1007.6 357.7L1006.8 356.3L1006.2 355.2L1005.6 354L1004.9 352.9L1004.3 351.7L1003.6 350.5L1003 349.3L1002.4 348.1L1001.8 346.9L1001.4 345.6L1001 344.4L1000.5 343.1L1000 341.9L999.5 340.6L999 339.1L998.5 337.6L998 336.1L997 334.8L996.4 333.9L995.8 333L995.1 332.1L994.6 331.2L993.9 329.4L993.4 328.1L992.9 326.8L992.5 325.4L992.2 324L991.9 322.7L991.3 320.6L990.9 319.3L990.7 317.2L990.8 315.8L990.8 314L990.5 312.4L990.7 309.9L991 308.9L991.3 307.6L991.5 306.2L991.6 304.8L991.8 303.4L991.9 301.4L992.2 300L992.3 299.1Z" fill="#bdbdbd" stroke="#4a4a4a" stroke-width="0.7" stroke-dasharray="1.2 0.8"/>
<path d="M992.2 300L991.9 299.6L991.6 299.7L991.2 301L991.1 299.9L990.8 299.5L990.9 297.6L991.2 295.9L991.6 293.4L991.6 293L991.7 292.6L991.8 292L992.3 290.3L992.7 288.9L992.5 289.5L992.6 289.1L992.7 288.6L993 287.9L993.2 287.1L993.4 286.3L993.7 285.6L994.6 283.1L995.4 281.1L996.4 278.8L997 277.3L997.7 275.9L998.7 274.1L999.7 272.1L1000.9 270.1L1001.8 268.7L1002.5 267.6L1003.3 266.4L1002.2 268L1001.3 269.5L1000.4 270.9L999.6 272.3L998.9 273.7L998.1 275.1L997.2 276.9L996.6 278.3L996.5 278.4L997.6 276.2L998.6 274.2L999.4 272.7L1000.2 271.2L1001.6 268.9L1003.4 266.3L1004.7 264.4L1005.8 262.9L1006.3 262.3L1006.9 261.6L1007.9 260.3L1009 259L1010.4 257.5L1011.5 256.3L1012.7 255.1L1014.6 253.3L1016.1 251.8L1017.1 251L1018.1 250.1L1019.1 249.3L1020.5 248.2L1021.9 247.2L1023.9 245.8L1024.9 245.1L1025.8 244.5L1027.8 243.3L1029.2 242.5L1030.6 241.7L1032.2 240.8L1033.9 240L1035 239.5L1036.2 238.9L1037.3 238.4L1038.1 238.1L1039 237.7L1039.8 237.4L1040.6 237.1L1041.5 236.7L1042.1 236.5L1042.7 236.3L1043.3 236.1L1044.2 235.8L1045.1 235.6L1046 235.3L1046.5 235.1L1047.1 235L1047.7 234.8L1047.1 234.9L1047.2 234.9L1047.3 234.9L1047.6 234.8L1048 234.7L1048.3 234.6L1049 234.5L1049.6 234.3L1050.3 234.1L1051 234L1051.8 233.8L1052.5 233.6L1051.9 233.8L1051.2 233.9L1050.7 234L1050.5 234.1L1050.5 234.1L1051.2 233.9L1052 233.7L1052.8 233.6L1053.6 233.4L1054.7 233.2L1055.7 233L1056.7 232.9L1057.5 232.8L1058.3 232.7L1057.9 232.7L1057.4 232.8L1056.9 232.9L1056.4 232.9L1057.1 232.8L1057.9 232.7L1058.6 232.6L1059.3 232.5L1060.1 232.5L1061.1 232.3L1060.5 232.4L1060 232.5L1059.5 232.5L1059 232.6L1060.1 232.4L1061.1 232.3L1060.8 232.4L1060.4 232.4L1060.1 232.5L1059.8 232.5L1059.4 232.5L1059 232.6L1058.6 232.6L1058.3 232.7L1057.9 232.7L1057.4 232.8L1056.8 232.9L1056.3 233L1055.7 233L1055.1 233.1L1054.7 233.2L1054.2 233.3L1053.7 233.4L1053.3 233.5L1052.8 233.6L1052.4 233.7L1051.9 233.8L1051.5 233.9L1051 234L1050.6 234.1L1050.1 234.2L1049.6 234.3L1049.1 234.4L1048.6 234.5L1048.1 234.7L1048 234.7L1047.8 234.8L1047.7 234.8L1047.5 234.8L1047.4 234.9L1047.3 234.9L1046.9 235L1046.5 235.1L1046.1 235.2L1045.7 235.3L1045.4 235.5L1044.9 235.6L1044.5 235.7L1044.1 235.9L1043.7 236L1043.3 236.1L1042.9 236.3L1042.5 236.4L1042.3 236.5L1042 236.6L1041.7 236.7L1041.4 236.8L1041.2 236.9L1040.9 237L1040.7 237.1L1040.5 237.1L1040.3 237.2L1040.2 237.3L1040 237.3L1039.9 237.4L1039.8 237.4L1039.7 237.4L1039.6 237.5L1039.5 237.5L1039.4 237.6L1039.3 237.6L1039.2 237.6L1039.2 237.7L1039.1 237.7L1039.5 237.5L1039.9 237.4L1040.2 237.2L1039.9 237.4L1039.6 237.5L1039.2 237.6L1038.9 237.8L1038.8 237.8L1038.6 237.9L1038.5 237.9L1038.3 238L1038.2 238.1L1038.1 238.1L1038 238.2L1037.9 238.3L1037.2 238.6L1036.5 238.8L1035.9 239.1L1035.2 239.4L1034.5 239.7L1033.9 240L1033.3 240.3L1032.6 240.6L1032 240.9L1031.4 241.2L1030.2 241.9L1029.1 242.5L1027.9 243.2L1026.7 244L1025.5 244.7L1025.2 244.9L1024.9 245.1L1024.6 245.3L1024.4 245.5L1024.1 245.7L1023.8 245.9L1023.6 246.1L1022.5 247L1021.4 247.9L1020.8 248.5L1020.1 249.2L1021.3 248.3L1022.4 247.5L1023.9 246.5L1025.5 245.5L1026.8 244.6L1028.2 243.6L1029.6 242.8L1031 241.9L1032.9 240.9L1032.9 241L1033 241L1033.1 241.1L1033.2 241.1L1032.9 241.4L1032.7 241.6L1032.5 241.9L1031.3 242.8L1030.1 243.6L1031 243.3L1031.8 242.9L1032.7 242.6L1031.4 243.6L1030.5 244.6L1029.7 245.5L1029.6 245.9L1029.6 246.3L1029.6 246.7L1029.1 247.5L1028.6 248.3L1027.4 249L1026.1 249.6L1024.7 250.3L1024.2 250.3L1023.7 250.4L1023.2 250.4L1022.7 250.5L1022 250.7L1021.3 250.9L1019.8 251.8L1020.2 251.8L1020.6 251.8L1021.1 251.8L1019.9 253.2L1019.6 253.7L1019.7 254.1L1019.8 254.5L1019.9 254.8L1019 255.3L1018.1 255.7L1017.2 256.2L1016.4 256.6L1016.9 255.3L1016.2 255.7L1015.5 256.1L1014.8 256.4L1013.1 258.1L1013.2 258.3L1012.2 258.9L1011.5 259.2L1010.8 259.6L1009.8 260.7L1009 261.5L1007.3 263.5L1006.2 265.1L1005.3 266.1L1004.7 266.6L1004.2 267.1L1002.9 268.6L1001.6 270.3L1000.5 272.1L999.7 273.9L998.9 275.8L998 277.4L997.9 277.4L998.5 275.8L999.3 273.9L1000.3 272.1L1000.5 271.5L1000.2 271.7L1000.2 271.4L1000.4 271.1L1000.3 271.2L1000.2 271.3L999.4 272.7L999.6 272.3L999.8 272.1L999.9 271.8L999.6 272.3L998.9 273.7L997.9 275.5L997.3 276.8L996.7 278L996.2 279.3L995.6 280.5L994.8 282.5L994.1 284.5L993.5 286.3L993.6 286L993.6 285.8L993.9 284.9L994.7 282.7L995 282L995.1 282L994.6 283.3L994.1 284.6L993.6 285.9L993.1 287.7L992.5 289.5L992.6 289.4L992.7 289.4L992.7 289.6L992.8 289.9L992.6 290.8L992.2 292.4L991.9 293.9L991.4 295.9L991.2 298.4L991.6 298.5L992 298L992.3 299.1L992.2 300Z" fill="#bdbdbd" stroke="#4a4a4a" stroke-width="0.7" stroke-dasharray="1.2 0.8"/>
<path d="M1068.5 390L1068.2 390L1067.9 390L1067.6 390L1067.3 390L1067 390L1066.7 390L1066.4 390L1066.1 390L1065.9 390L1065.6 389.9L1065.3 389.9L1065 389.9L1064.7 389.9L1064.4 389.9L1064.1 389.9L1063.8 389.9L1063.5 389.8L1063.1 389.8L1062.8 389.8L1062.5 389.8L1062.2 389.7L1061.9 389.7L1061.5 389.7L1061.2 389.7L1060.8 389.6L1060.4 389.6L1060 389.5L1059.6 389.5L1059.2 389.4L1058.7 389.4L1058.4 389.3L1058 389.3L1057.6 389.2L1057.3 389.2L1056.9 389.1L1056.5 389.1L1056.2 389L1055.8 389L1055.5 388.9L1055.1 388.9L1054.7 388.8L1054.4 388.7L1054 388.7L1053.7 388.6L1053.3 388.5L1053 388.5L1052.7 388.4L1052.4 388.3L1052.1 388.3L1051.9 388.2L1051.5 388.2L1051.2 388.1L1050.9 388L1050.5 387.9L1050.2 387.9L1049.9 387.8L1049.7 387.7L1049.4 387.7L1049.1 387.6L1048.9 387.5L1048.8 387.5L1048.8 387.5L1048.7 387.5L1048.7 387.5L1048.6 387.5L1048.6 387.5L1048.6 387.4L1048.6 387.4L1048.6 387.4L1048.6 387.4L1048.5 387.4L1048.5 387.4L1048.5 387.4L1048.5 387.4L1048.4 387.4L1048 387.3L1047.6 387.2L1047.2 387.1L1046.8 387L1046.4 386.8L1046.1 386.8L1045.9 386.7L1045.7 386.6L1045.4 386.6L1045.2 386.5L1045.2 386.5L1045.2 386.5L1045.2 386.5L1045.1 386.5L1045.1 386.5L1045.2 386.5L1045.4 386.5L1045.5 386.6L1045.6 386.6L1045.8 386.6L1045.8 386.6L1045.8 386.6L1045.9 386.6L1045.9 386.6L1046 386.6L1045.8 386.5L1045.5 386.4L1045.3 386.3L1045.1 386.2L1044.9 386.1L1044.4 385.9L1043.9 385.7L1043.4 385.5L1043.1 385.3L1042.8 385.1L1042.5 384.9L1042.3 384.8L1040.7 384L1040 383.6L1039.4 383.2L1039.1 382.9L1038.8 382.6L1038.5 382.3L1038.4 382.1L1038.4 381.9L1038.4 381.8L1038.4 381.6L1039.2 381.9L1039.3 382.1L1039.5 382.4L1039.6 382.6L1040.1 383L1040.7 383.4L1041.7 384L1042.7 384.5L1044.2 385.1L1045.8 385.7L1047.3 386.2L1048.9 386.7L1050.1 387.1L1051.4 387.5L1052 387.6L1052.6 387.8L1053.3 387.9L1053.9 388L1054.5 388.1L1054.7 388.1L1055 388.2L1055.2 388.2L1055.4 388.2L1055.7 388.2L1055.9 388.2L1056.1 388.2L1056.4 388.2L1056.6 388.3L1056.9 388.3L1057 388.3L1057.2 388.2L1057.4 388.2L1057.5 388.2L1057.7 388.2L1057.9 388.2L1058.1 388.2L1058.3 388.2L1058.5 388.1L1058.7 388.1L1058.8 388.1L1058.9 388L1059 387.9L1059.1 387.9L1059.3 387.8L1059.4 387.8L1059.6 387.7L1059.8 387.6L1059.9 387.6L1060.1 387.5L1060.2 387.3L1060.4 387.2L1060.5 387.1L1060.6 386.9L1060.8 386.7L1061.1 386.7L1061.4 386.6L1061.7 386.5L1062 386.4L1062.4 386.3L1062.7 386.2L1063 386.1L1063.4 386L1063.7 385.9L1064.1 385.8L1064.5 385.8L1065 385.8L1065.4 385.7L1065.8 385.7L1066.3 385.7L1066.7 385.6L1067.1 385.5L1067.6 385.4L1068 385.3L1068.5 385.2L1069 385.2L1069.4 385.2L1069.9 385.2L1070.4 385.2L1070.9 385.2L1071.3 385.2L1071.8 385.2L1072.3 385.2L1072.7 385.2L1073.2 385.2L1073.7 385.2L1074.1 385.2L1074.6 385.2L1075 385.2L1075.5 385.2L1075.9 385.2L1076.4 385.2L1076.8 385.2L1077.3 385.2L1077.7 385.2L1078.2 385.2L1078.7 385.2L1079.1 385.2L1079.6 385.1L1080.1 385.1L1080.5 385.1L1081 385.1L1081.4 385L1081.9 385L1082.3 385L1082.8 384.9L1083.3 384.9L1083.8 384.9L1084.3 384.8L1084.7 384.8L1085.2 384.7L1085.6 384.7L1086 384.7L1086.4 384.7L1086.9 384.7L1087.5 384.5L1088.1 384.4L1088.7 384.3L1089.3 384.1L1089.9 384L1090.3 383.9L1090.8 383.9L1091.3 383.8L1091.7 383.8L1092.1 383.7L1092.5 383.7L1092.9 383.7L1093.3 383.7L1093.6 383.6L1094 383.6L1094.2 383.7L1094.4 383.7L1094.6 383.8L1094.7 383.8L1094.9 383.9L1095.1 383.9L1095.3 383.9L1095.5 384L1095.6 384L1095.8 384L1095.7 384.2L1095.6 384.3L1095.4 384.5L1095.3 384.6L1095.1 384.8L1093.3 385.5L1093.7 385.4L1094.1 385.3L1094.5 385.2L1094.8 385.1L1095.2 385L1095.8 384.8L1096.3 384.7L1096.8 384.5L1097.4 384.3L1097.9 384.1L1098.2 384L1098.6 383.9L1098.9 383.8L1099.2 383.7L1099.5 383.6L1099.6 383.6L1099.7 383.6L1099.8 383.5L1099.8 383.5L1099.9 383.5L1099.9 383.5L1099.9 383.5L1099.9 383.5L1099.9 383.5L1099.9 383.5L1099.9 383.5L1099.9 383.5L1099.9 383.5L1099.9 383.5L1099.8 383.5L1099.8 383.5L1099.8 383.5L1099.8 383.5L1099.8 383.6L1099.7 383.6L1099.5 383.6L1099.3 383.7L1099.2 383.8L1099 383.9L1098.7 384L1098.4 384.1L1098.1 384.3L1097.7 384.4L1097.4 384.5L1097 384.7L1096.8 384.7L1096.7 384.8L1096.5 384.9L1096.3 384.9L1096.1 385L1095.9 385.1L1095.6 385.2L1095.4 385.3L1095.2 385.4L1094.9 385.5L1094.7 385.5L1094.4 385.6L1094.2 385.7L1093.9 385.8L1093.7 385.9L1093.4 386L1093 386.1L1092.7 386.2L1092.4 386.3L1092 386.4L1091.5 386.6L1091 386.7L1090.5 386.9L1090 387L1089.5 387.2L1088.9 387.3L1088.4 387.5L1087.9 387.6L1087.3 387.7L1086.8 387.9L1086.2 388L1085.6 388.1L1085 388.3L1084.4 388.4L1083.8 388.5L1083.2 388.6L1082.7 388.7L1082.1 388.8L1081.6 388.9L1081 389L1080.5 389.1L1079.9 389.2L1079.4 389.3L1078.8 389.3L1078.3 389.4L1077.7 389.5L1077.2 389.5L1076.6 389.6L1076.1 389.6L1075.6 389.7L1075.1 389.7L1074.6 389.8L1074.1 389.8L1073.6 389.8L1073.1 389.9L1072.8 389.9L1072.4 389.9L1072.7 389.9L1073 389.9L1073.2 389.9L1073.4 389.8L1073.6 389.8L1073.2 389.9L1072.8 389.9L1072.6 389.9L1072.3 389.9L1072 389.9L1071.7 389.9L1071.4 389.9L1071.1 390L1070.9 390L1070.6 390L1070.3 390L1070 390L1069.7 390L1069.4 390L1069.1 390L1068.8 390L1068.5 390Z" fill="#bdbdbd" stroke="#4a4a4a" stroke-width="0.7" stroke-dasharray="1.2 0.8"/>
<path d="M1056.6 271.5L1057.8 271.5L1059 271.5L1060.2 271.5L1061.3 271.5L1062.5 271.5L1063.7 271.5L1064.9 271.5L1066.1 271.5L1067.3 271.5L1068.5 271.5L1069.7 271.5L1070.9 271.5L1072.1 271.5L1073.3 271.5L1074.5 271.5L1075.7 271.5L1076.8 271.5L1078 271.5L1079.2 271.5L1080.4 271.5L1081.6 271.5L1082.7 271.5L1083.9 271.5L1085.1 271.5L1086.2 271.5L1087.4 271.5L1088.5 271.5L1089.6 271.5L1090.8 271.5L1091.9 271.5L1093 271.5L1094.1 271.5L1095.2 271.5L1096.3 271.5L1097.4 271.5L1098.5 271.5L1099.6 271.5L1100.6 271.5L1101.7 271.5L1102.7 271.5L1103.3 272.7L1103.8 273.9L1104.3 275.1L1104.9 276.4L1105.4 277.6L1105.9 278.9L1106.4 280.1L1106.9 281.4L1107.4 282.7L1107.8 284L1106.9 285.1L1106 286.2L1105 287.2L1104 288.3L1103 289.4L1102 290.6L1100.9 291.7L1099.8 292.8L1098.6 293.9L1097.5 295L1096.3 296.2L1095.1 297.3L1093.8 297.1L1092.5 296.8L1091.2 296.6L1089.9 296.4L1088.6 296.2L1087.3 295.9L1085.9 295.7L1084.6 295.5L1083.3 295.2L1081.9 295L1080.6 294.8L1079.3 294.6L1077.9 294.4L1076.6 294.1L1075.2 293.9L1073.9 293.7L1072.5 293.5L1071.2 293.2L1069.8 293L1068.5 292.8L1067.2 292.6L1065.8 292.3L1064.5 292.1L1063.2 291.9L1061.8 291.7L1060.5 291.4L1059.2 291.2L1057.9 291L1056.6 290.8L1055.2 290.6L1055.3 289.2L1055.4 287.9L1055.5 286.6L1055.5 285.3L1055.6 284L1055.7 282.7L1055.8 281.4L1055.9 280.1L1056 278.9L1056.1 277.6L1056.2 276.4L1056.3 275.1L1056.4 273.9L1056.5 272.7L1056.6 271.5Z" fill="#cacaca" opacity="0.6"/>
<g fill="none" stroke="#b8b8b8" stroke-width="3" opacity="0.5"><path d="M1008.5 271q30 -25 55 -30M998.5 321q25 -5 45 -35M1018.5 366q30 5 40 -20M1113.5 361q20 -10 25 -40"/></g>
<path d="M1046.9 282.7L1048.2 282.7L1049.4 282.7L1050.7 282.7L1051.9 282.7L1053.2 282.7L1054.4 282.7L1055.7 282.7L1057 282.7L1058.2 282.7L1059.3 281.4L1060.3 280.1L1061.3 278.9L1062.3 277.6L1063.5 278.6L1064.7 279.5L1066 280.4L1067.2 281.4L1068.5 282.4L1069.8 283.3L1071.1 284.3L1072.4 285.3L1073.7 284.7L1075 284.1L1076.2 283.5L1077.5 283L1078.7 282.4L1080 281.8L1081.2 281.3L1082.4 280.7L1083.6 280.1L1084.9 280.4L1086.2 280.8L1087.4 281.1L1088.7 281.4L1090 281.7L1091.2 282L1092.5 282.4L1093.7 282.7L1095 283L1096.2 283.3L1097.5 283.7L1098.7 284L1099.1 282.7L1099.5 281.4L1100.6 281.4L1101.8 281.4L1102.9 281.4L1104 281.4L1105.1 281.4L1106.2 281.4L1107.3 281.4L1108.4 281.4L1109.5 281.4" fill="none" stroke="#555" stroke-width="0.6" stroke-dasharray="1 1"/>
<path d="M1072.4 285.3L1072.7 286.6L1072.9 287.9L1073.1 289.2L1073.4 290.6L1073.6 291.9L1073.9 293.2L1075.2 293.2L1076.5 293.2L1077.9 293.2L1079.2 293.2L1080.5 293.2L1081.9 293.2L1083.2 293.2L1084.5 293.2L1085.8 293.2L1087.1 293.2L1088.4 293.2L1088.5 294.6L1088.6 295.9L1088.6 297.3L1088.7 298.6L1088.7 300L1090.1 300.5L1091.4 300.9L1092.7 301.4L1094 301.8L1095.4 302.3L1096.7 302.7L1097.9 303.2L1099.2 303.7L1100.5 304.1L1101.8 304.1L1103 304.1L1104.2 304.1L1105.4 304.1L1106.7 304.1L1107.8 304.1L1109 304.1L1110.2 304.1L1111.4 304.1L1112.5 304.1L1113.6 304.1" fill="none" stroke="#555" stroke-width="0.6" stroke-dasharray="1 1"/>
<path d="M1052.4 294.6L1053.7 295L1055.1 295.3L1056.4 295.7L1057.7 296.1L1059 296.5L1060.4 296.9L1061.7 297.3L1063.1 298L1064.4 298.6L1065.8 299.3L1067.1 300L1068.5 300.7L1069.9 301.4L1071.2 302.1L1072.6 302.7" fill="none" stroke="#555" stroke-width="0.6" stroke-dasharray="1 1"/>
<path d="M1083.6 280.1L1084.1 281.4L1084.6 282.7L1085.1 284L1085.6 285.3L1086 286.6L1086.5 287.9L1087 289.2L1087.5 290.6L1088 291.9L1088.4 293.2" fill="none" stroke="#555" stroke-width="0.6" stroke-dasharray="1 1"/>
<path d="M1098.7 284L1098.9 285.3L1099.1 286.6L1099.2 287.9L1099.4 289.2L1099.5 290.6L1099.7 291.9L1099.8 293.2L1099.9 294.6L1100 295.9L1100.1 297.3L1100.2 298.6L1100.3 300L1100.4 301.4L1100.5 302.7L1100.5 304.1" fill="none" stroke="#555" stroke-width="0.6" stroke-dasharray="1 1"/>
<path d="M1080.9 311L1082.2 311.8L1083.6 312.5L1084.9 313.3L1086.3 314.1L1087.6 314.8L1088.9 315.6L1090.2 316.4L1091.5 317.1L1092.8 317.9L1094.1 318.5L1095.4 319.1L1096.6 319.8L1097.9 320.4L1099.1 321L1100.3 321.6L1101.5 322.2L1102.7 322.9L1103.9 323.5L1105.1 324.1L1106.2 324.7L1107.4 324.7L1108.6 324.7L1109.7 324.7L1110.9 324.7L1112 324.7L1113.1 324.7L1114.2 324.7L1115.3 324.7L1116.4 324.7L1117.5 324.7L1118.5 324.7" fill="none" stroke="#555" stroke-width="0.6" stroke-dasharray="1 1"/>
<path d="M1084.2 334.1L1085.5 334.1L1086.8 334.1L1088.1 334.1L1089.3 334.1L1090.6 334.1L1091.8 334.1L1093.1 334.1L1094.3 334.1L1095.6 334.1L1096.8 334.1L1098 334.1L1099.2 334.1L1100.4 334.1L1101.6 334.1L1102.8 334.1L1104 334.1L1105.1 334.1L1106.3 334.1L1107.4 334.1L1108.5 334.1L1109.6 334.1" fill="none" stroke="#555" stroke-width="0.6" stroke-dasharray="1 1"/>
<path d="M1086.7 346.9L1088 346.5L1089.2 346.1L1090.4 345.8L1091.7 345.4L1092.9 345L1094.1 344.6L1095.3 344.3L1096.6 343.9L1097.8 343.5L1099 343.1L1100.2 342.8L1101.4 342.4L1102.6 342L1103.8 341.7L1105 341.3L1106.1 341L1107.3 340.6" fill="none" stroke="#555" stroke-width="0.6" stroke-dasharray="1 1"/>
<path d="M1088.9 273.9L1090 273.6L1091.1 273.3L1092.2 273L1093.3 272.7L1094.3 272.4L1095.4 272.1L1096.4 271.8L1097.4 271.5" fill="none" stroke="#555" stroke-width="0.6" stroke-dasharray="1 1"/>
<path d="M1062.9 265.7L1063.9 266.5L1065.1 267.4L1066.2 268.3L1067.3 269.1L1068.5 269.4L1069.7 269.6L1070.9 269.8L1072 270.1L1073.2 270.3L1074.4 270.5L1075.6 270.8L1076.8 271L1078 271.3L1079.2 271.5L1079.1 270.3L1079 269.1L1078.9 268L1078.7 266.8L1078.6 265.7L1078.5 264.6" fill="none" stroke="#555" stroke-width="0.6" stroke-dasharray="1 1"/>
<path d="M1068.5 232V390M989.5 311H1147.5" stroke="#e8e8e8" stroke-width="0.8" opacity="0.8"/>
<path d="M996 279.6L996.1 279.6L996.4 279.6L996.9 279.6L997.6 279.6L998.5 279.6L999.6 279.6L1000.8 279.6L1002.3 279.6L1003.9 279.6L1005.7 279.6L1007.7 279.6L1009.9 279.6L1012.2 279.6L1014.6 279.6L1017.2 279.6L1020 279.6L1022.9 279.6L1025.9 279.6L1029 279.6L1032.3 279.6L1035.6 279.6L1039 279.6L1042.5 279.6L1046.1 279.6L1049.7 279.6L1053.4 279.6L1057.2 279.6L1060.9 279.6L1064.7 279.6L1068.5 279.6L1072.3 279.6L1076.1 279.6L1079.8 279.6L1083.6 279.6L1087.3 279.6L1090.9 279.6L1094.5 279.6L1098 279.6L1101.4 279.6L1104.7 279.6L1108 279.6L1111.1 279.6L1114.1 279.6L1117 279.6L1119.8 279.6L1122.4 279.6L1124.8 279.6L1127.1 279.6L1129.3 279.6L1131.3 279.6L1133.1 279.6L1134.7 279.6L1136.2 279.6L1137.4 279.6L1138.5 279.6L1139.4 279.6L1140.1 279.6L1140.6 279.6L1140.9 279.6L1141 279.6" fill="none" stroke="#eee" stroke-width="0.8" stroke-dasharray="1.5 1.5" opacity="0.8"/>
<path d="M996 342.4L996.1 342.4L996.4 342.4L996.9 342.4L997.6 342.4L998.5 342.4L999.6 342.4L1000.8 342.4L1002.3 342.4L1003.9 342.4L1005.7 342.4L1007.7 342.4L1009.9 342.4L1012.2 342.4L1014.6 342.4L1017.2 342.4L1020 342.4L1022.9 342.4L1025.9 342.4L1029 342.4L1032.3 342.4L1035.6 342.4L1039 342.4L1042.5 342.4L1046.1 342.4L1049.7 342.4L1053.4 342.4L1057.2 342.4L1060.9 342.4L1064.7 342.4L1068.5 342.4L1072.3 342.4L1076.1 342.4L1079.8 342.4L1083.6 342.4L1087.3 342.4L1090.9 342.4L1094.5 342.4L1098 342.4L1101.4 342.4L1104.7 342.4L1108 342.4L1111.1 342.4L1114.1 342.4L1117 342.4L1119.8 342.4L1122.4 342.4L1124.8 342.4L1127.1 342.4L1129.3 342.4L1131.3 342.4L1133.1 342.4L1134.7 342.4L1136.2 342.4L1137.4 342.4L1138.5 342.4L1139.4 342.4L1140.1 342.4L1140.6 342.4L1140.9 342.4L1141 342.4" fill="none" stroke="#eee" stroke-width="0.8" stroke-dasharray="1.5 1.5" opacity="0.8"/>
<path d="M1037.1 238.5L1037.1 238.5L1037.2 238.5L1037.5 238.5L1037.8 238.5L1038.1 238.5L1038.6 238.5L1039.2 238.5L1039.8 238.5L1040.5 238.5L1041.3 238.5L1042.1 238.5L1043.1 238.5L1044.1 238.5L1045.1 238.5L1046.3 238.5L1047.5 238.5L1048.7 238.5L1050 238.5L1051.4 238.5L1052.8 238.5L1054.2 238.5L1055.7 238.5L1057.2 238.5L1058.8 238.5L1060.4 238.5L1062 238.5L1063.6 238.5L1065.2 238.5L1066.9 238.5L1068.5 238.5L1070.1 238.5L1071.8 238.5L1073.4 238.5L1075 238.5L1076.6 238.5L1078.2 238.5L1079.8 238.5L1081.3 238.5L1082.8 238.5L1084.2 238.5L1085.6 238.5L1087 238.5L1088.3 238.5L1089.5 238.5L1090.7 238.5L1091.9 238.5L1092.9 238.5L1093.9 238.5L1094.9 238.5L1095.7 238.5L1096.5 238.5L1097.2 238.5L1097.8 238.5L1098.4 238.5L1098.9 238.5L1099.2 238.5L1099.5 238.5L1099.8 238.5L1099.9 238.5L1099.9 238.5" fill="none" stroke="#eee" stroke-width="0.8" stroke-dasharray="1.5 1.5" opacity="0.8"/>
<path d="M1037.1 383.5L1037.1 383.5L1037.2 383.5L1037.5 383.5L1037.8 383.5L1038.1 383.5L1038.6 383.5L1039.2 383.5L1039.8 383.5L1040.5 383.5L1041.3 383.5L1042.1 383.5L1043.1 383.5L1044.1 383.5L1045.1 383.5L1046.3 383.5L1047.5 383.5L1048.7 383.5L1050 383.5L1051.4 383.5L1052.8 383.5L1054.2 383.5L1055.7 383.5L1057.2 383.5L1058.8 383.5L1060.4 383.5L1062 383.5L1063.6 383.5L1065.2 383.5L1066.9 383.5L1068.5 383.5L1070.1 383.5L1071.8 383.5L1073.4 383.5L1075 383.5L1076.6 383.5L1078.2 383.5L1079.8 383.5L1081.3 383.5L1082.8 383.5L1084.2 383.5L1085.6 383.5L1087 383.5L1088.3 383.5L1089.5 383.5L1090.7 383.5L1091.9 383.5L1092.9 383.5L1093.9 383.5L1094.9 383.5L1095.7 383.5L1096.5 383.5L1097.2 383.5L1097.8 383.5L1098.4 383.5L1098.9 383.5L1099.2 383.5L1099.5 383.5L1099.8 383.5L1099.9 383.5L1099.9 383.5" fill="none" stroke="#eee" stroke-width="0.8" stroke-dasharray="1.5 1.5" opacity="0.8"/>
<circle cx="1068.5" cy="311" r="78.2" fill="none" stroke="#e8e8e8" stroke-width="1.6" opacity="0.75"/>
</g>
<text x="1071" y="236" font-family="Liberation Sans" font-size="9" font-weight="bold" fill="#e8e8e8" textLength="58" lengthAdjust="spacingAndGlyphs" >Arctic Circle</text>
<text x="1110" y="261.5" font-family="Liberation Sans" font-weight="bold" fill="#4a4a4a" textLength="30" lengthAdjust="spacingAndGlyphs" opacity="0.9"><tspan font-size="13">A</tspan><tspan font-size="9.5">SIA</tspan></text>
<text x="1071" y="278" font-family="Liberation Sans" font-size="9" font-weight="bold" fill="#e8e8e8" textLength="78" lengthAdjust="spacingAndGlyphs" opacity="0.75">Tropic of Cancer</text>
<text x="1079.5" y="308.5" font-family="Liberation Sans" font-weight="bold" fill="#4a4a4a" textLength="45.5" lengthAdjust="spacingAndGlyphs" ><tspan font-size="13">A</tspan><tspan font-size="9.5">FRICA</tspan></text>
<text x="1082" y="308" font-family="Liberation Sans" font-size="9" font-weight="bold" fill="#e8e8e8" textLength="65" lengthAdjust="spacingAndGlyphs" opacity="0.6">Prime Meridian</text>
<text x="951" y="336.7" font-family="Liberation Sans" font-weight="bold" fill="#4a4a4a" textLength="108.6" lengthAdjust="spacingAndGlyphs" ><tspan font-size="13">S</tspan><tspan font-size="9.5">OUTH</tspan><tspan font-size="13"> A</tspan><tspan font-size="9.5">MERICA</tspan></text>
<text x="1071" y="341.6" font-family="Liberation Sans" font-size="9" font-weight="bold" fill="#e8e8e8" textLength="92" lengthAdjust="spacingAndGlyphs" opacity="0.8">Tropic of Capricorn</text>
<text x="1071" y="382.6" font-family="Liberation Sans" font-size="9" font-weight="bold" fill="#e8e8e8" textLength="73.5" lengthAdjust="spacingAndGlyphs" >Antarctic Circle</text>
<text x="1036.7" y="394.7" font-family="Liberation Sans" font-weight="bold" fill="#555" textLength="80" lengthAdjust="spacingAndGlyphs" opacity="0.9"><tspan font-size="13">A</tspan><tspan font-size="9.5">NTARCTICA</tspan></text>
<g fill="#222" stroke="#ddd" stroke-width="0.6"><rect x="1059.5" y="309.5" width="6" height="3" rx="1.5"/><rect x="1071.5" y="309.5" width="6" height="3" rx="1.5"/><rect x="1067.0" y="302" width="3" height="6" rx="1.5"/><rect x="1067.0" y="314" width="3" height="6" rx="1.5"/></g>
</svg>
<div style='position:absolute;left:1181.7px;top:144.8px;width:17.3px;height:69.5px;background:#3c3c3c;border-radius:3px'></div>
<div style='position:absolute;left:956.5px;top:245px;width:1px;height:1px;background:#6a6a6a'></div>
<div style='position:absolute;left:956.5px;top:248px;width:1px;height:1px;background:#6a6a6a'></div>
<div style='position:absolute;left:956.5px;top:251px;width:1px;height:1px;background:#6a6a6a'></div>
<div style='position:absolute;left:956.5px;top:462px;width:1px;height:1px;background:#6a6a6a'></div>
<div style='position:absolute;left:956.5px;top:465px;width:1px;height:1px;background:#6a6a6a'></div>
<div style='position:absolute;left:956.5px;top:468px;width:1px;height:1px;background:#6a6a6a'></div>
<div style='position:absolute;left:569.25px;top:635px;width:66.25px;height:10px;background:#eef23a'></div>
<div style='position:absolute;left:661.75px;top:635px;width:66.25px;height:10px;background:#eef23a'></div>
<div style='position:absolute;left:740px;top:632px;width:88px;height:15px;background:#2a2a2a;border:1px solid #484848;box-sizing:border-box;border-radius:3px'></div>
<div style='position:absolute;left:1036.7px;top:631px;width:71.8px;height:15.5px;background:#1f1f1f;border-radius:2px'></div>
<div style='position:absolute;left:1059.6px;top:614px;width:93.4px;height:13.8px;background:linear-gradient(#383838,#323232);border:1px solid #262626;box-sizing:border-box;border-radius:3px;box-shadow:inset 0 1px 0 #404040'></div>
<svg width="10" height="80" viewBox="0 0 10 80" style="position:absolute;left:0px;top:0px;overflow:visible"><rect x="1" y="54" width="1" height="1" fill="#555"/><rect x="1" y="57" width="1" height="1" fill="#555"/><rect x="1" y="60" width="1" height="1" fill="#555"/><rect x="1" y="63" width="1" height="1" fill="#555"/><rect x="1" y="66" width="1" height="1" fill="#555"/><rect x="1" y="69" width="1" height="1" fill="#555"/><rect x="1" y="72" width="1" height="1" fill="#555"/><rect x="1" y="75" width="1" height="1" fill="#555"/><rect x="4" y="54" width="1" height="1" fill="#555"/><rect x="4" y="57" width="1" height="1" fill="#555"/><rect x="4" y="60" width="1" height="1" fill="#555"/><rect x="4" y="63" width="1" height="1" fill="#555"/><rect x="4" y="66" width="1" height="1" fill="#555"/><rect x="4" y="69" width="1" height="1" fill="#555"/><rect x="4" y="72" width="1" height="1" fill="#555"/><rect x="4" y="75" width="1" height="1" fill="#555"/><rect x="7" y="54" width="1" height="1" fill="#555"/><rect x="7" y="57" width="1" height="1" fill="#555"/><rect x="7" y="60" width="1" height="1" fill="#555"/><rect x="7" y="63" width="1" height="1" fill="#555"/><rect x="7" y="66" width="1" height="1" fill="#555"/><rect x="7" y="69" width="1" height="1" fill="#555"/><rect x="7" y="72" width="1" height="1" fill="#555"/><rect x="7" y="75" width="1" height="1" fill="#555"/></svg>
<svg width="16" height="19" viewBox="0 0 16 19" style="position:absolute;left:10px;top:54.5px;overflow:visible"><path d="M0.5 0.5H15V12L11 18H0.5Z" fill="#bdbdbd" stroke="#222" stroke-width="1"/><path d="M15 12H11V18Z" fill="#e8e8e8" stroke="#333" stroke-width="0.6"/><path d="M5 5q3-3 6 0t-3 5v2" fill="none" stroke="#a8a8a8" stroke-width="1.5"/></svg>
<div style='position:absolute;left:74.5px;top:54px;width:1px;height:20px;background:#2a2a2a;box-shadow:1px 0 0 #3c3c3c'></div>
<svg width="15" height="16" viewBox="0 0 15 16" style="position:absolute;left:83px;top:56px;overflow:visible"><circle cx="7.5" cy="7.8" r="7.3" fill="#5e5e5e" stroke="#444" stroke-width="0.6"/><path d="M4.3 4.6L10.7 11M10.7 4.6L4.3 11" stroke="#a8a8a8" stroke-width="2.4" stroke-linecap="round"/></svg>
<svg width="17" height="17" viewBox="0 0 17 17" style="position:absolute;left:142.8px;top:54.6px;overflow:visible"><defs><radialGradient id="pz" cx="0.5" cy="0.4" r="0.6"><stop offset="0" stop-color="#3a3a3a"/><stop offset="1" stop-color="#111"/></radialGradient></defs><circle cx="8.2" cy="8.3" r="7.8" fill="url(#pz)" stroke="#777" stroke-width="0.8"/><rect x="5" y="4" width="2.2" height="8.5" rx="1" fill="#9a9a9a"/><rect x="9.2" y="4" width="2.2" height="8.5" rx="1" fill="#9a9a9a"/></svg>
<div style='position:absolute;left:198.3px;top:54px;width:1px;height:20px;background:#2a2a2a;box-shadow:1px 0 0 #3c3c3c'></div>
<svg width="19" height="17" viewBox="0 0 19 17" style="position:absolute;left:207.9px;top:55.5px;overflow:visible"><rect x="0.5" y="0.5" width="17.5" height="15.5" fill="#f4f4f4" stroke="#1a1a1a" stroke-width="1"/><rect x="1.5" y="1.5" width="15.5" height="2.3" fill="#bdbdbd"/><path d="M2 6h3.2v2.2h-3.2z" fill="#1a5ee8"/><path d="M2 6l1 1h2.2l0-1z" fill="#7fb0ff"/><path d="M7.5 6h3.2v2.2h-3.2z" fill="#1a5ee8"/><path d="M7.5 6l1 1h2.2l0-1z" fill="#7fb0ff"/><path d="M13 6h3.2v2.2h-3.2z" fill="#1a5ee8"/><path d="M13 6l1 1h2.2l0-1z" fill="#7fb0ff"/><path d="M2 10.8h3.2v2.2h-3.2z" fill="#1a5ee8"/><path d="M2 10.8l1 1h2.2l0-1z" fill="#7fb0ff"/><path d="M7.5 10.8h3.2v2.2h-3.2z" fill="#1a5ee8"/><path d="M7.5 10.8l1 1h2.2l0-1z" fill="#7fb0ff"/></svg>
<svg width="14" height="16" viewBox="0 0 14 16" style="position:absolute;left:290px;top:55.3px;overflow:visible"><rect x="0.5" y="0.5" width="13" height="15" fill="#f6f6f6" stroke="#222" stroke-width="0.8"/><rect x="1.5" y="1.5" width="11" height="9" fill="#5a9a30"/><circle cx="6.3" cy="5.6" r="3.6" fill="#e8e020"/><circle cx="6.3" cy="5.6" r="1.5" fill="#111"/><circle cx="9" cy="10" r="2.6" fill="#dfe8f0" stroke="#8aa" stroke-width="0.7"/><path d="M10.8 12l2.2 2.5" stroke="#c8a060" stroke-width="1.2"/></svg>
<svg width="20" height="19" viewBox="0 0 20 19" style="position:absolute;left:374.2px;top:52.5px;overflow:visible"><defs><linearGradient id="stg" x1="0" y1="0" x2="0" y2="1"><stop offset="0" stop-color="#f6a860"/><stop offset="1" stop-color="#d85a08"/></linearGradient></defs><path d="M9.7 0.8L12.4 6.6 18.8 7.2 14 11.5 15.5 17.8 9.7 14.5 3.9 17.8 5.4 11.5 0.6 7.2 7 6.6Z" fill="url(#stg)" stroke="#8a4010" stroke-width="0.6" stroke-linejoin="round"/></svg>
<svg width="6" height="4" viewBox="0 0 6 4" style="position:absolute;left:449px;top:68px;overflow:visible"><path d="M0.6 0.6L3.0 3.4L5.4 0.6" fill="none" stroke="#e0e0e0" stroke-width="1.4"/></svg>
<svg width="12" height="17" viewBox="0 0 12 17" style="position:absolute;left:471.1px;top:55.2px;overflow:visible"><rect x="0" y="0" width="12" height="17" rx="1" fill="#1d2833"/><rect x="1" y="1.2" width="10" height="5.5" rx="1" fill="#f0c800"/><path d="M2.5 3.5h7" stroke="#c8a000" stroke-width="0.8"/><path d="M1.5 9h9" stroke="#667" stroke-width="0.8" stroke-dasharray="1.5 1"/><rect x="1" y="11.5" width="10" height="1.8" fill="#f4f4f4"/><rect x="1" y="13.3" width="10" height="2.8" fill="#2a70d8"/></svg>
<svg width="17" height="20" viewBox="0 0 17 20" style="position:absolute;left:640px;top:54.8px;overflow:visible"><defs><linearGradient id="cyl" x1="0" x2="1"><stop offset="0" stop-color="#8a8a8a"/><stop offset="0.35" stop-color="#c4c4c4"/><stop offset="1" stop-color="#7a7a7a"/></linearGradient></defs><path d="M0.5 3.5V16a8 2.8 0 0 0 16 0V3.5" fill="url(#cyl)" stroke="#555" stroke-width="0.5"/><ellipse cx="8.5" cy="3.5" rx="8" ry="2.8" fill="#9a9a9a" stroke="#bbb" stroke-width="0.6"/></svg>
<svg width="6" height="4" viewBox="0 0 6 4" style="position:absolute;left:696px;top:69.7px;overflow:visible"><path d="M0.6 0.6L3.0 3.4L5.4 0.6" fill="none" stroke="#e0e0e0" stroke-width="1.4"/></svg>
<svg width="19" height="17" viewBox="0 0 19 17" style="position:absolute;left:714.9px;top:54.5px;overflow:visible"><rect x="0.5" y="0.5" width="18" height="15.5" fill="#fbfbfb" stroke="#1a1a1a" stroke-width="1"/><rect x="1.5" y="1.5" width="16" height="2.5" fill="#c8c8c8"/><g transform="translate(7.8 9.2) rotate(180)"><path d="M0 0L3.2 0 2.2 1 4.2 3 3 4.2 1 2.2 0 3.2Z" fill="#d8101a"/></g><g transform="translate(11.2 9.2) rotate(270)"><path d="M0 0L3.2 0 2.2 1 4.2 3 3 4.2 1 2.2 0 3.2Z" fill="#d8101a"/></g><g transform="translate(7.8 10.5) rotate(90)"><path d="M0 0L3.2 0 2.2 1 4.2 3 3 4.2 1 2.2 0 3.2Z" fill="#d8101a"/></g><g transform="translate(11.2 10.5) rotate(0)"><path d="M0 0L3.2 0 2.2 1 4.2 3 3 4.2 1 2.2 0 3.2Z" fill="#d8101a"/></g></svg>
<div style='position:absolute;left:795px;top:51px;width:50.5px;height:24.5px;box-sizing:border-box;border-radius:3px;background:#303030;border:1px solid #2a2a2a'></div>
<svg width="16" height="16" viewBox="0 0 16 16" style="position:absolute;left:799.5px;top:54.8px;overflow:visible"><defs><radialGradient id="gbmap" cx="0.42" cy="0.4" r="0.62"><stop offset="0" stop-color="#3a7ae8"/><stop offset="0.55" stop-color="#3a7ae8"/><stop offset="1" stop-color="#08208a"/></radialGradient><radialGradient id="gbmaph" cx="0.5" cy="0.5" r="0.5"><stop offset="0" stop-color="#ffffff" stop-opacity="0.95"/><stop offset="1" stop-color="#ffffff" stop-opacity="0"/></radialGradient></defs><circle cx="8" cy="8" r="8" fill="url(#gbmap)"/><g transform="scale(1.0)"><path d="M3 4.5q2-2.5 4.5-2q0.5 1.5-1 2.5q1 1.5-0.5 3.5q-1.5 0-2-1.5q-1.5-0.5-1-2.5z" fill="#ffffff" fill-opacity="0.55"/><path d="M9.5 3q3 0.5 4 3q-1 1-2.5 0.5q-1 -1.5-1.5-3.5z" fill="#ffffff" fill-opacity="0.35"/><ellipse cx="8.5" cy="12.8" rx="3.2" ry="2.2" fill="url(#gbmaph)"/><path d="M11 8q2 0.5 2.5 2.5q-1.5 0.5-2.5-0.5z" fill="#ffffff" fill-opacity="0.4"/></g></svg>
<div style='position:absolute;left:850px;top:54px;width:1px;height:20px;background:#2a2a2a;box-shadow:1px 0 0 #3c3c3c'></div>
<svg width="18" height="18" viewBox="0 0 18 18" style="position:absolute;left:858.4px;top:54.4px;overflow:visible"><defs><radialGradient id="crg" cx="0.5" cy="0.7" r="0.7"><stop offset="0" stop-color="#f06010"/><stop offset="0.6" stop-color="#d01818"/><stop offset="1" stop-color="#a00a0a"/></radialGradient></defs><circle cx="8.8" cy="8.8" r="8.7" fill="url(#crg)"/><ellipse cx="8.8" cy="4.2" rx="5.5" ry="3" fill="#fff" fill-opacity="0.25"/><path d="M5.6 5.6L12 12M12 5.6L5.6 12" stroke="#fff" stroke-width="2.4" stroke-linecap="round"/></svg>
<svg width="26" height="26" viewBox="0 0 26 26" style="position:absolute;left:1173.8px;top:50.6px;overflow:visible"><defs><radialGradient id="lg" cx="0.5" cy="0.5" r="0.55"><stop offset="0" stop-color="#6aa4dc"/><stop offset="0.6" stop-color="#2a64a4"/><stop offset="1" stop-color="#0a2440"/></radialGradient><linearGradient id="lgr" x1="0" y1="0" x2="1" y2="1"><stop offset="0" stop-color="#6a6a6a"/><stop offset="1" stop-color="#2a2a2a"/></linearGradient></defs><circle cx="12.8" cy="12.6" r="12.5" fill="url(#lgr)"/><circle cx="12.8" cy="12.6" r="11" fill="#151515"/><circle cx="12.8" cy="12.6" r="9.6" fill="none" stroke="#5a5a5a" stroke-width="0.8"/><circle cx="12.8" cy="12.6" r="8.6" fill="url(#lg)"/><ellipse cx="9.5" cy="16" rx="3" ry="1.6" transform="rotate(-45 9.5 16)" fill="#cfe6ff" fill-opacity="0.55"/><ellipse cx="15.8" cy="9.3" rx="2.6" ry="1.1" transform="rotate(-45 15.8 9.3)" fill="#ffffff" fill-opacity="0.8"/><circle cx="12.5" cy="12.8" r="1" fill="#e8f4ff" fill-opacity="0.7"/></svg>
<svg width="8.6" height="5.4" viewBox="0 0 8.6 5.4" style="position:absolute;left:244px;top:91px;overflow:visible"><path d="M0.6 0.6L4.3 4.800000000000001L8.0 0.6" fill="none" stroke="#e0e0e0" stroke-width="1.6"/></svg>
<svg width="19" height="16" viewBox="0 0 20 16" style="position:absolute;left:36px;top:105px;overflow:visible"><path d="M0.5 1.5h8l1 1.2h9.5v12.8H0.5Z" fill="#7aa6e0" stroke="#34527a" stroke-width="0.6"/><rect x="2" y="3" width="15" height="4.5" fill="#e8eef8"/><rect x="2.5" y="3.5" width="3" height="3" fill="#701070"/><rect x="5" y="3.5" width="2.5" height="2.5" fill="#d02090"/><rect x="7" y="4" width="2" height="2" fill="#f0b020"/><path d="M0.5 6.5h19v9H0.5Z" fill="#8cb6ea" stroke="#34527a" stroke-width="0.6"/><path d="M1 9.5h18M1 12.5h18" stroke="#c8dcf4" stroke-width="0.8"/></svg>
<svg width="20" height="15" viewBox="0 0 20 16" style="position:absolute;left:53px;top:127px;overflow:visible"><path d="M0.5 1.5h8l1 1.2h9.5v12.8H0.5Z" fill="#7aa6e0" stroke="#34527a" stroke-width="0.6"/><rect x="2" y="3" width="15" height="4.5" fill="#e8eef8"/><rect x="2.5" y="3.5" width="3" height="3" fill="#701070"/><rect x="5" y="3.5" width="2.5" height="2.5" fill="#d02090"/><rect x="7" y="4" width="2" height="2" fill="#f0b020"/><path d="M0.5 6.5h19v9H0.5Z" fill="#8cb6ea" stroke="#34527a" stroke-width="0.6"/><path d="M1 9.5h18M1 12.5h18" stroke="#c8dcf4" stroke-width="0.8"/></svg>
<div style='position:absolute;left:41px;top:121px;width:10px;height:13px;border-left:1px solid #555;border-bottom:1px solid #555'></div>
<div style='position:absolute;left:272.1px;top:610px;width:26.6px;height:16.5px;box-sizing:border-box;border-radius:3px;background:linear-gradient(#3b3b3b,#333);border:1px solid #242424;box-shadow:inset 0 1px 0 #444'></div>
<svg width="14" height="14" viewBox="0 0 14 14" style="position:absolute;left:278.5px;top:611.5px;overflow:visible"><defs><radialGradient id="gbbt" cx="0.42" cy="0.4" r="0.62"><stop offset="0" stop-color="#3a7ae8"/><stop offset="0.55" stop-color="#3a7ae8"/><stop offset="1" stop-color="#08208a"/></radialGradient><radialGradient id="gbbth" cx="0.5" cy="0.5" r="0.5"><stop offset="0" stop-color="#ffffff" stop-opacity="0.95"/><stop offset="1" stop-color="#ffffff" stop-opacity="0"/></radialGradient></defs><circle cx="7" cy="7" r="7" fill="url(#gbbt)"/><g transform="scale(0.875)"><path d="M3 4.5q2-2.5 4.5-2q0.5 1.5-1 2.5q1 1.5-0.5 3.5q-1.5 0-2-1.5q-1.5-0.5-1-2.5z" fill="#ffffff" fill-opacity="0.55"/><path d="M9.5 3q3 0.5 4 3q-1 1-2.5 0.5q-1 -1.5-1.5-3.5z" fill="#ffffff" fill-opacity="0.35"/><ellipse cx="8.5" cy="12.8" rx="3.2" ry="2.2" fill="url(#gbbth)"/><path d="M11 8q2 0.5 2.5 2.5q-1.5 0.5-2.5-0.5z" fill="#ffffff" fill-opacity="0.4"/></g></svg>
<svg width="5.5" height="3.6" viewBox="0 0 5.5 3.6" style="position:absolute;left:291.5px;top:622.2px;overflow:visible"><path d="M0.6 0.6L2.75 3.0L4.9 0.6" fill="none" stroke="#e8e8e8" stroke-width="1.3"/></svg>
<div style='position:absolute;left:302.1px;top:610px;width:19.3px;height:16.5px;box-sizing:border-box;border-radius:3px;background:linear-gradient(#3b3b3b,#333);border:1px solid #242424;box-shadow:inset 0 1px 0 #444'></div>
<svg width="16" height="16" viewBox="0 0 16 16" style="position:absolute;left:304px;top:611.2px;overflow:visible"><g transform="scale(1.0)"><circle cx="6.2" cy="6.2" r="5.3" fill="#c8d8ec" stroke="#8aa0b8" stroke-width="1.4"/><ellipse cx="5" cy="4.5" rx="2.5" ry="1.6" fill="#fff" fill-opacity="0.6"/><path d="M3.2 6.2h6M6.2 3.2v6" stroke="#2a4a80" stroke-width="1.3"/><path d="M10 10L14.5 14.5" stroke="#ddd" stroke-width="1.6" stroke-linecap="round"/></g></svg>
<div style='position:absolute;left:325px;top:610px;width:19.1px;height:16.5px;box-sizing:border-box;border-radius:3px;background:linear-gradient(#3b3b3b,#333);border:1px solid #242424;box-shadow:inset 0 1px 0 #444'></div>
<svg width="16" height="16" viewBox="0 0 16 16" style="position:absolute;left:327px;top:611.2px;overflow:visible"><g transform="scale(1.0)"><circle cx="6.2" cy="6.2" r="5.3" fill="#c8d8ec" stroke="#8aa0b8" stroke-width="1.4"/><ellipse cx="5" cy="4.5" rx="2.5" ry="1.6" fill="#fff" fill-opacity="0.6"/><path d="M3.2 6.2h6" stroke="#2a4a80" stroke-width="1.5"/><path d="M10 10L14.5 14.5" stroke="#ddd" stroke-width="1.6" stroke-linecap="round"/></g></svg>
<svg width="16" height="14" viewBox="0 0 16 14" style="position:absolute;left:350px;top:612.2px;overflow:visible"><rect x="0.5" y="0.5" width="14.5" height="13" fill="#6a9ee0" stroke="#1a2a40" stroke-width="0.8"/><rect x="1.5" y="1.5" width="12.5" height="4.5" fill="#e8eef8"/><rect x="2" y="2" width="3" height="3.5" fill="#301040"/><rect x="4.5" y="2" width="3" height="3" fill="#c02890"/><rect x="7" y="2.3" width="2.5" height="2.5" fill="#f0a020"/><rect x="9.5" y="2.5" width="2" height="2" fill="#40a0f0"/><path d="M1 8h13.5M1 11h13.5" stroke="#c8dcf4" stroke-width="1"/></svg>
<div style='position:absolute;left:370px;top:609px;width:1px;height:19px;background:#2a2a2a;box-shadow:1px 0 0 #3c3c3c'></div>
<div style='position:absolute;left:373.4px;top:610.5px;width:22.6px;height:14.5px;box-sizing:border-box;border-radius:3px;background:linear-gradient(#3b3b3b,#333);border:1px solid #242424;box-shadow:inset 0 1px 0 #444'></div>
<div style='position:absolute;left:400px;top:610.5px;width:17.8px;height:14.5px;box-sizing:border-box;border-radius:3px;background:linear-gradient(#3b3b3b,#333);border:1px solid #242424;box-shadow:inset 0 1px 0 #444'></div>
<div style='position:absolute;left:421px;top:609px;width:1px;height:19px;background:#2a2a2a;box-shadow:1px 0 0 #3c3c3c'></div>
<div style='position:absolute;left:424.9px;top:610.5px;width:17.9px;height:16.5px;box-sizing:border-box;border-radius:3px;background:#303030;border:1px solid #2a2a2a'></div>
<svg width="18" height="18" viewBox="0 0 18 18" style="position:absolute;left:424.9px;top:609.8px;overflow:visible"><g fill="#e8e8e8"><path d="M9 1l2.5 3h-5z"/><path d="M9 17l2.5-3h-5z"/><path d="M1 9l3-2.5v5z"/><path d="M17 9l-3-2.5v5z"/><circle cx="9" cy="9" r="1"/></g></svg>
<div style='position:absolute;left:447.6px;top:610px;width:18.4px;height:16.2px;box-sizing:border-box;border-radius:3px;background:linear-gradient(#3e3e3e,#363636);border:1px solid #1a1a1a;box-shadow:inset 0 0 0 1px #4a4a4a'></div>
<svg width="17" height="17" viewBox="0 0 17 17" style="position:absolute;left:449px;top:610.5px;overflow:visible"><path d="M0.5 0.5h12l2 2v13.5H0.5Z" fill="#f4f4f4" stroke="#222" stroke-width="0.7"/><circle cx="7" cy="6.5" r="5" fill="#cde0f6" stroke="#8aa8c8" stroke-width="1"/><path d="M10.5 10.5l5 5" stroke="#e0e0e0" stroke-width="1.5"/></svg>
<div style='position:absolute;left:470.4px;top:610px;width:18.4px;height:16.2px;box-sizing:border-box;border-radius:3px;background:linear-gradient(#3b3b3b,#333);border:1px solid #242424;box-shadow:inset 0 1px 0 #444'></div>
<svg width="12" height="14" viewBox="0 0 12 14" style="position:absolute;left:475px;top:611px;overflow:visible"><path d="M1 0.5v12l3-3 2.5 4.5 2-1-2.5-4.5h4z" fill="#e0e0e0" stroke="#777" stroke-width="0.5"/></svg>
<div style='position:absolute;left:961.2px;top:591.4px;width:25.9px;height:16.1px;box-sizing:border-box;border-radius:3px;background:linear-gradient(#3b3b3b,#333);border:1px solid #242424;box-shadow:inset 0 1px 0 #444'></div>
<svg width="14" height="14" viewBox="0 0 14 14" style="position:absolute;left:967.5px;top:592.5px;overflow:visible"><defs><radialGradient id="gbr" cx="0.42" cy="0.4" r="0.62"><stop offset="0" stop-color="#9a9a9a"/><stop offset="0.55" stop-color="#9a9a9a"/><stop offset="1" stop-color="#3a3a3a"/></radialGradient><radialGradient id="gbrh" cx="0.5" cy="0.5" r="0.5"><stop offset="0" stop-color="#f4f4f4" stop-opacity="0.95"/><stop offset="1" stop-color="#f4f4f4" stop-opacity="0"/></radialGradient></defs><circle cx="7" cy="7" r="7" fill="url(#gbr)"/><g transform="scale(0.875)"><path d="M3 4.5q2-2.5 4.5-2q0.5 1.5-1 2.5q1 1.5-0.5 3.5q-1.5 0-2-1.5q-1.5-0.5-1-2.5z" fill="#f4f4f4" fill-opacity="0.55"/><path d="M9.5 3q3 0.5 4 3q-1 1-2.5 0.5q-1 -1.5-1.5-3.5z" fill="#f4f4f4" fill-opacity="0.35"/><ellipse cx="8.5" cy="12.8" rx="3.2" ry="2.2" fill="url(#gbrh)"/><path d="M11 8q2 0.5 2.5 2.5q-1.5 0.5-2.5-0.5z" fill="#f4f4f4" fill-opacity="0.4"/></g></svg>
<svg width="5.5" height="3.6" viewBox="0 0 5.5 3.6" style="position:absolute;left:981px;top:603.5px;overflow:visible"><path d="M0.6 0.6L2.75 3.0L4.9 0.6" fill="none" stroke="#888" stroke-width="1.2"/></svg>
<div style='position:absolute;left:991px;top:591.4px;width:18.9px;height:16.1px;box-sizing:border-box;border-radius:3px;background:linear-gradient(#3b3b3b,#333);border:1px solid #242424;box-shadow:inset 0 1px 0 #444'></div>
<svg width="16" height="16" viewBox="0 0 16 16" style="position:absolute;left:993px;top:592.5px;overflow:visible"><g transform="scale(1.0)"><circle cx="6.2" cy="6.2" r="5.3" fill="#b8b8b8" stroke="#909090" stroke-width="1.4"/><ellipse cx="5" cy="4.5" rx="2.5" ry="1.6" fill="#fff" fill-opacity="0.6"/><path d="M3.2 6.2h6M6.2 3.2v6" stroke="#444" stroke-width="1.3"/><path d="M10 10L14.5 14.5" stroke="#ddd" stroke-width="1.6" stroke-linecap="round"/></g></svg>
<div style='position:absolute;left:1014px;top:591.4px;width:19px;height:16.1px;box-sizing:border-box;border-radius:3px;background:linear-gradient(#3b3b3b,#333);border:1px solid #242424;box-shadow:inset 0 1px 0 #444'></div>
<svg width="16" height="16" viewBox="0 0 16 16" style="position:absolute;left:1016px;top:592.5px;overflow:visible"><g transform="scale(1.0)"><circle cx="6.2" cy="6.2" r="5.3" fill="#b8b8b8" stroke="#909090" stroke-width="1.4"/><ellipse cx="5" cy="4.5" rx="2.5" ry="1.6" fill="#fff" fill-opacity="0.6"/><path d="M3.2 6.2h6" stroke="#444" stroke-width="1.5"/><path d="M10 10L14.5 14.5" stroke="#ddd" stroke-width="1.6" stroke-linecap="round"/></g></svg>
<svg width="16" height="14" viewBox="0 0 16 14" style="position:absolute;left:1039.4px;top:594px;overflow:visible"><rect x="0.5" y="0.5" width="14" height="12" fill="#d0d0d0" stroke="#222" stroke-width="0.8"/><rect x="1.5" y="1.5" width="12" height="4" fill="#f4f4f4"/><rect x="2" y="2.2" width="8" height="2.4" fill="#555"/><path d="M1 7.5h13M1 10h13" stroke="#f0f0f0" stroke-width="0.9"/></svg>
<div style='position:absolute;left:1058px;top:590px;width:1px;height:19px;background:#2a2a2a;box-shadow:1px 0 0 #3c3c3c'></div>
<div style='position:absolute;left:1061.3px;top:592.4px;width:22.4px;height:13.2px;box-sizing:border-box;border-radius:3px;background:linear-gradient(#3b3b3b,#333);border:1px solid #242424;box-shadow:inset 0 1px 0 #444'></div>
<div style='position:absolute;left:1088px;top:592.4px;width:17.7px;height:13.2px;box-sizing:border-box;border-radius:3px;background:linear-gradient(#3b3b3b,#333);border:1px solid #242424;box-shadow:inset 0 1px 0 #444'></div>
<div style='position:absolute;left:1109.2px;top:590px;width:1px;height:19px;background:#2a2a2a;box-shadow:1px 0 0 #3c3c3c'></div>
<div style='position:absolute;left:1111.9px;top:592px;width:17.9px;height:16px;box-sizing:border-box;border-radius:3px;background:#303030;border:1px solid #2a2a2a'></div>
<svg width="18" height="18" viewBox="0 0 18 18" style="position:absolute;left:1111.9px;top:591.3px;overflow:visible"><g fill="#d0d0d0"><path d="M9 1l2.5 3h-5z"/><path d="M9 17l2.5-3h-5z"/><path d="M1 9l3-2.5v5z"/><path d="M17 9l-3-2.5v5z"/><circle cx="9" cy="9" r="1"/></g></svg>
<div style='position:absolute;left:1134.6px;top:591.3px;width:18.4px;height:16.5px;box-sizing:border-box;border-radius:3px;background:linear-gradient(#3e3e3e,#363636);border:1px solid #1a1a1a;box-shadow:inset 0 0 0 1px #4a4a4a'></div>
<svg width="17" height="17" viewBox="0 0 17 17" style="position:absolute;left:1136px;top:591.8px;overflow:visible"><path d="M0.5 0.5h12l2 2v13.5H0.5Z" fill="#f4f4f4" stroke="#222" stroke-width="0.7"/><circle cx="7" cy="6.5" r="5" fill="#cde0f6" stroke="#8aa8c8" stroke-width="1"/><path d="M10.5 10.5l5 5" stroke="#e0e0e0" stroke-width="1.5"/></svg>
<div style='position:absolute;left:1157.4px;top:591.3px;width:18.4px;height:16.5px;box-sizing:border-box;border-radius:3px;background:linear-gradient(#3b3b3b,#333);border:1px solid #242424;box-shadow:inset 0 1px 0 #444'></div>
<svg width="14" height="16" viewBox="0 0 14 16" style="position:absolute;left:1160px;top:592.5px;overflow:visible"><path d="M4 7V4.5a3.5 3.5 0 0 1 7 0V6" fill="none" stroke="#bbb" stroke-width="2"/><rect x="1" y="7" width="11" height="8" fill="#a8a8a8" stroke="#666" stroke-width="0.5"/><path d="M1.5 9h10M1.5 11h10M1.5 13h10" stroke="#c8c8c8" stroke-width="0.7"/></svg>
<svg width="7" height="4.3" viewBox="0 0 7 4.3" style="position:absolute;left:1141.7px;top:620.2px;overflow:visible"><path d="M0.6 0.6L3.5 3.6999999999999997L6.4 0.6" fill="none" stroke="#666" stroke-width="1.2"/></svg>
<div style='position:absolute;left:1157.4px;top:613.4px;width:18.4px;height:16px;box-sizing:border-box;border-radius:3px;background:linear-gradient(#3b3b3b,#333);border:1px solid #242424;box-shadow:inset 0 1px 0 #444'></div>
<div style='position:absolute;left:1160px;top:616px;width:13px;height:11px;background:#eee;border:1px solid #888;box-sizing:border-box'></div>
<svg width="8.4" height="8.4" viewBox="0 0 8.4 8.4" style="position:absolute;left:1162.5px;top:617px;overflow:visible"><defs><radialGradient id="gbr2" cx="0.42" cy="0.4" r="0.62"><stop offset="0" stop-color="#9a9a9a"/><stop offset="0.55" stop-color="#9a9a9a"/><stop offset="1" stop-color="#3a3a3a"/></radialGradient><radialGradient id="gbr2h" cx="0.5" cy="0.5" r="0.5"><stop offset="0" stop-color="#f4f4f4" stop-opacity="0.95"/><stop offset="1" stop-color="#f4f4f4" stop-opacity="0"/></radialGradient></defs><circle cx="4.2" cy="4.2" r="4.2" fill="url(#gbr2)"/><g transform="scale(0.525)"><path d="M3 4.5q2-2.5 4.5-2q0.5 1.5-1 2.5q1 1.5-0.5 3.5q-1.5 0-2-1.5q-1.5-0.5-1-2.5z" fill="#f4f4f4" fill-opacity="0.55"/><path d="M9.5 3q3 0.5 4 3q-1 1-2.5 0.5q-1 -1.5-1.5-3.5z" fill="#f4f4f4" fill-opacity="0.35"/><ellipse cx="8.5" cy="12.8" rx="3.2" ry="2.2" fill="url(#gbr2h)"/><path d="M11 8q2 0.5 2.5 2.5q-1.5 0.5-2.5-0.5z" fill="#f4f4f4" fill-opacity="0.4"/></g></svg>
<svg width="14" height="14" viewBox="0 0 14 14" style="position:absolute;left:1183.5px;top:82.5px;overflow:visible"><path d="M2.5 0.5h10.5v9.5l-3 3H2.5Z" fill="#f4f4f4" stroke="#222" stroke-width="0.8"/><path d="M0.8 13.2l1-3 7-7 2 2-7 7z" fill="#d8a830" stroke="#3a2a10" stroke-width="0.6"/></svg>
<svg width="15" height="15" viewBox="0 0 15 15" style="position:absolute;left:1183px;top:102.5px;overflow:visible"><rect x="4.5" y="0.5" width="10" height="11" fill="#f4f4f4" stroke="#333" stroke-width="0.6"/><rect x="5.5" y="1.5" width="8" height="6.5" fill="#50a040"/><circle cx="9.5" cy="4.8" r="2.5" fill="#f0e020"/><circle cx="9.5" cy="4.8" r="1" fill="#111"/><circle cx="4.3" cy="10.5" r="4.2" fill="#2a6ad8" stroke="#0a2a70" stroke-width="0.5"/><path d="M4.3 8.5v4.5" stroke="#fff" stroke-width="1.3"/><circle cx="4.3" cy="7.5" r="0.7" fill="#fff"/></svg>
<svg width="15" height="15" viewBox="0 0 15 15" style="position:absolute;left:1183px;top:124px;overflow:visible"><circle cx="2" cy="6" r="0.9" fill="#40c040"/><circle cx="2.5" cy="9" r="0.9" fill="#90d020"/><circle cx="13" cy="4" r="0.9" fill="#8030c0"/><circle cx="7" cy="0.9" r="0.9" fill="#3050d0"/><rect x="2" y="12.5" width="5" height="1.5" fill="#c01010"/><path d="M4 4.5l7-3 3.5 8-6.5 4z" fill="#f8f8f8" stroke="#555" stroke-width="0.5"/><path d="M8 7l4-1.5 1.5 4-4 2z" fill="#f0b000"/><path d="M3 5l5-2 0.8 2-5 1.8z" fill="#d02020"/></svg>
<svg width="13.6" height="13.6" viewBox="0 0 13.6 13.6" style="position:absolute;left:1183.5px;top:146px;overflow:visible"><defs><radialGradient id="gbtab" cx="0.42" cy="0.4" r="0.62"><stop offset="0" stop-color="#3a7ae8"/><stop offset="0.55" stop-color="#3a7ae8"/><stop offset="1" stop-color="#08208a"/></radialGradient><radialGradient id="gbtabh" cx="0.5" cy="0.5" r="0.5"><stop offset="0" stop-color="#ffffff" stop-opacity="0.95"/><stop offset="1" stop-color="#ffffff" stop-opacity="0"/></radialGradient></defs><circle cx="6.8" cy="6.8" r="6.8" fill="url(#gbtab)"/><g transform="scale(0.85)"><path d="M3 4.5q2-2.5 4.5-2q0.5 1.5-1 2.5q1 1.5-0.5 3.5q-1.5 0-2-1.5q-1.5-0.5-1-2.5z" fill="#ffffff" fill-opacity="0.55"/><path d="M9.5 3q3 0.5 4 3q-1 1-2.5 0.5q-1 -1.5-1.5-3.5z" fill="#ffffff" fill-opacity="0.35"/><ellipse cx="8.5" cy="12.8" rx="3.2" ry="2.2" fill="url(#gbtabh)"/><path d="M11 8q2 0.5 2.5 2.5q-1.5 0.5-2.5-0.5z" fill="#ffffff" fill-opacity="0.4"/></g></svg>
<div class='t' style='left:1185.6px;top:162.3px;font-size:10px;color:#f0f0f0;transform-origin:0 0;transform:translateX(8px) rotate(90deg) scaleX(0.92)'>Geolocation</div>
<svg width="15" height="14" viewBox="0 0 15 14" style="position:absolute;left:1183px;top:219px;overflow:visible"><rect x="3.5" y="0.5" width="10" height="10" fill="#eee" stroke="#333" stroke-width="0.6"/><rect x="4.5" y="1.5" width="8" height="6" fill="#50a040"/><circle cx="8.5" cy="4.5" r="2.3" fill="#f0e020"/><circle cx="8.5" cy="4.5" r="0.9" fill="#111"/><rect x="0.5" y="8" width="8" height="5" fill="#ddd" stroke="#777" stroke-width="0.5"/><path d="M9 10.5l2 2 3.5-4" stroke="#30b030" stroke-width="1.5" fill="none"/></svg>
<svg width="14" height="14" viewBox="0 0 14 14" style="position:absolute;left:1183.5px;top:240px;overflow:visible"><rect x="0.5" y="0.5" width="13" height="13" fill="#c02070"/><path d="M0.5 0.5h7v6h-7z" fill="#4050e0"/><path d="M6 3l5 8-4 1z" fill="#f0a020"/><rect x="8" y="6" width="2" height="8" fill="#2060f0"/><rect x="11" y="4" width="2.5" height="10" fill="#30b0f0"/><path d="M1 13l4-6 3 4z" fill="#e04040"/></svg>
<svg width="13" height="14" viewBox="0 0 13 14" style="position:absolute;left:1184px;top:261px;overflow:visible"><path d="M0.5 1.5q6-2.5 12 0l-4.5 5v6.5l-3-1.5v-5z" fill="#c8c8c8" stroke="#888" stroke-width="0.5"/><ellipse cx="6.5" cy="1.6" rx="5.8" ry="1.1" fill="#eee"/></svg>
<svg width="16" height="12" viewBox="0 0 16 12" style="position:absolute;left:553px;top:633.5px;overflow:visible"><rect x="0.5" y="2" width="15" height="9.5" rx="1" fill="#c8c8c8" stroke="#666" stroke-width="0.6"/><rect x="2" y="0.5" width="4" height="2" fill="#aaa"/><circle cx="9.5" cy="6.8" r="3.3" fill="#555" stroke="#eee" stroke-width="0.9"/><circle cx="9.5" cy="6.8" r="1.4" fill="#222"/></svg>
<svg width="16" height="14" viewBox="0 0 16 14" style="position:absolute;left:646.5px;top:633px;overflow:visible"><rect x="0.5" y="0.5" width="14.5" height="13" fill="#6a9ee0" stroke="#1a2a40" stroke-width="0.8"/><rect x="1.5" y="1.5" width="12.5" height="4.5" fill="#e8eef8"/><rect x="2" y="2" width="3" height="3.5" fill="#301040"/><rect x="4.5" y="2" width="3" height="3" fill="#c02890"/><rect x="7" y="2.3" width="2.5" height="2.5" fill="#f0a020"/><rect x="9.5" y="2.5" width="2" height="2" fill="#40a0f0"/><path d="M1 8h13.5M1 11h13.5" stroke="#c8dcf4" stroke-width="1"/></svg>
<svg width="12" height="15" viewBox="0 0 12 15" style="position:absolute;left:848.7px;top:631.5px;overflow:visible"><path d="M0.5 0.5h11v10.5l-3 3H0.5Z" fill="#f8f8f8" stroke="#555" stroke-width="0.6"/><path d="M8.5 14l3-3h-3z" fill="#ccc"/><rect x="1.5" y="1.5" width="2.5" height="2.5" fill="none" stroke="#888" stroke-width="0.6"/><path d="M3 5v6M1.5 9.5l1.5 2 1.5-2M5 3h5M8.5 1.5l1.8 1.5-1.8 1.5" stroke="#1a6ae0" stroke-width="1" fill="none"/></svg>
<svg width="16" height="16" viewBox="0 0 16 16" style="position:absolute;left:868px;top:631.5px;overflow:visible"><g transform="scale(0.92)"><circle cx="6.2" cy="6.2" r="5.3" fill="#c8d8ec" stroke="#8aa0b8" stroke-width="1.4"/><ellipse cx="5" cy="4.5" rx="2.5" ry="1.6" fill="#fff" fill-opacity="0.6"/><path d="M4.5 4.5v4M7.5 4.5v4" stroke="#2a4a80" stroke-width="1"/><path d="M10 10L14.5 14.5" stroke="#ddd" stroke-width="1.6" stroke-linecap="round"/></g></svg>
<svg width="16" height="16" viewBox="0 0 16 16" style="position:absolute;left:890px;top:631.5px;overflow:visible"><g opacity="0.45" transform="scale(0.92)"><circle cx="6.2" cy="6.2" r="5.3" fill="#b8b8b8" stroke="#909090" stroke-width="1.4"/><ellipse cx="5" cy="4.5" rx="2.5" ry="1.6" fill="#fff" fill-opacity="0.6"/><path d="M3.2 6.2h6" stroke="#444" stroke-width="1.5"/><path d="M10 10L14.5 14.5" stroke="#ddd" stroke-width="1.6" stroke-linecap="round"/></g></svg>
<div style='position:absolute;left:915px;top:636.8px;width:93px;height:4.2px;background:#1c1c1c;border-radius:2px;box-shadow:0 1px 0 #3a3a3a'></div>
<div style='position:absolute;left:910.8px;top:633px;width:11px;height:11px;border-radius:50%;background:radial-gradient(circle at 50% 40%,#5a5a5a,#3e3e3e);border:0.5px solid #262626;box-sizing:border-box'></div>
<svg width="16" height="16" viewBox="0 0 16 16" style="position:absolute;left:1015.5px;top:631.5px;overflow:visible"><g transform="scale(0.92)"><circle cx="6.2" cy="6.2" r="5.3" fill="#c8d8ec" stroke="#8aa0b8" stroke-width="1.4"/><ellipse cx="5" cy="4.5" rx="2.5" ry="1.6" fill="#fff" fill-opacity="0.6"/><path d="M3.2 6.2h6M6.2 3.2v6" stroke="#2a4a80" stroke-width="1.3"/><path d="M10 10L14.5 14.5" stroke="#ddd" stroke-width="1.6" stroke-linecap="round"/></g></svg>
<svg width="12" height="8" viewBox="0 0 12 8" style="position:absolute;left:1079.6px;top:636px;overflow:visible"><path d="M0 4L4 0h8v8H4Z" fill="#f0f0f0"/><path d="M5.5 2l4 4M9.5 2l-4 4" stroke="#222" stroke-width="1.3"/></svg>
<svg width="8.2" height="4.3" viewBox="0 0 8.2 4.3" style="position:absolute;left:1098px;top:637.3px;overflow:visible"><path d="M0.6 0.6L4.1 3.6999999999999997L7.6 0.6" fill="none" stroke="#e8e8e8" stroke-width="1.5"/></svg>
<svg width="13" height="12" viewBox="0 0 13 12" style="position:absolute;left:1120px;top:634.3px;overflow:visible"><defs><linearGradient id="nvfirst" x1="0" y1="0" x2="0" y2="1"><stop offset="0" stop-color="#a8ccf4"/><stop offset="1" stop-color="#2a68c0"/></linearGradient></defs><circle cx="1.2" cy="6" r="1.2" fill="#5a90d8"/><path d="M3 6L12.5 0.5V11.5Z" fill="url(#nvfirst)" stroke="#1a4a90" stroke-width="0.5"/></svg>
<svg width="14" height="12" viewBox="0 0 14 12" style="position:absolute;left:1139.8px;top:634.3px;overflow:visible"><defs><linearGradient id="nvprev" x1="0" y1="0" x2="0" y2="1"><stop offset="0" stop-color="#a8ccf4"/><stop offset="1" stop-color="#2a68c0"/></linearGradient></defs><path d="M0.5 6L6.5 0.5V3.5H13.5V8.5H6.5V11.5Z" fill="url(#nvprev)" stroke="#1a4a90" stroke-width="0.5"/></svg>
<svg width="14" height="12" viewBox="0 0 14 12" style="position:absolute;left:1161.5px;top:634.3px;overflow:visible"><defs><linearGradient id="nvnext" x1="0" y1="0" x2="0" y2="1"><stop offset="0" stop-color="#a8ccf4"/><stop offset="1" stop-color="#2a68c0"/></linearGradient></defs><path d="M13.5 6L7.5 0.5V3.5H0.5V8.5H7.5V11.5Z" fill="url(#nvnext)" stroke="#1a4a90" stroke-width="0.5"/></svg>
<svg width="13" height="12" viewBox="0 0 13 12" style="position:absolute;left:1182px;top:634.3px;overflow:visible"><defs><linearGradient id="nvlast" x1="0" y1="0" x2="0" y2="1"><stop offset="0" stop-color="#a8ccf4"/><stop offset="1" stop-color="#2a68c0"/></linearGradient></defs><path d="M10 6L0.5 0.5V11.5Z" fill="url(#nvlast)" stroke="#1a4a90" stroke-width="0.5"/><circle cx="12" cy="6" r="1.2" fill="#5a90d8"/></svg>
<svg width="7.8" height="4.5" viewBox="0 0 7.8 4.5" style="position:absolute;left:816px;top:637.5px;overflow:visible"><path d="M0.6 0.6L3.9 3.9L7.2 0.6" fill="none" stroke="#e0e0e0" stroke-width="1.5"/></svg>
<span class='t' style='left:13.2px;top:7.08px;font-size:15.5px;color:#1e1e1e;letter-spacing:3.3px;-webkit-text-stroke:0.2px #1e1e1e;'>Design Sketch</span>
<span class='t' style='left:842.3px;top:6.41px;font-size:17px;color:#1e1e1e;letter-spacing:1.5px;transform:scaleX(1.115);-webkit-text-stroke:0.2px #1e1e1e;'>Map View amd geolocation sidebar.</span>
<span class='t' style='left:7px;top:36.47px;font-size:11.5px;color:#e6e6e6;transform:scaleX(0.882);'>Device</span>
<span class='t' style='left:52px;top:36.47px;font-size:11.5px;color:#e6e6e6;transform:scaleX(0.857);'>Edit</span>
<span class='t' style='left:83px;top:36.47px;font-size:11.5px;color:#e6e6e6;transform:scaleX(0.923);'>Image</span>
<span class='t' style='left:126px;top:36.47px;font-size:11.5px;color:#e6e6e6;transform:scaleX(0.930);'>View</span>
<span class='t' style='left:162.5px;top:36.47px;font-size:11.5px;color:#e6e6e6;transform:scaleX(0.890);'>Settings</span>
<span class='t' style='left:213.5px;top:36.47px;font-size:11.5px;color:#e6e6e6;transform:scaleX(0.930);'>Help</span>
<span class='t' style='left:31px;top:58.61px;font-size:10.5px;color:#6a6a6a;transform:scaleX(0.910);'>Capture</span>
<span class='t' style='left:103px;top:58.61px;font-size:10.5px;color:#6a6a6a;transform:scaleX(0.857);'>Cancel</span>
<span class='t' style='left:163px;top:58.61px;font-size:10.5px;color:#6a6a6a;transform:scaleX(0.907);'>Pause</span>
<span class='t' style='left:230px;top:58.61px;font-size:10.5px;color:#e8e8e8;transform:scaleX(0.847);'>Thumbnails</span>
<span class='t' style='left:312.5px;top:58.11px;font-size:10.5px;color:#e8e8e8;transform:scaleX(0.878);'>View Image</span>
<span class='t' style='left:399.5px;top:58.61px;font-size:10.5px;color:#e8e8e8;transform:scaleX(0.889);'>Download</span>
<span class='t' style='left:489.5px;top:58.11px;font-size:10.5px;color:#e8e8e8;transform:scaleX(0.871);'>Upload</span>
<span class='t' style='left:530px;top:58.61px;font-size:10.5px;color:#e8e8e8;transform:scaleX(0.914);'>Select All</span>
<span class='t' style='left:578.8px;top:58.61px;font-size:10.5px;color:#e8e8e8;transform:scaleX(0.918);'>Select None</span>
<span class='t' style='left:661px;top:58.61px;font-size:10.5px;color:#6a6a6a;transform:scaleX(0.889);'>Delete</span>
<span class='t' style='left:736.2px;top:58.11px;font-size:10.5px;color:#e8e8e8;transform:scaleX(0.866);'>Full Screen</span>
<span class='t' style='left:819.5px;top:58.11px;font-size:10.5px;color:#e8e8e8;transform:scaleX(0.881);'>Map</span>
<span class='t' style='left:879.7px;top:58.61px;font-size:10.5px;color:#e8e8e8;transform:scaleX(0.856);'>Close</span>
<span class='t' style='left:1080.4px;top:54.76px;font-size:16px;color:#8c8c8c;transform:scaleX(1.054);'>digiKam.org</span>
<span class='t' style='left:36.6px;top:88.69px;font-size:11px;color:#e6e6e6;transform:scaleX(0.993);'>My Albums</span>
<span class='t' style='left:60.6px;top:108.29px;font-size:11px;color:#e6e6e6;transform:scaleX(0.993);'>My Albums</span>
<span class='t' style='left:78.6px;top:128.69px;font-size:11px;color:#f0f0f0;transform:scaleX(0.916);'>Sample Pictures</span>
<span class='t' style='left:35px;top:614.61px;font-size:10.5px;color:#777;font-style:italic;transform:scaleX(0.904);'>Search...</span>
<span class='t' style='left:959px;top:544.11px;font-size:10.5px;color:#5f5f5f;font-weight:bold;transform:scaleX(0.986);'>Altitude:</span>
<span class='t' style='left:959px;top:556.11px;font-size:10.5px;color:#5f5f5f;font-weight:bold;transform:scaleX(0.925);'>Latitude:</span>
<span class='t' style='left:959px;top:567.61px;font-size:10.5px;color:#5f5f5f;font-weight:bold;transform:scaleX(0.959);'>Longitude:</span>
<span class='t' style='left:959px;top:579.11px;font-size:10.5px;color:#5f5f5f;font-weight:bold;transform:scaleX(1.028);'>Date:</span>
<span class='t' style='left:592px;top:635.11px;font-size:10.5px;color:#333;transform:scaleX(0.952);'>97%</span>
<span class='t' style='left:685px;top:635.11px;font-size:10.5px;color:#333;transform:scaleX(0.952);'>97%</span>
<span class='t' style='left:743px;top:634.19px;font-size:11px;color:#e6e6e6;transform:scaleX(0.927);'>All Files</span>
<span class='t' style='left:1040.4px;top:633.69px;font-size:11px;color:#e6e6e6;transform:scaleX(0.953);'>73%</span>
<span class='t' style='left:1062.6px;top:615.69px;font-size:11px;color:#5e5e5e;transform:scaleX(0.855);'>MapQuest</span>
<span class='t' style='left:377px;top:612.69px;font-size:11px;color:#e8e8e8;font-weight:bold;transform:scaleX(1.254);'>T+</span>
<span class='t' style='left:403px;top:612.69px;font-size:11px;color:#e8e8e8;font-weight:bold;transform:scaleX(1.227);'>T-</span>
<span class='t' style='left:1064.5px;top:593.69px;font-size:11px;color:#7a7a7a;transform:scaleX(1.254);'>T+</span>
<span class='t' style='left:1092px;top:593.69px;font-size:11px;color:#7a7a7a;transform:scaleX(1.073);'>T-</span>
</body></html>
